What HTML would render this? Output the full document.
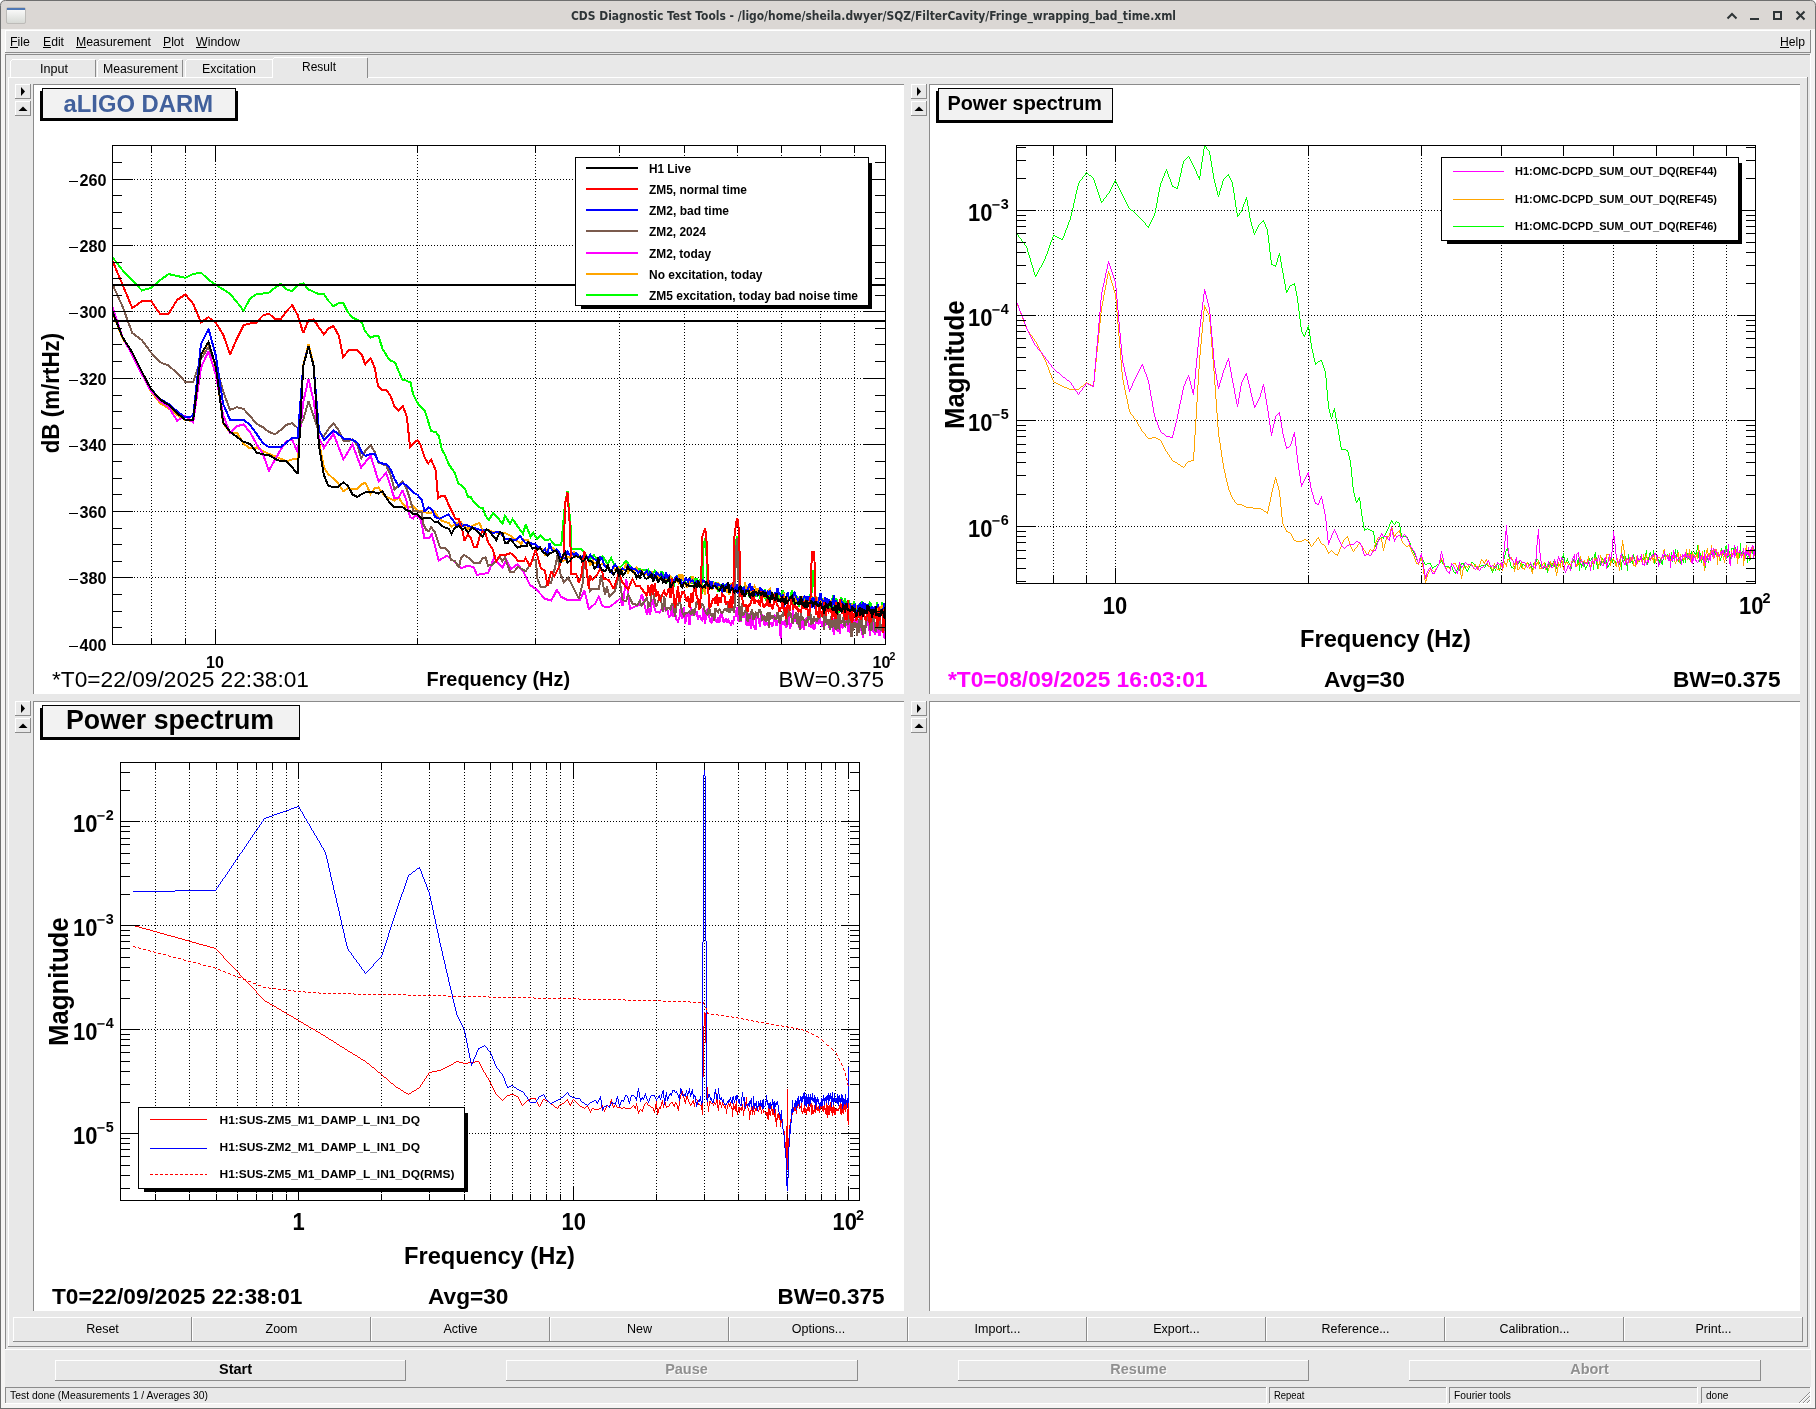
<!DOCTYPE html>
<html><head><meta charset="utf-8"><title>CDS Diagnostic Test Tools</title>
<style>
html,body{margin:0;padding:0;background:#fff;}
body{width:1816px;height:1409px;overflow:hidden;font-family:"Liberation Sans",sans-serif;}
svg{display:block;position:absolute;left:0;top:0;font-family:"Liberation Sans",sans-serif;will-change:transform;}
</style></head><body>
<svg width="1816" height="1409" viewBox="0 0 1816 1409" shape-rendering="crispEdges">
<rect x="0" y="0" width="1816" height="1409" fill="#ffffff" /><path d="M0.5 1409V5.5Q0.5 0.5 5.5 0.5H1810.5Q1815.5 0.5 1815.5 5.5V1409Z" fill="#dbd7d4" stroke="#6f6f6f" stroke-width="1" shape-rendering="auto"/><rect x="0" y="1408" width="1816" height="1" fill="#6f6f6f" /><rect x="1" y="29" width="1814" height="1379" fill="#f5f4f3" /><rect x="5" y="30" width="1806" height="1374" fill="#e8e8e8" /><rect x="5" y="30" width="1806" height="1" fill="#ffffff" /><rect x="5" y="30" width="1" height="23" fill="#ffffff" /><rect x="1810" y="30" width="1" height="23" fill="#8b8b8b" /><text x="873.5" y="20" font-size="12" font-weight="bold" text-anchor="middle" fill="#2e3436" font-family="DejaVu Sans Condensed, DejaVu Sans, sans-serif" textLength="605" lengthAdjust="spacingAndGlyphs">CDS Diagnostic Test Tools - /ligo/home/sheila.dwyer/SQZ/FilterCavity/Fringe_wrapping_bad_time.xml</text><defs><linearGradient id="ig" x1="0" y1="0" x2="0" y2="1"><stop offset="0" stop-color="#ffffff"/><stop offset="1" stop-color="#d6d8d4"/></linearGradient></defs><rect x="6.5" y="7.5" width="19" height="16" rx="1.5" fill="url(#ig)" stroke="#bdbbb8" shape-rendering="auto"/><rect x="7" y="8" width="18" height="2" fill="#4f78b5" /><g stroke="#2e3436" stroke-width="2" fill="none" shape-rendering="auto"><path d="M1727.5 18.5L1732 14L1736.5 18.5"/><path d="M1750 19H1759"/><rect x="1774" y="12" width="7" height="7"/><path d="M1796.5 11.5L1804.5 19.5M1804.5 11.5L1796.5 19.5"/></g><text x="10" y="46" font-size="12.5" fill="#000" textLength="20" lengthAdjust="spacingAndGlyphs" text-decoration="none">File</text><text x="43" y="46" font-size="12.5" fill="#000" textLength="21" lengthAdjust="spacingAndGlyphs" text-decoration="none">Edit</text><text x="76" y="46" font-size="12.5" fill="#000" textLength="75" lengthAdjust="spacingAndGlyphs" text-decoration="none">Measurement</text><text x="163" y="46" font-size="12.5" fill="#000" textLength="21" lengthAdjust="spacingAndGlyphs" text-decoration="none">Plot</text><text x="196" y="46" font-size="12.5" fill="#000" textLength="44" lengthAdjust="spacingAndGlyphs" text-decoration="none">Window</text><text x="1780" y="46" font-size="12.5" fill="#000" textLength="25" lengthAdjust="spacingAndGlyphs" text-decoration="none">Help</text><rect x="10" y="47" width="8" height="1" fill="#000" /><rect x="43" y="47" width="8" height="1" fill="#000" /><rect x="76" y="47" width="10" height="1" fill="#000" /><rect x="163" y="47" width="8" height="1" fill="#000" /><rect x="196" y="47" width="11" height="1" fill="#000" /><rect x="1780" y="47" width="9" height="1" fill="#000" /><rect x="5" y="52" width="1806" height="1" fill="#8b8b8b" /><rect x="5" y="54" width="1806" height="1" fill="#8b8b8b" /><rect x="5" y="54" width="1" height="1296" fill="#8b8b8b" /><rect x="5" y="1349" width="1806" height="1" fill="#ffffff" /><rect x="1810" y="54" width="1" height="1296" fill="#ffffff" /><rect x="8" y="77" width="1800" height="1" fill="#ffffff" /><rect x="8" y="77" width="1" height="1270" fill="#ffffff" /><rect x="8" y="1346" width="1800" height="1" fill="#8b8b8b" /><rect x="1807" y="77" width="1" height="1270" fill="#8b8b8b" /><rect x="12" y="59" width="83" height="1" fill="#ffffff" /><rect x="10" y="61" width="1" height="16" fill="#ffffff" /><rect x="11" y="60" width="1" height="1" fill="#ffffff" /><rect x="95" y="60" width="1" height="17" fill="#8b8b8b" /><text x="40" y="73" font-size="12.5" fill="#000" textLength="28" lengthAdjust="spacingAndGlyphs">Input</text><rect x="99" y="59" width="83" height="1" fill="#ffffff" /><rect x="97" y="61" width="1" height="16" fill="#ffffff" /><rect x="98" y="60" width="1" height="1" fill="#ffffff" /><rect x="182" y="60" width="1" height="17" fill="#8b8b8b" /><text x="103" y="73" font-size="12.5" fill="#000" textLength="75" lengthAdjust="spacingAndGlyphs">Measurement</text><rect x="187" y="59" width="85" height="1" fill="#ffffff" /><rect x="185" y="61" width="1" height="16" fill="#ffffff" /><rect x="186" y="60" width="1" height="1" fill="#ffffff" /><text x="202" y="73" font-size="12.5" fill="#000" textLength="54" lengthAdjust="spacingAndGlyphs">Excitation</text><rect x="272" y="57" width="96" height="21" fill="#e8e8e8" /><rect x="274" y="57" width="93" height="1" fill="#ffffff" /><rect x="272" y="59" width="1" height="19" fill="#ffffff" /><rect x="273" y="58" width="1" height="1" fill="#ffffff" /><rect x="367" y="58" width="1" height="20" fill="#8b8b8b" /><text x="302" y="71" font-size="12.5" fill="#000" textLength="34" lengthAdjust="spacingAndGlyphs">Result</text><rect x="33" y="84" width="871" height="610" fill="#fff" /><rect x="33" y="84" width="871" height="1" fill="#8b8b8b" /><rect x="33" y="84" width="1" height="610" fill="#8b8b8b" /><rect x="15" y="84" width="16" height="15" fill="#e8e8e8" /><rect x="15" y="84" width="16" height="1" fill="#ffffff" /><rect x="15" y="84" width="1" height="15" fill="#ffffff" /><rect x="15" y="98" width="16" height="1" fill="#8b8b8b" /><rect x="30" y="84" width="1" height="15" fill="#8b8b8b" /><rect x="15" y="101" width="16" height="15" fill="#e8e8e8" /><rect x="15" y="101" width="16" height="1" fill="#ffffff" /><rect x="15" y="101" width="1" height="15" fill="#ffffff" /><rect x="15" y="115" width="16" height="1" fill="#8b8b8b" /><rect x="30" y="101" width="1" height="15" fill="#8b8b8b" /><path d="M21 87V96L25 91.5Z" fill="#000" shape-rendering="auto"/><path d="M18.5 111H27.5L23 106.5Z" fill="#000" shape-rendering="auto"/><rect x="929" y="84" width="871" height="610" fill="#fff" /><rect x="929" y="84" width="871" height="1" fill="#8b8b8b" /><rect x="929" y="84" width="1" height="610" fill="#8b8b8b" /><rect x="911" y="84" width="16" height="15" fill="#e8e8e8" /><rect x="911" y="84" width="16" height="1" fill="#ffffff" /><rect x="911" y="84" width="1" height="15" fill="#ffffff" /><rect x="911" y="98" width="16" height="1" fill="#8b8b8b" /><rect x="926" y="84" width="1" height="15" fill="#8b8b8b" /><rect x="911" y="101" width="16" height="15" fill="#e8e8e8" /><rect x="911" y="101" width="16" height="1" fill="#ffffff" /><rect x="911" y="101" width="1" height="15" fill="#ffffff" /><rect x="911" y="115" width="16" height="1" fill="#8b8b8b" /><rect x="926" y="101" width="1" height="15" fill="#8b8b8b" /><path d="M917 87V96L921 91.5Z" fill="#000" shape-rendering="auto"/><path d="M914.5 111H923.5L919 106.5Z" fill="#000" shape-rendering="auto"/><rect x="33" y="701" width="871" height="610" fill="#fff" /><rect x="33" y="701" width="871" height="1" fill="#8b8b8b" /><rect x="33" y="701" width="1" height="610" fill="#8b8b8b" /><rect x="15" y="701" width="16" height="15" fill="#e8e8e8" /><rect x="15" y="701" width="16" height="1" fill="#ffffff" /><rect x="15" y="701" width="1" height="15" fill="#ffffff" /><rect x="15" y="715" width="16" height="1" fill="#8b8b8b" /><rect x="30" y="701" width="1" height="15" fill="#8b8b8b" /><rect x="15" y="718" width="16" height="15" fill="#e8e8e8" /><rect x="15" y="718" width="16" height="1" fill="#ffffff" /><rect x="15" y="718" width="1" height="15" fill="#ffffff" /><rect x="15" y="732" width="16" height="1" fill="#8b8b8b" /><rect x="30" y="718" width="1" height="15" fill="#8b8b8b" /><path d="M21 704V713L25 708.5Z" fill="#000" shape-rendering="auto"/><path d="M18.5 728H27.5L23 723.5Z" fill="#000" shape-rendering="auto"/><rect x="929" y="701" width="871" height="610" fill="#fff" /><rect x="929" y="701" width="871" height="1" fill="#8b8b8b" /><rect x="929" y="701" width="1" height="610" fill="#8b8b8b" /><rect x="911" y="701" width="16" height="15" fill="#e8e8e8" /><rect x="911" y="701" width="16" height="1" fill="#ffffff" /><rect x="911" y="701" width="1" height="15" fill="#ffffff" /><rect x="911" y="715" width="16" height="1" fill="#8b8b8b" /><rect x="926" y="701" width="1" height="15" fill="#8b8b8b" /><rect x="911" y="718" width="16" height="15" fill="#e8e8e8" /><rect x="911" y="718" width="16" height="1" fill="#ffffff" /><rect x="911" y="718" width="1" height="15" fill="#ffffff" /><rect x="911" y="732" width="16" height="1" fill="#8b8b8b" /><rect x="926" y="718" width="1" height="15" fill="#8b8b8b" /><path d="M917 704V713L921 708.5Z" fill="#000" shape-rendering="auto"/><path d="M914.5 728H923.5L919 723.5Z" fill="#000" shape-rendering="auto"/><rect x="13" y="1317" width="179" height="25" fill="#e8e8e8" /><rect x="13" y="1317" width="179" height="1" fill="#ffffff" /><rect x="13" y="1317" width="1" height="25" fill="#ffffff" /><rect x="13" y="1341" width="179" height="1" fill="#8b8b8b" /><rect x="191" y="1317" width="1" height="25" fill="#8b8b8b" /><text x="102.5" y="1333" font-size="12.5" text-anchor="middle" fill="#000" >Reset</text><rect x="192" y="1317" width="179" height="25" fill="#e8e8e8" /><rect x="192" y="1317" width="179" height="1" fill="#ffffff" /><rect x="192" y="1317" width="1" height="25" fill="#ffffff" /><rect x="192" y="1341" width="179" height="1" fill="#8b8b8b" /><rect x="370" y="1317" width="1" height="25" fill="#8b8b8b" /><text x="281.5" y="1333" font-size="12.5" text-anchor="middle" fill="#000" >Zoom</text><rect x="371" y="1317" width="179" height="25" fill="#e8e8e8" /><rect x="371" y="1317" width="179" height="1" fill="#ffffff" /><rect x="371" y="1317" width="1" height="25" fill="#ffffff" /><rect x="371" y="1341" width="179" height="1" fill="#8b8b8b" /><rect x="549" y="1317" width="1" height="25" fill="#8b8b8b" /><text x="460.5" y="1333" font-size="12.5" text-anchor="middle" fill="#000" >Active</text><rect x="550" y="1317" width="179" height="25" fill="#e8e8e8" /><rect x="550" y="1317" width="179" height="1" fill="#ffffff" /><rect x="550" y="1317" width="1" height="25" fill="#ffffff" /><rect x="550" y="1341" width="179" height="1" fill="#8b8b8b" /><rect x="728" y="1317" width="1" height="25" fill="#8b8b8b" /><text x="639.5" y="1333" font-size="12.5" text-anchor="middle" fill="#000" >New</text><rect x="729" y="1317" width="179" height="25" fill="#e8e8e8" /><rect x="729" y="1317" width="179" height="1" fill="#ffffff" /><rect x="729" y="1317" width="1" height="25" fill="#ffffff" /><rect x="729" y="1341" width="179" height="1" fill="#8b8b8b" /><rect x="907" y="1317" width="1" height="25" fill="#8b8b8b" /><text x="818.5" y="1333" font-size="12.5" text-anchor="middle" fill="#000" >Options...</text><rect x="908" y="1317" width="179" height="25" fill="#e8e8e8" /><rect x="908" y="1317" width="179" height="1" fill="#ffffff" /><rect x="908" y="1317" width="1" height="25" fill="#ffffff" /><rect x="908" y="1341" width="179" height="1" fill="#8b8b8b" /><rect x="1086" y="1317" width="1" height="25" fill="#8b8b8b" /><text x="997.5" y="1333" font-size="12.5" text-anchor="middle" fill="#000" >Import...</text><rect x="1087" y="1317" width="179" height="25" fill="#e8e8e8" /><rect x="1087" y="1317" width="179" height="1" fill="#ffffff" /><rect x="1087" y="1317" width="1" height="25" fill="#ffffff" /><rect x="1087" y="1341" width="179" height="1" fill="#8b8b8b" /><rect x="1265" y="1317" width="1" height="25" fill="#8b8b8b" /><text x="1176.5" y="1333" font-size="12.5" text-anchor="middle" fill="#000" >Export...</text><rect x="1266" y="1317" width="179" height="25" fill="#e8e8e8" /><rect x="1266" y="1317" width="179" height="1" fill="#ffffff" /><rect x="1266" y="1317" width="1" height="25" fill="#ffffff" /><rect x="1266" y="1341" width="179" height="1" fill="#8b8b8b" /><rect x="1444" y="1317" width="1" height="25" fill="#8b8b8b" /><text x="1355.5" y="1333" font-size="12.5" text-anchor="middle" fill="#000" >Reference...</text><rect x="1445" y="1317" width="179" height="25" fill="#e8e8e8" /><rect x="1445" y="1317" width="179" height="1" fill="#ffffff" /><rect x="1445" y="1317" width="1" height="25" fill="#ffffff" /><rect x="1445" y="1341" width="179" height="1" fill="#8b8b8b" /><rect x="1623" y="1317" width="1" height="25" fill="#8b8b8b" /><text x="1534.5" y="1333" font-size="12.5" text-anchor="middle" fill="#000" >Calibration...</text><rect x="1624" y="1317" width="179" height="25" fill="#e8e8e8" /><rect x="1624" y="1317" width="179" height="1" fill="#ffffff" /><rect x="1624" y="1317" width="1" height="25" fill="#ffffff" /><rect x="1624" y="1341" width="179" height="1" fill="#8b8b8b" /><rect x="1802" y="1317" width="1" height="25" fill="#8b8b8b" /><text x="1713.5" y="1333" font-size="12.5" text-anchor="middle" fill="#000" >Print...</text><rect x="55" y="1360" width="351" height="21" fill="#e8e8e8" /><rect x="55" y="1360" width="351" height="1" fill="#ffffff" /><rect x="55" y="1360" width="1" height="21" fill="#ffffff" /><rect x="55" y="1380" width="351" height="1" fill="#8b8b8b" /><rect x="405" y="1360" width="1" height="21" fill="#8b8b8b" /><text x="235.5" y="1374" font-size="14.5" font-weight="bold" text-anchor="middle" fill="#000" >Start</text><rect x="506" y="1360" width="352" height="21" fill="#e8e8e8" /><rect x="506" y="1360" width="352" height="1" fill="#ffffff" /><rect x="506" y="1360" width="1" height="21" fill="#ffffff" /><rect x="506" y="1380" width="352" height="1" fill="#8b8b8b" /><rect x="857" y="1360" width="1" height="21" fill="#8b8b8b" /><text x="687.5" y="1375" font-size="14.5" font-weight="bold" text-anchor="middle" fill="#ffffff" >Pause</text><text x="686.5" y="1374" font-size="14.5" font-weight="bold" text-anchor="middle" fill="#8f8f8f" >Pause</text><rect x="958" y="1360" width="351" height="21" fill="#e8e8e8" /><rect x="958" y="1360" width="351" height="1" fill="#ffffff" /><rect x="958" y="1360" width="1" height="21" fill="#ffffff" /><rect x="958" y="1380" width="351" height="1" fill="#8b8b8b" /><rect x="1308" y="1360" width="1" height="21" fill="#8b8b8b" /><text x="1139.5" y="1375" font-size="14.5" font-weight="bold" text-anchor="middle" fill="#ffffff" >Resume</text><text x="1138.5" y="1374" font-size="14.5" font-weight="bold" text-anchor="middle" fill="#8f8f8f" >Resume</text><rect x="1409" y="1360" width="352" height="21" fill="#e8e8e8" /><rect x="1409" y="1360" width="352" height="1" fill="#ffffff" /><rect x="1409" y="1360" width="1" height="21" fill="#ffffff" /><rect x="1409" y="1380" width="352" height="1" fill="#8b8b8b" /><rect x="1760" y="1360" width="1" height="21" fill="#8b8b8b" /><text x="1590.5" y="1375" font-size="14.5" font-weight="bold" text-anchor="middle" fill="#ffffff" >Abort</text><text x="1589.5" y="1374" font-size="14.5" font-weight="bold" text-anchor="middle" fill="#8f8f8f" >Abort</text><rect x="5" y="1387" width="1262" height="1" fill="#8b8b8b" /><rect x="5" y="1387" width="1" height="17" fill="#8b8b8b" /><rect x="5" y="1403" width="1262" height="1" fill="#ffffff" /><rect x="1266" y="1387" width="1" height="17" fill="#ffffff" /><text x="10" y="1399" font-size="11.5" fill="#000" textLength="198" lengthAdjust="spacingAndGlyphs">Test done (Measurements 1 / Averages 30)</text><rect x="1269" y="1387" width="178" height="1" fill="#8b8b8b" /><rect x="1269" y="1387" width="1" height="17" fill="#8b8b8b" /><rect x="1269" y="1403" width="178" height="1" fill="#ffffff" /><rect x="1446" y="1387" width="1" height="17" fill="#ffffff" /><text x="1274" y="1399" font-size="11.5" fill="#000" textLength="30.5" lengthAdjust="spacingAndGlyphs">Repeat</text><rect x="1449" y="1387" width="249" height="1" fill="#8b8b8b" /><rect x="1449" y="1387" width="1" height="17" fill="#8b8b8b" /><rect x="1449" y="1403" width="249" height="1" fill="#ffffff" /><rect x="1697" y="1387" width="1" height="17" fill="#ffffff" /><text x="1454" y="1399" font-size="11.5" fill="#000" textLength="57" lengthAdjust="spacingAndGlyphs">Fourier tools</text><rect x="1701" y="1387" width="110" height="1" fill="#8b8b8b" /><rect x="1701" y="1387" width="1" height="17" fill="#8b8b8b" /><rect x="1701" y="1403" width="110" height="1" fill="#ffffff" /><rect x="1810" y="1387" width="1" height="17" fill="#ffffff" /><text x="1706" y="1399" font-size="11.5" fill="#000" textLength="22.5" lengthAdjust="spacingAndGlyphs">done</text><g stroke-width="1" shape-rendering="auto"><path d="M1799 1403L1810 1392M1803 1403L1810 1396M1807 1403L1810 1400" stroke="#8b8b8b"/><path d="M1800 1403L1810 1393M1804 1403L1810 1397M1808 1403L1810 1401" stroke="#fff"/></g>
<g id="plot1">
<line x1="151.5" y1="145.5" x2="151.5" y2="644.5" stroke="#000" stroke-width="1" stroke-dasharray="1 2"/><line x1="185.5" y1="145.5" x2="185.5" y2="644.5" stroke="#000" stroke-width="1" stroke-dasharray="1 2"/><line x1="417.5" y1="145.5" x2="417.5" y2="644.5" stroke="#000" stroke-width="1" stroke-dasharray="1 2"/><line x1="535.5" y1="145.5" x2="535.5" y2="644.5" stroke="#000" stroke-width="1" stroke-dasharray="1 2"/><line x1="619.5" y1="145.5" x2="619.5" y2="644.5" stroke="#000" stroke-width="1" stroke-dasharray="1 2"/><line x1="684.5" y1="145.5" x2="684.5" y2="644.5" stroke="#000" stroke-width="1" stroke-dasharray="1 2"/><line x1="737.5" y1="145.5" x2="737.5" y2="644.5" stroke="#000" stroke-width="1" stroke-dasharray="1 2"/><line x1="781.5" y1="145.5" x2="781.5" y2="644.5" stroke="#000" stroke-width="1" stroke-dasharray="1 2"/><line x1="820.5" y1="145.5" x2="820.5" y2="644.5" stroke="#000" stroke-width="1" stroke-dasharray="1 2"/><line x1="854.5" y1="145.5" x2="854.5" y2="644.5" stroke="#000" stroke-width="1" stroke-dasharray="1 2"/><line x1="215.5" y1="145.5" x2="215.5" y2="644.5" stroke="#000" stroke-width="1" stroke-dasharray="1 2"/><line x1="112.5" y1="577.5" x2="885.5" y2="577.5" stroke="#000" stroke-width="1" stroke-dasharray="1 2"/><line x1="112.5" y1="511.5" x2="885.5" y2="511.5" stroke="#000" stroke-width="1" stroke-dasharray="1 2"/><line x1="112.5" y1="444.5" x2="885.5" y2="444.5" stroke="#000" stroke-width="1" stroke-dasharray="1 2"/><line x1="112.5" y1="378.5" x2="885.5" y2="378.5" stroke="#000" stroke-width="1" stroke-dasharray="1 2"/><line x1="112.5" y1="311.5" x2="885.5" y2="311.5" stroke="#000" stroke-width="1" stroke-dasharray="1 2"/><line x1="112.5" y1="245.5" x2="885.5" y2="245.5" stroke="#000" stroke-width="1" stroke-dasharray="1 2"/><line x1="112.5" y1="179.5" x2="885.5" y2="179.5" stroke="#000" stroke-width="1" stroke-dasharray="1 2"/>
<g shape-rendering="crispEdges" clip-path="url(#clip1)"><defs><clipPath id="clip1"><rect x="112" y="145" width="774" height="500"/></clipPath></defs><polyline points="112.2,256.9 122.4,270 132.3,280 141.8,290.4 151,287.9 160,280.2 168.6,274.1 177.1,275.9 185.3,277.9 193.2,274 201,272.5 208.5,279.8 215.9,284.8 223.1,289.4 230.1,293.8 236.9,302.1 243.6,310.6 250.1,298.5 256.5,294.1 262.8,293.5 268.9,292.5 274.9,287.9 280.8,283.8 286.5,289.4 292.2,291.2 297.7,285 303.2,283.5 308.5,289.4 313.7,291.9 318.9,294 323.9,294 328.5,300.9 333.5,306.2 339,302.9 343.1,302.9 348.1,312.5 352.5,317.5 357.5,319.8 361.9,322.5 365,331.2 370.6,337.5 375,336 378.5,336 382.5,348.8 389.4,360 395,362.5 402.2,379.4 406.2,380.6 410.6,382.5 413.1,394.4 418.1,403.8 425,411.2 431.2,431.2 435.6,431.9 438.8,436.2 441.9,449.4 445,455 448.8,464.4 455,473.1 458.1,483.1 462.5,486.2 465,488.8 468.1,496.9 470.6,496.9 473.8,501.9 480,507.5 482.8,508.1 485.6,515.6 488.8,520 493.1,513.1 497.5,517.5 502.5,523.8 505,515.6 510,523.8 512.5,518.8 517.5,526.2 523.1,533.8 525.6,524.4 530.6,536.9 533.1,532.5 536.9,538.8 540.6,535.6 545,540 550,539.4 555,545 561.2,545 565,503.8 567.5,491.2 570.6,526.2 571.2,549.4 581.2,549.4 584.4,552.5 588.8,560 593.8,555 598.8,561.2 602.5,556.2 607.5,563.8 611.2,558.1 615,566.2 620,567.5 626.2,561.2 632.5,568.8 647,570 648.3,569.6 650,574.8 651.6,577 653.2,572.8 654.8,570.7 656.4,574.8 658,576.8 659.6,579.1 661.2,572.4 662.8,572.5 664.3,578.9 665.9,578.5 667.4,582.1 668.9,580.7 670.5,577.8 672,577.6 673.5,586.6 675,578.2 676.5,577 678,576.2 679.5,580.3 680.9,580.8 682.4,579.6 683.9,580.8 685.3,582 686.8,583.5 688.2,584.9 689.6,582.4 691,576.4 692.5,584.3 693.9,577.9 695.3,581.9 696.7,578.1 698,582.8 699.4,580.6 700.8,583.9 702.2,593.7 703.5,548 704.9,538 706.2,548 707.6,583.2 708.9,586.3 710.2,584.1 711.6,585.8 712.9,585.1 714.2,581.8 715.5,586.9 716.8,582.7 718.1,591.4 719.4,584 720.7,588 722,586 723.2,589.1 724.5,584.4 725.8,589.6 727,586.2 728.3,590.8 729.5,588.9 730.8,587.6 732,584.8 733.2,589.9 734.4,589.1 735.7,545 736.9,536 738.1,546 739.3,589.9 740.5,589.4 741.7,589.4 742.9,589.6 744.1,587.3 745.2,586.2 746.4,588.3 747.6,591.7 748.7,594.9 749.9,593.4 751.1,593.9 752.2,593.2 753.4,593.1 754.5,591.7 755.6,593.8 756.8,597.2 757.9,590.7 759,589.7 760.1,598.5 761.3,593.1 762.4,595.7 763.5,595.6 764.6,589.2 765.7,601 766.8,599.1 767.9,594.1 769,596.2 770,594.3 771.1,591.2 772.2,593.9 773.3,595.7 774.3,598.3 775.4,597.2 776.5,595.3 777.5,599.7 778.6,593 779.6,598.3 780.7,599.5 781.7,595.1 782.7,590.3 783.8,593.4 784.8,597.3 785.8,598.4 786.8,601.9 787.9,593.7 788.9,597.1 789.9,599.4 790.9,596.9 791.9,589.8 792.9,600.4 793.9,605.6 794.9,601.4 795.9,595.2 796.9,597 797.9,599.3 798.8,606.9 799.8,600.9 800.8,599.3 801.8,604.3 802.7,599 803.7,605.6 804.6,597.3 805.6,598.1 806.6,602.3 807.5,604.8 808.5,602.3 809.4,601.3 810.3,594.4 811.3,598.2 812.2,575 813.2,570 814.1,576 815,600 815.9,603.9 816.9,601.7 817.8,600.5 818.7,602.1 819.6,603.3 820.5,604.9 821.4,600.5 822.3,601.5 823.2,597.8 824.1,607.9 825,607.5 825.9,602.1 826.8,601.2 827.7,598.8 828.6,603.7 829.5,603.9 830.3,610.7 831.2,604.3 832.1,601 833,595.4 833.8,608.6 834.7,604.6 835.6,598.6 836.4,604.8 837.3,598.8 838.1,616.3 839,608.3 839.9,606.6 840.7,604.2 841.5,597.6 842.4,604.6 843.2,599.8 844.1,607.3 844.9,598 845.7,602.4 846.6,609.7 847.4,611.3 848.2,601.8 849.1,600.7 849.9,609 850.7,609.1 851.5,602.9 852.3,604 853.1,604.1 854,602.5 854.8,604.4 855.6,611.1 856.4,609.3 857.2,614.1 858,606.8 858.8,606.7 859.6,603.9 860.4,606.9 861.2,602.9 861.9,601.4 862.7,610 863.5,612.6 864.3,610.6 865.1,612.4 865.9,608.8 866.6,605.5 867.4,608.4 868.2,606.9 869,604.4 869.7,602.4 870.5,603.3 871.3,608.5 872,609.1 872.8,607 873.5,613.7 874.3,609.4 875,610.9 875.8,613.2 876.5,606.2 877.3,602.2 878,611.8 878.8,606.9 879.5,613.9 880.3,610.6 881,613 881.7,612.2 882.5,602.4 883.2,612.2 883.9,607.4 884.7,607.2 885.4,608.4" fill="none" stroke="#00ff00" stroke-width="2" stroke-linejoin="miter" stroke-miterlimit="2.5" stroke-linecap="square" /><polyline points="112.2,311.5 122.4,338 132.3,354 141.8,373.5 151,391.5 160,403 168.6,408.5 177.1,415 185.3,420 193.2,421 201,355 208.5,342.5 215.9,368 223.1,423 230.1,432.5 236.9,432.5 243.6,443.8 250.1,448.5 256.5,447.5 262.8,451.2 268.9,453.8 274.9,456.2 280.8,458.8 286.5,461.2 292.2,459.4 297.7,459.4 303.2,365.5 308.5,344 313.7,365.5 318.9,442.5 323.9,467.5 328.1,473.8 337.5,482.5 343.4,491.2 348.1,488.1 352.5,489 357.2,488.8 361.9,483.8 365.6,483.1 370.6,493.8 375,488.1 378.5,487.5 382.5,493.1 386.2,496.9 394.4,500.6 398.8,497.5 402.5,503.8 406.2,507.5 413.1,506.2 417.5,510.6 421.9,511 426.2,512.5 430,513.1 434.4,511.2 438.1,516.9 441.2,520.6 448.8,523.1 451.5,526.9 455,523.8 460.6,521.9 462.5,525 468.1,528.8 472.5,525.6 479.4,523.1 482.5,530 488.8,530 492.5,531.9 496.2,532.5 500,534.4 505,533.1 510,535.6 517.5,541.2 521.2,543.8 523.8,539.4 527,540.6 528,539.9 530.4,544.2 532.9,544 535.3,544.4 537.7,548.8 540.1,548.5 542.5,549.3 544.9,555.2 547.2,550.1 549.5,548 551.8,547.4 554.1,548.7 556.4,551.5 558.6,555.5 560.8,559.7 563,560.9 565.2,559.9 567.4,557 569.6,557.8 571.7,555.7 573.9,552.4 576,556.4 578.1,555.8 580.2,556.2 582.2,562.2 584.3,560.1 586.3,557.8 588.3,559.4 590.4,565.6 592.4,560.2 594.3,563.1 596.3,563.6 598.3,564.2 600.2,565.2 602.1,563.5 604.1,564.3 606,565.8 607.9,566 609.7,569.2 611.6,571.4 613.5,566 615.3,569.9 617.2,566.6 619,567.7 620.8,569.1 622.6,570 624.4,568.7 626.2,563.4 627.9,573.4 629.7,569.4 631.4,568.5 633.2,572.1 634.9,569.3 636.6,567.6 638.3,572.8 640,573.1 641.7,570.3 643.4,574.9 645,574.1 646.7,570.7 648.3,578.4 650,575 651.6,571.7 653.2,576.2 654.8,575.7 656.4,578.2 658,572.5 659.6,579.1 661.2,579.2 662.8,578.9 664.3,579 665.9,581.2 667.4,580 668.9,578.7 670.5,576.5 672,582 673.5,582 675,580.5 676.5,580.4 678,582.3 679.5,573.8 680.9,581.9 682.4,574.4 683.9,582.3 685.3,584.7 686.8,587.3 688.2,580.9 689.6,583.6 691,582.4 692.5,576.5 693.9,585 695.3,583.1 696.7,583.5 698,580.8 699.4,583.5 700.8,584.1 702.2,587.7 703.5,585 704.9,594.4 706.2,583.4 707.6,584 708.9,584.7 710.2,582.7 711.6,589.6 712.9,587.3 714.2,581.9 715.5,586.1 716.8,589.3 718.1,581.9 719.4,586.7 720.7,585.7 722,593.5 723.2,588 724.5,585.7 725.8,585.4 727,592.9 728.3,586 729.5,594.4 730.8,583.1 732,587.3 733.2,587.4 734.4,586.1 735.7,587.8 736.9,590.7 738.1,586.7 739.3,584.6 740.5,593.3 741.7,593.9 742.9,587.5 744.1,590.8 745.2,582.2 746.4,593.4 747.6,586.4 748.7,589 749.9,597.5 751.1,587.2 752.2,591.4 753.4,588.3 754.5,586.1 755.6,588.4 756.8,593 757.9,588.3 759,590.7 760.1,595 761.3,592.5 762.4,589.1 763.5,598 764.6,593.9 765.7,598.1 766.8,590.7 767.9,599.4 769,590.2 770,589.2 771.1,593.4 772.2,593.8 773.3,596 774.3,593.6 775.4,597.5 776.5,599.8 777.5,593.9 778.6,591.9 779.6,595.1 780.7,599 781.7,599.2 782.7,595.8 783.8,593.9 784.8,597.1 785.8,600.3 786.8,595.2 787.9,601.7 788.9,598.5 789.9,598.8 790.9,596.1 791.9,602.5 792.9,598.5 793.9,593.9 794.9,601.3 795.9,597.5 796.9,602.4 797.9,599.7 798.8,597.3 799.8,600 800.8,598.1 801.8,597.2 802.7,600 803.7,602.7 804.6,600.4 805.6,600.1 806.6,598.8 807.5,602.4 808.5,601.6 809.4,603.9 810.3,602.2 811.3,607.9 812.2,596.4 813.2,601.3 814.1,603.3 815,604.6 815.9,597.1 816.9,598.2 817.8,602.1 818.7,605.7 819.6,606 820.5,597.9 821.4,603.2 822.3,606.6 823.2,603.1 824.1,599.9 825,601 825.9,599.2 826.8,607.3 827.7,602.8 828.6,602.4 829.5,601.1 830.3,603.5 831.2,601.2 832.1,601.1 833,604.2 833.8,603.7 834.7,606 835.6,605.2 836.4,608.6 837.3,604.8 838.1,605.9 839,605.9 839.9,602.7 840.7,609.2 841.5,603.7 842.4,600.6 843.2,609.7 844.1,607.9 844.9,604.2 845.7,609.1 846.6,609.3 847.4,608.6 848.2,602.7 849.1,607.1 849.9,603.4 850.7,604.8 851.5,605.1 852.3,604.3 853.1,608.7 854,604.7 854.8,609.3 855.6,608 856.4,605.6 857.2,608.2 858,609.9 858.8,611.5 859.6,607.1 860.4,613.5 861.2,609.9 861.9,612.1 862.7,603.9 863.5,604.9 864.3,612.3 865.1,607.7 865.9,610 866.6,612.5 867.4,604.1 868.2,610.2 869,615.1 869.7,611.5 870.5,609.3 871.3,610.9 872,609.2 872.8,611.7 873.5,613.5 874.3,608.7 875,611.3 875.8,610.6 876.5,612 877.3,612.4 878,606.4 878.8,613.6 879.5,612.7 880.3,606.5 881,609.2 881.7,605.5 882.5,609.3 883.2,611.4 883.9,606.7 884.7,608 885.4,607.7" fill="none" stroke="#ffa500" stroke-width="2" stroke-linejoin="miter" stroke-miterlimit="2.5" stroke-linecap="square" /><polyline points="112.2,306.2 122.4,337 132.3,355 141.8,374 151,391 160,401 168.6,407 177.1,420.6 185.3,416.2 193.2,422.5 201,367.5 208.5,351.2 215.9,375 223.1,415 230.1,433.1 236.9,426.2 243.6,424.4 250.1,432.5 256.5,443.8 262.8,453.8 268.9,470.6 274.9,460 280.8,449.4 286.5,441.2 292.2,439.8 297.7,452.5 303.2,402.5 308.5,378.8 313.7,401 318.9,437.5 323.9,448 333.5,433.8 343.4,459.4 352.5,444.4 361.2,467.5 370.6,455.6 378.5,481.2 386.2,473.1 394.4,498.1 398.8,497.5 402.5,490 406.2,500 410,516.9 413.1,518.5 415.6,515.6 420,517.5 421.9,525 424.4,538.1 428.8,538.1 431.9,534.4 438.8,560.6 446.9,555.6 451.2,558.8 461.2,568.1 468.1,565.6 473.8,567.5 476.9,574.8 488.1,573.1 493.8,558.1 502.5,567.5 506.2,560 511.2,569 517.5,564 523.8,572.5 530,585 535.6,588.8 545,598.8 551.2,600.6 556.9,590 561.2,596.9 567.5,600 573.8,600 580,600 584.4,590.6 588.8,608.8 595,603.8 598.8,596.9 602.5,606.2 608.8,607.5 613.8,603.8 620,598.8 622.5,606.2 626.2,578.8 630,608.8 638.8,605 641.9,593.8 647,615 648.3,606.9 650,615.2 651.6,604.1 653.2,599.4 654.8,610.1 656.4,612.4 658,611.5 659.6,612.6 661.2,609.8 662.8,607.8 664.3,607.3 665.9,610.4 667.4,609.9 668.9,616.9 670.5,615.7 672,606.6 673.5,616.7 675,613.4 676.5,619.5 678,621.8 679.5,617.3 680.9,605.9 682.4,618.5 683.9,607.6 685.3,623.5 686.8,612.4 688.2,614.9 689.6,625.1 691,607.1 692.5,616.3 693.9,610.8 695.3,613.7 696.7,612.4 698,619.9 699.4,615 700.8,618.4 702.2,620 703.5,608.2 704.9,624 706.2,615.8 707.6,608.7 708.9,613.9 710.2,621.7 711.6,622.5 712.9,614 714.2,618.1 715.5,618.9 716.8,623 718.1,617.1 719.4,622.9 720.7,613.5 722,614.4 723.2,621.5 724.5,621.9 725.8,618.1 727,621.5 728.3,619.6 729.5,622.5 730.8,624.6 732,621.4 733.2,623 734.4,616.9 735.7,616.2 736.9,607.1 738.1,621.2 739.3,619.4 740.5,622 741.7,609.8 742.9,616.9 744.1,616.6 745.2,610.4 746.4,624.2 747.6,625.9 748.7,613.3 749.9,622.1 751.1,628.7 752.2,613.8 753.4,625.1 754.5,628.2 755.6,629.7 756.8,613.2 757.9,614.8 759,621.4 760.1,626.5 761.3,614 762.4,616.7 763.5,614.9 764.6,626.3 765.7,617.9 766.8,623.7 767.9,624.1 769,626.8 770,623.1 771.1,622.8 772.2,627 773.3,623.6 774.3,614.7 775.4,618.5 776.5,626 777.5,622.1 778.6,619.6 779.6,622.8 780.7,638.5 781.7,621.4 782.7,624.1 783.8,624.1 784.8,620.4 785.8,627.9 786.8,626.3 787.9,624 788.9,615.1 789.9,628.5 790.9,626 791.9,621.7 792.9,608.4 793.9,621.9 794.9,616.1 795.9,621.2 796.9,619.8 797.9,618.2 798.8,627.7 799.8,623.1 800.8,628.9 801.8,617.7 802.7,621.7 803.7,629.7 804.6,624.5 805.6,619.1 806.6,618.3 807.5,619.9 808.5,622.6 809.4,626.6 810.3,623.8 811.3,627 812.2,627.5 813.2,623.8 814.1,629.9 815,627.1 815.9,622.4 816.9,622.6 817.8,623.4 818.7,619.7 819.6,616.7 820.5,623.8 821.4,621 822.3,626.7 823.2,620.7 824.1,624.4 825,624.9 825.9,621.6 826.8,625 827.7,620.4 828.6,621.9 829.5,628.3 830.3,626.3 831.2,624.3 832.1,620.3 833,628 833.8,634.7 834.7,613.4 835.6,630 836.4,625.8 837.3,630.4 838.1,630.8 839,619.6 839.9,633.8 840.7,621.9 841.5,623.7 842.4,628.3 843.2,624.7 844.1,626.6 844.9,622.6 845.7,620 846.6,625.4 847.4,619.8 848.2,632.3 849.1,626.8 849.9,632.8 850.7,619.2 851.5,615 852.3,614 853.1,623.8 854,619.2 854.8,627.7 855.6,618.5 856.4,618.9 857.2,627.5 858,624.1 858.8,629.7 859.6,630.4 860.4,628.2 861.2,620.2 861.9,622 862.7,638.2 863.5,625.4 864.3,628.2 865.1,627.4 865.9,626.7 866.6,626 867.4,624 868.2,624.3 869,616.7 869.7,635.7 870.5,626.6 871.3,620.5 872,630 872.8,630.8 873.5,620.1 874.3,624.9 875,635.3 875.8,630.4 876.5,629.9 877.3,632.9 878,627.2 878.8,626.4 879.5,636.2 880.3,627.1 881,627.7 881.7,631.4 882.5,628.4 883.2,622 883.9,638.1 884.7,628.1 885.4,637.7" fill="none" stroke="#ff00ff" stroke-width="2" stroke-linejoin="miter" stroke-miterlimit="2.5" stroke-linecap="square" /><polyline points="112.2,283.8 122.4,306.2 132.3,333.1 141.8,340 151,352.5 160,362.2 168.6,365.6 177.1,373.1 185.3,381.9 193.2,381.9 201,358.8 208.5,346.9 215.9,365 223.1,391.2 230.1,410 236.9,407.2 243.6,409 250.1,416 256.5,423.8 262.8,427.2 268.9,431.9 274.9,434.4 280.8,430 286.5,424.8 292.2,423.1 297.7,428.1 303.2,420 308.5,401.2 313.7,416.2 318.9,432.5 323.9,436 328.1,429.4 333.5,423.1 338.1,429.4 343.4,440.6 348.1,441.2 352.5,439.4 357.2,445 361.2,458.1 365.6,450.6 370.6,445 375,452.5 378.5,462.5 382.5,464 386.2,465.6 390.6,475 394.4,489.4 398.8,485 402.5,481 406.2,487.5 410,498.8 413.1,510.6 417.5,511.2 421.9,512.5 423.1,523.8 426.2,530 428.8,531.2 431.2,526.9 435,532.5 440,547.5 445.6,548.1 448.8,551.9 451.2,560 455,561.2 458.8,567.5 461.2,557.5 464.4,555 470,558.8 473.8,562.5 480,562.5 482.5,558.1 485.6,557.5 488.1,565.6 491.9,565 496.2,561.2 500,557.5 502.5,561.2 505,557.5 510,571.9 513.8,571.9 518.1,566.9 525.6,571.2 530,565 532.5,560 536.2,560 536.9,577.5 540.6,586.9 545,587.5 548.8,582.5 551.2,582.5 555,567.5 557.5,555 560,572.5 563.8,582.5 568.1,577.5 573.8,588.8 578.8,598.8 582.5,583.8 584.4,555 586.2,567.5 590,591.2 592.5,588.8 598.8,588.8 601.2,575 605,595 606.9,586.2 609.4,596.9 615,591.2 618.8,575 622.5,600 626.2,601.2 628.1,593.8 632.5,603.8 637.5,605 640,600 641.2,606.2 647,597.5 648.3,607 650,606.1 651.6,593.6 653.2,590.9 654.8,601.3 656.4,606.5 658,601.9 659.6,595 661.2,600.7 662.8,611.7 664.3,596.6 665.9,610.4 667.4,607.8 668.9,608 670.5,609.9 672,603.1 673.5,605.8 675,616.7 676.5,605.1 678,605.2 679.5,600.2 680.9,605.7 682.4,612.7 683.9,615.8 685.3,612.7 686.8,612.7 688.2,612.5 689.6,611.2 691,615 692.5,608.8 693.9,615.6 695.3,609.4 696.7,601.1 698,602.9 699.4,609 700.8,607.6 702.2,603.6 703.5,606.2 704.9,611.4 706.2,612.7 707.6,615.2 708.9,606 710.2,612.8 711.6,616.5 712.9,612.9 714.2,620.6 715.5,608.5 716.8,611.2 718.1,612.2 719.4,609.2 720.7,611.2 722,612.8 723.2,611.4 724.5,609 725.8,609.4 727,611.4 728.3,603.6 729.5,613 730.8,606.2 732,610.9 733.2,606.4 734.4,612.9 735.7,560 736.9,538 738.1,562 739.3,613.3 740.5,621.4 741.7,603.1 742.9,615.8 744.1,614.3 745.2,611.1 746.4,606.4 747.6,621.9 748.7,614.5 749.9,618.9 751.1,611.6 752.2,609.6 753.4,619.6 754.5,617.9 755.6,612.4 756.8,612.9 757.9,617.5 759,610 760.1,609.9 761.3,614.2 762.4,620 763.5,619.3 764.6,615.7 765.7,622 766.8,614.1 767.9,612.3 769,627.7 770,612.5 771.1,618.5 772.2,618.3 773.3,616.1 774.3,616.7 775.4,619.3 776.5,618.6 777.5,612.6 778.6,615.9 779.6,623.4 780.7,619.9 781.7,613.8 782.7,616.5 783.8,611 784.8,609.4 785.8,613.6 786.8,625.1 787.9,613.2 788.9,606.1 789.9,616.1 790.9,613.1 791.9,620.9 792.9,623.6 793.9,615.3 794.9,617.8 795.9,612.4 796.9,623.7 797.9,613.5 798.8,617.6 799.8,630.3 800.8,612.6 801.8,618.6 802.7,617.5 803.7,620.3 804.6,620.4 805.6,625.9 806.6,620.7 807.5,621.3 808.5,611.6 809.4,620.4 810.3,611.2 811.3,624.9 812.2,618.2 813.2,623.7 814.1,616 815,619.9 815.9,619.2 816.9,621.8 817.8,618.4 818.7,615.8 819.6,617.1 820.5,615.7 821.4,614.3 822.3,612.9 823.2,611.7 824.1,629.7 825,615.7 825.9,613.9 826.8,625.2 827.7,621.5 828.6,619.4 829.5,626.3 830.3,630.3 831.2,615.9 832.1,628.2 833,623.7 833.8,627 834.7,618 835.6,630 836.4,627.3 837.3,607.3 838.1,628.1 839,628.6 839.9,614.1 840.7,623.4 841.5,620.8 842.4,623 843.2,617.3 844.1,625.5 844.9,626.1 845.7,621.7 846.6,621.9 847.4,613.2 848.2,625.4 849.1,615.8 849.9,622.8 850.7,618.5 851.5,636.9 852.3,623 853.1,631.3 854,623 854.8,623.1 855.6,627.4 856.4,623.3 857.2,636.1 858,622.7 858.8,632.5 859.6,617.5 860.4,619.1 861.2,627.6 861.9,616.8 862.7,634.8 863.5,627.2 864.3,624.9 865.1,634.1 865.9,621.9 866.6,620.7 867.4,610.9 868.2,614.5 869,623.4 869.7,614 870.5,629.3 871.3,630.6 872,627.8 872.8,616.7 873.5,620.9 874.3,618.2 875,629.6 875.8,631.4 876.5,624.7 877.3,626.4 878,627.3 878.8,630.2 879.5,621.4 880.3,621.2 881,630.7 881.7,629.3 882.5,629.3 883.2,627 883.9,631 884.7,629.5 885.4,623.7" fill="none" stroke="#7b5b4e" stroke-width="2" stroke-linejoin="miter" stroke-miterlimit="2.5" stroke-linecap="square" /><polyline points="112.2,311.5 122.4,337 132.3,352.5 141.8,371.5 151,389 160,399 168.6,404 177.1,411.2 185.3,417.5 193.2,416.2 201,343.8 208.5,328.8 215.9,356 223.1,403.8 230.1,420 236.9,420 243.6,419.8 250.1,425 256.5,433.8 262.8,443.1 268.9,447.2 274.9,447.2 280.8,447.2 286.5,442.5 292.2,437.8 297.7,437.8 303.2,366 308.5,346 313.7,367 318.9,430 323.9,440 333.5,430.6 338.1,433.8 343.4,438.5 348.1,438.8 352.5,439.8 357.2,442.5 361.9,452.5 365.6,456 370.6,453.8 375,454.4 378.5,461.9 382.5,463.5 386.2,464 390.6,469.4 394.4,478.8 398.8,486.2 402.5,483.1 406.2,485 413.1,492.5 417.5,494.8 421.9,500 424.4,511.2 428.8,507.5 432.5,510 435,516.9 439.4,518.8 448.1,514.4 451.5,518.1 456.2,525 460.6,523.8 462.5,526.2 465,524.4 472.5,527.5 482.5,530.6 486.2,529.4 492.5,532.8 500,531.9 505,538.8 510,539 515,540.6 520,536.2 525,542.5 527,543.8 528,542.6 530.4,543.1 532.9,544 535.3,543.7 537.7,546.7 540.1,547.9 542.5,551.7 544.9,548.8 547.2,556 549.5,543.4 551.8,549.9 554.1,551.3 556.4,549.1 558.6,551.5 560.8,556.6 563,557.9 565.2,558.5 567.4,551.6 569.6,554.8 571.7,552.2 573.9,555.4 576,552.8 578.1,555.3 580.2,558.5 582.2,556.3 584.3,558.1 586.3,556.4 588.3,558.1 590.4,554.8 592.4,557.9 594.3,559.4 596.3,559.7 598.3,567.3 600.2,557.4 602.1,558.4 604.1,565.1 606,566.9 607.9,566.4 609.7,569.3 611.6,572 613.5,566.1 615.3,564.4 617.2,567.7 619,571.5 620.8,569.9 622.6,568.4 624.4,569.7 626.2,569.8 627.9,564.7 629.7,570.3 631.4,567.1 633.2,568.9 634.9,568.6 636.6,570.6 638.3,573.2 640,570.6 641.7,572 643.4,574.3 645,573.5 646.7,571 648.3,575.2 650,572.3 651.6,573.1 653.2,574.7 654.8,578.5 656.4,572.5 658,574.1 659.6,575.9 661.2,573.5 662.8,576.5 664.3,580 665.9,572 667.4,577.3 668.9,575.6 670.5,583.5 672,579.9 673.5,580.2 675,578.5 676.5,576.3 678,579.7 679.5,580.8 680.9,580.2 682.4,585.5 683.9,583 685.3,578.4 686.8,580.1 688.2,582.2 689.6,578.1 691,581.2 692.5,580.1 693.9,582.6 695.3,582.7 696.7,580.6 698,586.3 699.4,581.1 700.8,585 702.2,580.1 703.5,580.6 704.9,581.7 706.2,582.5 707.6,586.3 708.9,579.7 710.2,589.2 711.6,580.9 712.9,589 714.2,585.4 715.5,583.5 716.8,587.6 718.1,583.9 719.4,585.4 720.7,585.8 722,594.5 723.2,583 724.5,591.9 725.8,585.4 727,584.3 728.3,585.1 729.5,590.6 730.8,586.3 732,584.7 733.2,589.1 734.4,588.3 735.7,590.8 736.9,584.2 738.1,592.5 739.3,591.9 740.5,586.1 741.7,587.5 742.9,590.2 744.1,588.2 745.2,591.7 746.4,591.2 747.6,589.5 748.7,586.3 749.9,583.7 751.1,591.1 752.2,586.5 753.4,594.2 754.5,596.4 755.6,591.4 756.8,594 757.9,595.4 759,594.2 760.1,588.4 761.3,589 762.4,590.7 763.5,592.7 764.6,590 765.7,593.5 766.8,597.2 767.9,592 769,593.5 770,590.6 771.1,593.5 772.2,597 773.3,598.5 774.3,595.2 775.4,592.2 776.5,601.1 777.5,588.5 778.6,593.8 779.6,593 780.7,595.6 781.7,597.6 782.7,594.6 783.8,607.5 784.8,602.8 785.8,599.2 786.8,595.1 787.9,591.9 788.9,600.7 789.9,599.9 790.9,598.7 791.9,602 792.9,599.1 793.9,593.2 794.9,591.8 795.9,596.8 796.9,598.6 797.9,600.3 798.8,599.4 799.8,598 800.8,596.2 801.8,600.7 802.7,601.4 803.7,597.3 804.6,596.3 805.6,598.2 806.6,596.4 807.5,600.5 808.5,596.1 809.4,601.1 810.3,597.5 811.3,601.9 812.2,608.3 813.2,597 814.1,601.2 815,608.7 815.9,604.1 816.9,601.9 817.8,603.1 818.7,600.6 819.6,597 820.5,593.3 821.4,599.5 822.3,600 823.2,605.7 824.1,603.1 825,597.3 825.9,604 826.8,598.5 827.7,606.6 828.6,599.4 829.5,605.7 830.3,603.5 831.2,601.6 832.1,606.9 833,602.7 833.8,595.5 834.7,605 835.6,600.6 836.4,602.5 837.3,604.8 838.1,606.6 839,604.8 839.9,600.9 840.7,602.1 841.5,600.8 842.4,603.9 843.2,602.6 844.1,607.5 844.9,602.7 845.7,608.3 846.6,611.2 847.4,607 848.2,604.9 849.1,609.5 849.9,602.8 850.7,605.6 851.5,610.3 852.3,608 853.1,605.6 854,605.3 854.8,604.7 855.6,611.4 856.4,613.2 857.2,611.6 858,607 858.8,608 859.6,604.2 860.4,603.4 861.2,609.3 861.9,609.4 862.7,603.1 863.5,603.3 864.3,608.6 865.1,603.1 865.9,611.2 866.6,611.7 867.4,604.1 868.2,606.8 869,611 869.7,611.4 870.5,608 871.3,607.7 872,607.3 872.8,610.2 873.5,610.4 874.3,607.7 875,606.8 875.8,608.3 876.5,608 877.3,607.3 878,604.5 878.8,609.2 879.5,611.7 880.3,609.4 881,613.2 881.7,610.5 882.5,611.8 883.2,612.2 883.9,602.7 884.7,611.9 885.4,613.2" fill="none" stroke="#0000ff" stroke-width="2" stroke-linejoin="miter" stroke-miterlimit="2.5" stroke-linecap="square" /><polyline points="112.2,260 122.4,284.4 132.3,308.1 141.8,301.2 151,301 160,313.8 168.6,313.8 177.1,300 185.3,294.4 193.2,303.8 201,322.5 208.5,317.2 215.9,323.1 223.1,334.4 230.1,354.4 236.9,338.8 243.6,325.2 250.1,323.5 256.5,322.5 262.8,315.6 268.9,313.5 274.9,319 280.8,319 286.5,311.2 292.2,305.2 297.7,315 303.2,333.1 308.5,320 313.7,319.4 318.9,327.5 323.9,334.4 328.5,328.5 333.5,326 338.8,335.6 343.1,356.9 348.8,350.2 356.9,350 361.9,354.8 365.2,364.4 370.6,358.1 374.6,367.5 378.1,386 381.9,389.8 386.2,389.8 390.6,396.2 394.4,406.2 398.8,410.6 402.8,406.2 406.9,416.9 410,446.9 417.5,440 420.6,445 424.4,456.9 428.1,463.5 431.2,460 435.6,470 438.1,498.1 441.2,496.2 445,496.2 448.8,505 455.6,519 458.8,519 462.5,531.2 464.4,540.6 468.1,534.4 470.6,537.5 473.8,546.9 476.9,546.9 480,535 482.8,531.5 485.6,533.8 488.1,542.5 492.5,548.8 496.2,561.2 500,555 505,555 510.6,553.1 513.8,555.6 518.1,561.2 523.8,561.2 525.6,558.1 530,566.2 535.6,549.4 540.6,567.5 545,571.2 547.5,586.2 551.2,571.2 554.4,576.2 558.8,567.5 563.8,555 565,503.8 567.5,492.5 570,527.5 571.2,573.8 576.2,573.8 578.8,582.5 581.2,576.2 584.4,551.2 588.8,588.8 590,575 592.5,580 596.2,576.2 601.2,567.5 603.8,578.8 608.8,580 613.8,588.8 618.8,572.5 622.5,582.5 628.1,589.4 632.5,578.8 636.2,586.2 640,586.2 647,596.2 648.3,585.4 650,596.2 651.6,584.6 653.2,594.5 654.8,583.3 656.4,596.6 658,591.3 659.6,601.2 661.2,597.8 662.8,592.9 664.3,591 665.9,596.1 667.4,593.1 668.9,588 670.5,597.7 672,578.5 673.5,594 675,608 676.5,598.1 678,586.2 679.5,602.2 680.9,596.7 682.4,592 683.9,592.2 685.3,597 686.8,601.7 688.2,595.9 689.6,607.8 691,593 692.5,602.4 693.9,587.7 695.3,585.4 696.7,597 698,599.5 699.4,609.6 700.8,596.1 702.2,537 703.5,533 704.9,528.5 706.2,534 707.6,566 708.9,605.6 710.2,608.1 711.6,603.3 712.9,599.4 714.2,598.7 715.5,603.8 716.8,594 718.1,606.3 719.4,596.9 720.7,602.4 722,594.1 723.2,595.3 724.5,596.2 725.8,604.5 727,601.8 728.3,602.1 729.5,607.8 730.8,596.5 732,607.5 733.2,598.7 734.4,537 735.7,527 736.9,518 738.1,520 739.3,541 740.5,596.5 741.7,593.6 742.9,603.4 744.1,605.8 745.2,605.7 746.4,605 747.6,611.8 748.7,603.9 749.9,606.1 751.1,602.2 752.2,598.1 753.4,590.5 754.5,604.2 755.6,600.5 756.8,601.1 757.9,600.6 759,604.6 760.1,605.2 761.3,591.1 762.4,602.4 763.5,607.3 764.6,606.8 765.7,603.5 766.8,606 767.9,595.5 769,607.2 770,603.5 771.1,605.6 772.2,609.2 773.3,606.1 774.3,598.7 775.4,593.8 776.5,602.9 777.5,605.7 778.6,607.1 779.6,611.9 780.7,608.3 781.7,607.9 782.7,595.8 783.8,610.9 784.8,607.3 785.8,618.7 786.8,611.1 787.9,602.3 788.9,607.4 789.9,610.6 790.9,601.5 791.9,597.6 792.9,609.8 793.9,604.2 794.9,606.3 795.9,608.1 796.9,606 797.9,612.3 798.8,609.5 799.8,609.6 800.8,613 801.8,607.9 802.7,601 803.7,608.4 804.6,600.8 805.6,609.9 806.6,601.9 807.5,608.6 808.5,616 809.4,612.9 810.3,604.5 811.3,567 812.2,551.5 813.2,551.5 814.1,551.5 815,573 815.9,614.5 816.9,611.4 817.8,614.1 818.7,617.9 819.6,605.3 820.5,613.4 821.4,611.2 822.3,616.5 823.2,608.7 824.1,602.4 825,611.5 825.9,616.2 826.8,609.3 827.7,609.4 828.6,611.8 829.5,610.2 830.3,608.7 831.2,608.8 832.1,619.6 833,608.8 833.8,612.5 834.7,618.1 835.6,617.8 836.4,602.3 837.3,607.4 838.1,604.8 839,611.2 839.9,599.2 840.7,604.1 841.5,611.4 842.4,614.1 843.2,605.7 844.1,613.7 844.9,619.7 845.7,607.2 846.6,619.8 847.4,612.4 848.2,600.4 849.1,613.7 849.9,613.6 850.7,621.2 851.5,609.2 852.3,623.4 853.1,613 854,616.3 854.8,612.3 855.6,616.4 856.4,620.6 857.2,613.7 858,610.8 858.8,617.5 859.6,612.4 860.4,615.5 861.2,619.6 861.9,614.9 862.7,616.2 863.5,615.3 864.3,614.8 865.1,619.1 865.9,621.1 866.6,616.1 867.4,605 868.2,606.4 869,619.1 869.7,622.9 870.5,622 871.3,612.3 872,616.3 872.8,612.2 873.5,617.4 874.3,614.8 875,609.7 875.8,618.7 876.5,615.6 877.3,627.2 878,621.9 878.8,607.2 879.5,620.6 880.3,610.8 881,612.4 881.7,614.8 882.5,608.7 883.2,632.8 883.9,620.6 884.7,611.2 885.4,622.4" fill="none" stroke="#ff0000" stroke-width="2" stroke-linejoin="miter" stroke-miterlimit="2.5" stroke-linecap="square" /><rect x="112" y="284" width="774" height="2" fill="#000"/><rect x="112" y="320" width="774" height="2" fill="#000"/><polyline points="112.2,311.2 122.4,337 132.3,352.5 141.8,371.5 151,389 160,399.4 168.6,405 177.1,413.1 185.3,419.8 193.2,420 201,354.4 208.5,341.9 215.9,367 223.1,422.5 230.1,431.9 236.9,436.9 243.6,441.9 250.1,443.8 256.5,452.5 262.8,454.4 268.9,455 274.9,458.8 280.8,461.2 286.5,461.2 292.2,467.5 297.7,473.8 303.2,366.2 308.5,346.2 313.7,366.2 318.9,445 323.9,475 328.1,485.6 333.5,487.2 338.1,486.9 343.4,482.2 348.1,486.2 352.5,494.4 357.2,496.9 361.9,494 366.2,492.1 370.6,491.9 375,492.5 378.5,493.5 382.5,491.2 386.2,497.5 390.6,503.8 394.4,507.2 402.5,507.2 406.2,510 410,511.2 413.1,514.4 417.5,514.4 421.9,518.8 426.2,517.8 430,517.5 434.4,521.9 438.1,521.5 441.2,525.6 445,527.5 448.8,528.8 451.5,533.8 455,527.5 458.8,526.2 462.5,529.4 465,528.1 468.1,532.5 472.5,527.5 476.9,531.2 482.5,536.9 486.2,529.4 488.8,530.6 496.2,540 500,531.9 502.5,533.1 505,542.5 508.1,542.5 510,538.8 517.5,547.5 521.2,546.2 527,545.6 528,541.7 530.4,545.7 532.9,548.7 535.3,547.5 537.7,549.7 540.1,547.7 542.5,551.9 544.9,553.1 547.2,555.6 549.5,553.5 551.8,552.7 554.1,550.7 556.4,550.7 558.6,556.2 560.8,562.7 563,555.1 565.2,552.3 567.4,562.6 569.6,561.1 571.7,558.2 573.9,556.9 576,556.1 578.1,557.2 580.2,556.3 582.2,561.5 584.3,560.3 586.3,556.8 588.3,560.8 590.4,561.3 592.4,561.7 594.3,568.5 596.3,567.2 598.3,557.7 600.2,567.4 602.1,569.7 604.1,571.1 606,570.6 607.9,564.3 609.7,571.9 611.6,570.3 613.5,574.3 615.3,572.2 617.2,567.6 619,576.6 620.8,569.1 622.6,575.1 624.4,573.4 626.2,570.9 627.9,566.6 629.7,570.2 631.4,570.2 633.2,572.4 634.9,572.7 636.6,577.9 638.3,575.2 640,577.6 641.7,571.8 643.4,574.1 645,578.1 646.7,578.6 648.3,578.2 650,575.5 651.6,574.2 653.2,582.2 654.8,575.9 656.4,577.1 658,582.7 659.6,579 661.2,577.4 662.8,581.8 664.3,579.2 665.9,583.8 667.4,580.1 668.9,578.5 670.5,588 672,585 673.5,582.2 675,581.8 676.5,578.6 678,581.1 679.5,579.4 680.9,585.8 682.4,587.2 683.9,583.1 685.3,582.8 686.8,585.5 688.2,584.5 689.6,586.3 691,586.4 692.5,586.3 693.9,587.2 695.3,582.6 696.7,587.8 698,579.9 699.4,586.4 700.8,585.4 702.2,587.5 703.5,586 704.9,587.4 706.2,581.5 707.6,585.5 708.9,584.8 710.2,588.5 711.6,588.2 712.9,586.4 714.2,586.3 715.5,585.9 716.8,587.8 718.1,589.7 719.4,590.7 720.7,588.3 722,585.6 723.2,586.5 724.5,591.4 725.8,586.1 727,588.5 728.3,582.5 729.5,592.6 730.8,590.1 732,588.1 733.2,589.6 734.4,592.3 735.7,590.3 736.9,591.5 738.1,591 739.3,587.4 740.5,585.9 741.7,594.7 742.9,590.1 744.1,595.7 745.2,595.9 746.4,591 747.6,590.6 748.7,591.2 749.9,598.3 751.1,593.4 752.2,592.7 753.4,596.6 754.5,591 755.6,592.3 756.8,592.6 757.9,594.4 759,590.7 760.1,593 761.3,595.6 762.4,592.2 763.5,592.3 764.6,597.1 765.7,592.8 766.8,595.5 767.9,598.9 769,596.9 770,602.6 771.1,596.7 772.2,592.3 773.3,598.5 774.3,598.3 775.4,600.2 776.5,593.4 777.5,597.8 778.6,601.9 779.6,599.3 780.7,602.3 781.7,596.7 782.7,600.6 783.8,599.3 784.8,604.4 785.8,596.5 786.8,603.6 787.9,600.6 788.9,600.3 789.9,598.1 790.9,596.9 791.9,595.8 792.9,601.6 793.9,597.8 794.9,604.6 795.9,602.6 796.9,602.8 797.9,605.1 798.8,601.3 799.8,604.6 800.8,596.5 801.8,600.6 802.7,605.4 803.7,601.9 804.6,607.7 805.6,602.9 806.6,600.1 807.5,607.4 808.5,603.5 809.4,602.6 810.3,603.1 811.3,601.1 812.2,602.5 813.2,606.4 814.1,601.8 815,603.6 815.9,601.8 816.9,604.5 817.8,606.3 818.7,606.4 819.6,603.7 820.5,602.6 821.4,606 822.3,608.1 823.2,607.4 824.1,614.3 825,606 825.9,604 826.8,605 827.7,609.2 828.6,603.1 829.5,605.7 830.3,601.1 831.2,605.7 832.1,608.9 833,610 833.8,608.8 834.7,610.3 835.6,604.8 836.4,612.3 837.3,613.1 838.1,602.1 839,603.9 839.9,610 840.7,610.2 841.5,612.2 842.4,608.6 843.2,604.8 844.1,605.9 844.9,613.1 845.7,608.5 846.6,602.9 847.4,608.1 848.2,611.1 849.1,608.9 849.9,611.1 850.7,610.7 851.5,609.3 852.3,606 853.1,609.6 854,611.9 854.8,607.7 855.6,613.3 856.4,616.3 857.2,612.6 858,611.4 858.8,610.4 859.6,607.5 860.4,615.4 861.2,609.3 861.9,608.2 862.7,616.5 863.5,614 864.3,609 865.1,611.8 865.9,612.1 866.6,613.7 867.4,605 868.2,608 869,606.7 869.7,611.9 870.5,609.1 871.3,612.9 872,617.8 872.8,613.4 873.5,608.8 874.3,611.6 875,613.1 875.8,606.2 876.5,616 877.3,612.9 878,614.8 878.8,616.3 879.5,613.2 880.3,616.9 881,614.2 881.7,609.2 882.5,612.8 883.2,612.6 883.9,615.5 884.7,618.8 885.4,608.2" fill="none" stroke="#000" stroke-width="2" stroke-linejoin="miter" stroke-miterlimit="2.5" stroke-linecap="square" /></g>
<rect x="112.5" y="145.5" width="773.0" height="499.0" fill="none" stroke="#000"/><line x1="151.5" y1="644.5" x2="151.5" y2="637.5" stroke="#000" stroke-width="1" /><line x1="151.5" y1="145.5" x2="151.5" y2="152.5" stroke="#000" stroke-width="1" /><line x1="185.5" y1="644.5" x2="185.5" y2="637.5" stroke="#000" stroke-width="1" /><line x1="185.5" y1="145.5" x2="185.5" y2="152.5" stroke="#000" stroke-width="1" /><line x1="417.5" y1="644.5" x2="417.5" y2="637.5" stroke="#000" stroke-width="1" /><line x1="417.5" y1="145.5" x2="417.5" y2="152.5" stroke="#000" stroke-width="1" /><line x1="535.5" y1="644.5" x2="535.5" y2="637.5" stroke="#000" stroke-width="1" /><line x1="535.5" y1="145.5" x2="535.5" y2="152.5" stroke="#000" stroke-width="1" /><line x1="619.5" y1="644.5" x2="619.5" y2="637.5" stroke="#000" stroke-width="1" /><line x1="619.5" y1="145.5" x2="619.5" y2="152.5" stroke="#000" stroke-width="1" /><line x1="684.5" y1="644.5" x2="684.5" y2="637.5" stroke="#000" stroke-width="1" /><line x1="684.5" y1="145.5" x2="684.5" y2="152.5" stroke="#000" stroke-width="1" /><line x1="737.5" y1="644.5" x2="737.5" y2="637.5" stroke="#000" stroke-width="1" /><line x1="737.5" y1="145.5" x2="737.5" y2="152.5" stroke="#000" stroke-width="1" /><line x1="781.5" y1="644.5" x2="781.5" y2="637.5" stroke="#000" stroke-width="1" /><line x1="781.5" y1="145.5" x2="781.5" y2="152.5" stroke="#000" stroke-width="1" /><line x1="820.5" y1="644.5" x2="820.5" y2="637.5" stroke="#000" stroke-width="1" /><line x1="820.5" y1="145.5" x2="820.5" y2="152.5" stroke="#000" stroke-width="1" /><line x1="854.5" y1="644.5" x2="854.5" y2="637.5" stroke="#000" stroke-width="1" /><line x1="854.5" y1="145.5" x2="854.5" y2="152.5" stroke="#000" stroke-width="1" /><line x1="215.5" y1="644.5" x2="215.5" y2="628.5" stroke="#000" stroke-width="1" /><line x1="215.5" y1="145.5" x2="215.5" y2="161.5" stroke="#000" stroke-width="1" /><line x1="112.5" y1="627.5" x2="121.5" y2="627.5" stroke="#000" stroke-width="1" /><line x1="885.5" y1="627.5" x2="874.5" y2="627.5" stroke="#000" stroke-width="1" /><line x1="112.5" y1="611.5" x2="121.5" y2="611.5" stroke="#000" stroke-width="1" /><line x1="885.5" y1="611.5" x2="874.5" y2="611.5" stroke="#000" stroke-width="1" /><line x1="112.5" y1="594.5" x2="121.5" y2="594.5" stroke="#000" stroke-width="1" /><line x1="885.5" y1="594.5" x2="874.5" y2="594.5" stroke="#000" stroke-width="1" /><line x1="112.5" y1="577.5" x2="132.5" y2="577.5" stroke="#000" stroke-width="1" /><line x1="885.5" y1="577.5" x2="863.5" y2="577.5" stroke="#000" stroke-width="1" /><line x1="112.5" y1="561.5" x2="121.5" y2="561.5" stroke="#000" stroke-width="1" /><line x1="885.5" y1="561.5" x2="874.5" y2="561.5" stroke="#000" stroke-width="1" /><line x1="112.5" y1="544.5" x2="121.5" y2="544.5" stroke="#000" stroke-width="1" /><line x1="885.5" y1="544.5" x2="874.5" y2="544.5" stroke="#000" stroke-width="1" /><line x1="112.5" y1="528.5" x2="121.5" y2="528.5" stroke="#000" stroke-width="1" /><line x1="885.5" y1="528.5" x2="874.5" y2="528.5" stroke="#000" stroke-width="1" /><line x1="112.5" y1="511.5" x2="132.5" y2="511.5" stroke="#000" stroke-width="1" /><line x1="885.5" y1="511.5" x2="863.5" y2="511.5" stroke="#000" stroke-width="1" /><line x1="112.5" y1="494.5" x2="121.5" y2="494.5" stroke="#000" stroke-width="1" /><line x1="885.5" y1="494.5" x2="874.5" y2="494.5" stroke="#000" stroke-width="1" /><line x1="112.5" y1="478.5" x2="121.5" y2="478.5" stroke="#000" stroke-width="1" /><line x1="885.5" y1="478.5" x2="874.5" y2="478.5" stroke="#000" stroke-width="1" /><line x1="112.5" y1="461.5" x2="121.5" y2="461.5" stroke="#000" stroke-width="1" /><line x1="885.5" y1="461.5" x2="874.5" y2="461.5" stroke="#000" stroke-width="1" /><line x1="112.5" y1="444.5" x2="132.5" y2="444.5" stroke="#000" stroke-width="1" /><line x1="885.5" y1="444.5" x2="863.5" y2="444.5" stroke="#000" stroke-width="1" /><line x1="112.5" y1="428.5" x2="121.5" y2="428.5" stroke="#000" stroke-width="1" /><line x1="885.5" y1="428.5" x2="874.5" y2="428.5" stroke="#000" stroke-width="1" /><line x1="112.5" y1="411.5" x2="121.5" y2="411.5" stroke="#000" stroke-width="1" /><line x1="885.5" y1="411.5" x2="874.5" y2="411.5" stroke="#000" stroke-width="1" /><line x1="112.5" y1="395.5" x2="121.5" y2="395.5" stroke="#000" stroke-width="1" /><line x1="885.5" y1="395.5" x2="874.5" y2="395.5" stroke="#000" stroke-width="1" /><line x1="112.5" y1="378.5" x2="132.5" y2="378.5" stroke="#000" stroke-width="1" /><line x1="885.5" y1="378.5" x2="863.5" y2="378.5" stroke="#000" stroke-width="1" /><line x1="112.5" y1="361.5" x2="121.5" y2="361.5" stroke="#000" stroke-width="1" /><line x1="885.5" y1="361.5" x2="874.5" y2="361.5" stroke="#000" stroke-width="1" /><line x1="112.5" y1="344.5" x2="121.5" y2="344.5" stroke="#000" stroke-width="1" /><line x1="885.5" y1="344.5" x2="874.5" y2="344.5" stroke="#000" stroke-width="1" /><line x1="112.5" y1="328.5" x2="121.5" y2="328.5" stroke="#000" stroke-width="1" /><line x1="885.5" y1="328.5" x2="874.5" y2="328.5" stroke="#000" stroke-width="1" /><line x1="112.5" y1="311.5" x2="132.5" y2="311.5" stroke="#000" stroke-width="1" /><line x1="885.5" y1="311.5" x2="863.5" y2="311.5" stroke="#000" stroke-width="1" /><line x1="112.5" y1="295.5" x2="121.5" y2="295.5" stroke="#000" stroke-width="1" /><line x1="885.5" y1="295.5" x2="874.5" y2="295.5" stroke="#000" stroke-width="1" /><line x1="112.5" y1="278.5" x2="121.5" y2="278.5" stroke="#000" stroke-width="1" /><line x1="885.5" y1="278.5" x2="874.5" y2="278.5" stroke="#000" stroke-width="1" /><line x1="112.5" y1="262.5" x2="121.5" y2="262.5" stroke="#000" stroke-width="1" /><line x1="885.5" y1="262.5" x2="874.5" y2="262.5" stroke="#000" stroke-width="1" /><line x1="112.5" y1="245.5" x2="132.5" y2="245.5" stroke="#000" stroke-width="1" /><line x1="885.5" y1="245.5" x2="863.5" y2="245.5" stroke="#000" stroke-width="1" /><line x1="112.5" y1="228.5" x2="121.5" y2="228.5" stroke="#000" stroke-width="1" /><line x1="885.5" y1="228.5" x2="874.5" y2="228.5" stroke="#000" stroke-width="1" /><line x1="112.5" y1="212.5" x2="121.5" y2="212.5" stroke="#000" stroke-width="1" /><line x1="885.5" y1="212.5" x2="874.5" y2="212.5" stroke="#000" stroke-width="1" /><line x1="112.5" y1="195.5" x2="121.5" y2="195.5" stroke="#000" stroke-width="1" /><line x1="885.5" y1="195.5" x2="874.5" y2="195.5" stroke="#000" stroke-width="1" /><line x1="112.5" y1="179.5" x2="132.5" y2="179.5" stroke="#000" stroke-width="1" /><line x1="885.5" y1="179.5" x2="863.5" y2="179.5" stroke="#000" stroke-width="1" /><line x1="112.5" y1="162.5" x2="121.5" y2="162.5" stroke="#000" stroke-width="1" /><line x1="885.5" y1="162.5" x2="874.5" y2="162.5" stroke="#000" stroke-width="1" /><text x="106.5" y="650.6" font-size="16" font-weight="bold" text-anchor="end" fill="#000" textLength="27" lengthAdjust="spacingAndGlyphs">400</text><rect x="69" y="646" width="9" height="1" fill="#000" /><text x="106.5" y="583.6" font-size="16" font-weight="bold" text-anchor="end" fill="#000" textLength="27" lengthAdjust="spacingAndGlyphs">380</text><rect x="69" y="579" width="9" height="1" fill="#000" /><text x="106.5" y="517.6" font-size="16" font-weight="bold" text-anchor="end" fill="#000" textLength="27" lengthAdjust="spacingAndGlyphs">360</text><rect x="69" y="513" width="9" height="1" fill="#000" /><text x="106.5" y="450.6" font-size="16" font-weight="bold" text-anchor="end" fill="#000" textLength="27" lengthAdjust="spacingAndGlyphs">340</text><rect x="69" y="446" width="9" height="1" fill="#000" /><text x="106.5" y="384.6" font-size="16" font-weight="bold" text-anchor="end" fill="#000" textLength="27" lengthAdjust="spacingAndGlyphs">320</text><rect x="69" y="380" width="9" height="1" fill="#000" /><text x="106.5" y="317.6" font-size="16" font-weight="bold" text-anchor="end" fill="#000" textLength="27" lengthAdjust="spacingAndGlyphs">300</text><rect x="69" y="313" width="9" height="1" fill="#000" /><text x="106.5" y="251.6" font-size="16" font-weight="bold" text-anchor="end" fill="#000" textLength="27" lengthAdjust="spacingAndGlyphs">280</text><rect x="69" y="247" width="9" height="1" fill="#000" /><text x="106.5" y="185.6" font-size="16" font-weight="bold" text-anchor="end" fill="#000" textLength="27" lengthAdjust="spacingAndGlyphs">260</text><rect x="69" y="181" width="9" height="1" fill="#000" /><text x="215" y="667.5" font-size="16" font-weight="bold" text-anchor="middle" fill="#000" >10</text><text x="872.5" y="667.5" font-size="16" font-weight="bold" fill="#000" >10</text><text x="889.5" y="659.5" font-size="10.5" font-weight="bold" fill="#000" >2</text><text x="426.5" y="686" font-size="20" font-weight="bold" fill="#000" textLength="143.5" lengthAdjust="spacingAndGlyphs">Frequency (Hz)</text><text x="52" y="687" font-size="22.7" fill="#000" textLength="257" lengthAdjust="spacingAndGlyphs">*T0=22/09/2025 22:38:01</text><text x="778.5" y="686.5" font-size="22.7" fill="#000" textLength="105.5" lengthAdjust="spacingAndGlyphs">BW=0.375</text><text transform="translate(59.2,453.3) rotate(-90)" font-size="24.5" font-weight="bold" textLength="120.5" lengthAdjust="spacingAndGlyphs">dB (m/rtHz)</text>
<rect x="581" y="163" width="291" height="146" fill="#000" /><rect x="575" y="157" width="294" height="149" fill="#000" /><rect x="576" y="158" width="292" height="147" fill="#fff" /><line x1="586" y1="168" x2="638" y2="168" stroke="#000000" stroke-width="2" /><text x="649" y="173" font-size="12" font-weight="bold" fill="#000" textLength="42" lengthAdjust="spacingAndGlyphs">H1 Live</text><line x1="586" y1="189" x2="638" y2="189" stroke="#ff0000" stroke-width="2" /><text x="649" y="194" font-size="12" font-weight="bold" fill="#000" textLength="98" lengthAdjust="spacingAndGlyphs">ZM5, normal time</text><line x1="586" y1="210" x2="638" y2="210" stroke="#0000ff" stroke-width="2" /><text x="649" y="215" font-size="12" font-weight="bold" fill="#000" textLength="80" lengthAdjust="spacingAndGlyphs">ZM2, bad time</text><line x1="586" y1="231" x2="638" y2="231" stroke="#7b5b4e" stroke-width="2" /><text x="649" y="236" font-size="12" font-weight="bold" fill="#000" textLength="57" lengthAdjust="spacingAndGlyphs">ZM2, 2024</text><line x1="586" y1="253" x2="638" y2="253" stroke="#ff00ff" stroke-width="2" /><text x="649" y="257.5" font-size="12" font-weight="bold" fill="#000" textLength="62" lengthAdjust="spacingAndGlyphs">ZM2, today</text><line x1="586" y1="274" x2="638" y2="274" stroke="#ffa500" stroke-width="2" /><text x="649" y="278.5" font-size="12" font-weight="bold" fill="#000" textLength="113.5" lengthAdjust="spacingAndGlyphs">No excitation, today</text><line x1="586" y1="295" x2="638" y2="295" stroke="#00ff00" stroke-width="2" /><text x="649" y="300" font-size="12" font-weight="bold" fill="#000" textLength="209" lengthAdjust="spacingAndGlyphs">ZM5 excitation, today bad noise time</text>
<rect x="40" y="91" width="198" height="30" fill="#000" /><rect x="42" y="88" width="194" height="31" fill="#000" /><rect x="43" y="89" width="192" height="29" fill="#f2f2f2" /><text x="63.5" y="112" font-size="24.5" font-weight="bold" fill="#41609c" textLength="149.5" lengthAdjust="spacingAndGlyphs" shape-rendering="auto">aLIGO DARM</text>
</g>
<g id="plot2">
<line x1="1053.5" y1="145.5" x2="1053.5" y2="583.5" stroke="#000" stroke-width="1" stroke-dasharray="1 2"/><line x1="1086.5" y1="145.5" x2="1086.5" y2="583.5" stroke="#000" stroke-width="1" stroke-dasharray="1 2"/><line x1="1308.5" y1="145.5" x2="1308.5" y2="583.5" stroke="#000" stroke-width="1" stroke-dasharray="1 2"/><line x1="1421.5" y1="145.5" x2="1421.5" y2="583.5" stroke="#000" stroke-width="1" stroke-dasharray="1 2"/><line x1="1501.5" y1="145.5" x2="1501.5" y2="583.5" stroke="#000" stroke-width="1" stroke-dasharray="1 2"/><line x1="1563.5" y1="145.5" x2="1563.5" y2="583.5" stroke="#000" stroke-width="1" stroke-dasharray="1 2"/><line x1="1613.5" y1="145.5" x2="1613.5" y2="583.5" stroke="#000" stroke-width="1" stroke-dasharray="1 2"/><line x1="1656.5" y1="145.5" x2="1656.5" y2="583.5" stroke="#000" stroke-width="1" stroke-dasharray="1 2"/><line x1="1693.5" y1="145.5" x2="1693.5" y2="583.5" stroke="#000" stroke-width="1" stroke-dasharray="1 2"/><line x1="1726.5" y1="145.5" x2="1726.5" y2="583.5" stroke="#000" stroke-width="1" stroke-dasharray="1 2"/><line x1="1115.5" y1="145.5" x2="1115.5" y2="583.5" stroke="#000" stroke-width="1" stroke-dasharray="1 2"/><line x1="1016.5" y1="210.5" x2="1755.5" y2="210.5" stroke="#000" stroke-width="1" stroke-dasharray="1 2"/><line x1="1016.5" y1="315.5" x2="1755.5" y2="315.5" stroke="#000" stroke-width="1" stroke-dasharray="1 2"/><line x1="1016.5" y1="420.5" x2="1755.5" y2="420.5" stroke="#000" stroke-width="1" stroke-dasharray="1 2"/><line x1="1016.5" y1="526.5" x2="1755.5" y2="526.5" stroke="#000" stroke-width="1" stroke-dasharray="1 2"/>
<g shape-rendering="crispEdges" clip-path="url(#clip2)"><defs><clipPath id="clip2"><rect x="1016" y="145" width="740" height="439"/></clipPath></defs><path d="M1356 501.5h2M1594 555.5h2M1645 555.5h2M1651 555.5h3M1664 555.5h4M1676 555.5h2M1686 555.5h2M1692 555.5h2M1698 555.5h3M1717 555.5h3M1727 555.5h4M1736 555.5h4M1748 555.5h3M1562 556.5h2M1594 556.5h2M1622 556.5h2M1636 556.5h2M1640 556.5h2M1645 556.5h2M1651 556.5h3M1663 556.5h2M1670 556.5h2M1673 556.5h2M1684 556.5h3M1692 556.5h2M1698 556.5h3M1706 556.5h2M1717 556.5h3M1727 556.5h4M1736 556.5h4M1747 556.5h4M1481 565.5h3M1524 565.5h3M1544 565.5h2M1551 565.5h2M1570 565.5h2M1581 565.5h2M1597 565.5h2M1607 565.5h2M1620 565.5h2M1626 565.5h2M1434 566.5h2M1445 566.5h4M1450 566.5h2M1479 566.5h2M1488 566.5h2M1570 566.5h2M1597 566.5h2M1607 566.5h2M1645 553.5h2M1649 553.5h2M1674 553.5h2M1690 553.5h2M1694 553.5h3M1698 553.5h3M1711 553.5h2M1715 553.5h2M1723 553.5h3M1727 553.5h3M1736 553.5h9M1752 553.5h2M1471 562.5h2M1517 562.5h3M1548 562.5h3M1577 562.5h2M1604 562.5h3M1615 562.5h2M1620 562.5h2M1626 562.5h2M1661 562.5h2M1440 561.5h2M1515 561.5h2M1577 561.5h2M1617 561.5h2M1630 561.5h3M1638 561.5h2M1647 561.5h2M1654 561.5h2M1661 561.5h2M1705 561.5h2M1591 558.5h2M1622 558.5h4M1628 558.5h2M1633 558.5h2M1636 558.5h2M1647 558.5h2M1669 558.5h2M1672 558.5h2M1678 558.5h2M1684 558.5h2M1688 558.5h2M1699 558.5h2M1702 558.5h3M1706 558.5h2M1749 558.5h2M1594 554.5h2M1645 554.5h2M1649 554.5h2M1652 554.5h2M1676 554.5h2M1692 554.5h2M1695 554.5h2M1698 554.5h3M1711 554.5h2M1715 554.5h2M1727 554.5h4M1736 554.5h4M1743 554.5h2M1457 569.5h3M1531 569.5h2M1546 569.5h2M1506 550.5h2M1698 550.5h2M1721 550.5h2M1724 550.5h3M1734 550.5h2M1739 550.5h2M1752 550.5h3M1101 201.5h2M1114 181.5h2M1425 564.5h2M1437 564.5h2M1522 564.5h2M1528 564.5h3M1533 564.5h3M1570 564.5h2M1575 564.5h2M1580 564.5h3M1619 564.5h3M1626 564.5h2M1566 560.5h2M1572 560.5h2M1577 560.5h2M1589 560.5h2M1612 560.5h3M1628 560.5h2M1631 560.5h2M1634 560.5h2M1638 560.5h2M1647 560.5h2M1654 560.5h2M1658 560.5h3M1678 560.5h2M1681 560.5h3M1705 560.5h2M1427 563.5h4M1461 563.5h3M1517 563.5h2M1527 563.5h2M1552 563.5h2M1577 563.5h2M1592 563.5h2M1599 563.5h3M1604 563.5h3M1618 563.5h4M1626 563.5h2M1661 563.5h2M1674 552.5h2M1698 552.5h2M1713 552.5h2M1721 552.5h5M1727 552.5h3M1736 552.5h2M1739 552.5h5M1745 552.5h2M1752 552.5h3M1303 335.5h2M1375 544.5h2M1172 186.5h2M1493 568.5h2M1513 568.5h2M1531 568.5h2M1541 568.5h3M1546 568.5h2M1622 557.5h2M1628 557.5h2M1633 557.5h2M1636 557.5h2M1640 557.5h2M1672 557.5h2M1678 557.5h2M1684 557.5h3M1688 557.5h2M1698 557.5h3M1703 557.5h2M1706 557.5h2M1736 557.5h2M1749 557.5h2M1506 549.5h2M1725 549.5h2M1733 549.5h3M1751 549.5h2M1372 531.5h2M1536 559.5h2M1572 559.5h2M1591 559.5h2M1602 559.5h2M1628 559.5h2M1638 559.5h2M1647 559.5h2M1654 559.5h2M1657 559.5h2M1678 559.5h2M1681 559.5h5M1701 559.5h3M1705 559.5h3M1749 559.5h2M1315 363.5h2M1381 537.5h3M1147 226.5h2M1466 570.5h2M1176 188.5h2M1725 548.5h2M1731 548.5h5M1286 290.5h2M1198 177.5h2M1454 572.5h2M1698 551.5h2M1713 551.5h2M1721 551.5h2M1724 551.5h3M1728 551.5h2M1736 551.5h2M1739 551.5h2M1742 551.5h2M1745 551.5h2M1752 551.5h3M1292 284.5h3M1370 530.5h2M1725 546.5h2M1432 567.5h2M1511 567.5h2M1546 567.5h2M1555 567.5h2M1585 567.5h2M1597 567.5h2M1401 536.5h6M1364 529.5h3M1368 529.5h2M1375 543.5h2M1131 210.5h2M1055 236.5h2M1262 221.5h2M1333 410.5h2M1198 176.5h2M1174 187.5h2M1057 237.5h2M1341 449.5h5M1273 265.5h3M1053 235.5h2M1290 285.5h2M1358 499.5h2M1346 450.5h2M1237 215.5h2M1307 328.5h2M1245 199.5h2M1320 360.5h2M1278 255.5h2M1061 239.5h2M1204 146.5h2M1089 175.5h2M1227 175.5h2M1271 264.5h2M1286 291.5h2M1307 327.5h2M1059 238.5h2M1391 521.5h2M1333 411.5h2M1318 361.5h2M1725 547.5h2M1734 547.5h2M1397 522.5h2M1358 498.5h2M1035 275.5h2M1078.5 183v3M1637.5 555v1M1236.5 207v6M1312.5 349v4M1504.5 555v4M1350.5 460v7M1515.5 562v4M1556.5 566v1M1556.5 568v1M1269.5 243v9M1671.5 552v4M1298.5 303v8M1336.5 418v6M1203.5 149v7M1750.5 550v5M1280.5 256v6M1667.5 554v1M1586.5 566v1M1277.5 258v4M1495.5 569v2M1168.5 174v3M1487.5 565v1M1326.5 378v12M1157.5 197v6M1243.5 204v3M1222.5 181v4M1221.5 185v3M1044.5 259v2M1530.5 562v2M1283.5 273v6M1571.5 563v1M1571.5 567v2M1731.5 549v5M1022.5 241v1M1301.5 327v5M1099.5 195v3M1297.5 296v7M1564.5 557v6M1155.5 208v5M1690.5 554v3M1026.5 246v2M1360.5 501v8M1266.5 227v2M1250.5 218v4M1328.5 401v8M1040.5 267v1M1160.5 183v4M1240.5 212v1M1118.5 186v2M1685.5 560v3M1029.5 255v3M1476.5 567v2M1594.5 557v6M1754.5 549v1M1386.5 531v2M1502.5 562v3M1332.5 413v4M1746.5 549v2M1746.5 553v3M1036.5 274v1M1548.5 563v4M1704.5 550v7M1048.5 248v3M1232.5 182v5M1325.5 371v7M1211.5 161v6M1624.5 559v2M1300.5 319v8M1180.5 173v4M1126.5 202v2M1540.5 564v3M1457.5 568v1M1129.5 208v1M1363.5 522v6M1697.5 545v5M1627.5 566v5M1378.5 540v1M1533.5 563v1M1533.5 565v3M1662.5 560v1M1662.5 564v1M1400.5 527v6M1247.5 200v6M1220.5 188v3M1529.5 565v1M1156.5 203v5M1353.5 487v6M1257.5 227v2M1311.5 343v6M1183.5 161v3M1730.5 557v3M1039.5 268v2M1268.5 235v8M1239.5 213v2M1317.5 362v1M1032.5 265v3M1385.5 533v2M1159.5 187v5M1076.5 190v4M1467.5 571v1M1331.5 417v2M1753.5 554v4M1035.5 276v1M1094.5 180v3M1460.5 565v4M1352.5 477v10M1696.5 550v3M1696.5 555v1M1201.5 162v7M1547.5 570v3M1646.5 550v3M1646.5 557v1M1456.5 570v2M1310.5 336v7M1574.5 561v2M1234.5 193v7M1213.5 173v6M1338.5 429v6M1490.5 567v2M1027.5 248v4M1616.5 563v2M1267.5 229v6M1024.5 243v2M1164.5 173v3M1285.5 284v6M1296.5 291v5M1288.5 288v2M1505.5 551v4M1692.5 557v2M1182.5 164v4M1355.5 497v4M1509.5 557v5M1554.5 564v3M1206.5 147v2M1324.5 368v3M1417.5 560v2M1596.5 557v8M1680.5 561v3M1362.5 516v6M1127.5 204v2M1281.5 262v6M1588.5 561v3M1748.5 548v7M1740.5 543v7M1158.5 192v5M1299.5 311v8M1665.5 554v1M1075.5 194v5M1128.5 206v2M1584.5 564v3M1109.5 191v2M1459.5 570v1M1246.5 197v2M1189.5 157v2M1535.5 562v2M1535.5 565v1M1104.5 198v1M1178.5 182v4M1705.5 562v6M1569.5 563v1M1327.5 390v11M1721.5 548v2M1721.5 553v5M1170.5 179v3M1196.5 171v3M1341.5 447v2M1219.5 191v4M1607.5 564v1M1607.5 567v1M1197.5 174v2M1421.5 556v2M1413.5 551v2M1334.5 408v2M1252.5 226v3M1600.5 564v2M1031.5 262v3M1710.5 550v3M1120.5 190v2M1330.5 413v4M1093.5 178v2M1351.5 467v10M1270.5 252v8M1622.5 554v2M1622.5 559v3M1233.5 187v6M1580.5 560v4M1572.5 558v1M1572.5 561v2M1295.5 286v5M1656.5 557v2M1074.5 199v4M1390.5 522v2M1082.5 177v2M1248.5 206v6M1610.5 560v3M1508.5 551v6M1053.5 236v1M1561.5 560v3M1041.5 265v2M1152.5 218v2M1069.5 220v2M1208.5 150v1M1315.5 362v1M1315.5 364v1M1632.5 559v1M1632.5 562v2M1583.5 562v2M1276.5 262v3M1579.5 565v6M1073.5 203v5M1096.5 186v3M1214.5 179v4M1621.5 566v4M1195.5 169v2M1100.5 198v3M1412.5 549v2M1258.5 225v2M1716.5 552v1M1633.5 554v3M1719.5 554v1M1719.5 557v1M1636.5 559v1M1635.5 561v3M1119.5 188v2M1151.5 220v2M1122.5 194v2M1678.5 556v1M1678.5 561v1M1068.5 222v3M1670.5 557v1M1670.5 559v1M1254.5 233v2M1136.5 214v1M1578.5 558v2M1578.5 564v1M1229.5 176v2M1308.5 325v2M1374.5 535v8M1708.5 560v3M1294.5 283v1M1294.5 285v1M1018.5 235v2M1507.5 548v1M1191.5 161v2M1349.5 456v4M1677.5 550v4M1521.5 566v2M1113.5 183v2M1286.5 292v1M1647.5 562v3M1335.5 412v6M1589.5 558v2M1593.5 564v6M1551.5 566v2M1501.5 565v2M1066.5 228v2M1451.5 565v1M1047.5 251v3M1654.5 557v2M1654.5 562v2M1271.5 260v4M1486.5 564v1M1264.5 222v2M1095.5 183v3M1562.5 557v3M1565.5 563v2M1235.5 200v7M1410.5 543v4M1071.5 212v4M1517.5 564v1M1228.5 174v1M1672.5 559v3M1630.5 562v1M1065.5 230v3M1497.5 563v2M1108.5 193v1M1223.5 179v2M1046.5 254v2M1493.5 569v2M1485.5 565v2M1190.5 159v2M1737.5 548v3M1737.5 558v5M1193.5 165v2M1348.5 452v4M1432.5 568v1M1717.5 557v2M1181.5 168v5M1050.5 242v3M1550.5 563v2M1668.5 556v2M1626.5 559v3M1496.5 565v4M1309.5 329v7M1739.5 557v1M1304.5 336v1M1375.5 545v2M1492.5 571v2M1560.5 563v2M1675.5 549v3M1077.5 186v4M1251.5 222v4M1503.5 559v3M1469.5 566v2M1333.5 412v1M1689.5 559v1M1595.5 552v2M1430.5 564v1M1217.5 191v4M1115.5 180v1M1199.5 178v2M1423.5 560v2M1468.5 568v2M1111.5 187v2M1179.5 177v5M1107.5 194v1M1563.5 553v3M1303.5 334v1M1339.5 435v6M1491.5 569v2M1483.5 566v1M1642.5 558v1M1356.5 502v1M1463.5 564v1M1210.5 155v6M1279.5 253v2M1464.5 565v2M1202.5 156v6M1527.5 562v1M1734.5 546v1M1734.5 551v1M1452.5 567v3M1083.5 176v1M1098.5 192v3M1062.5 238v1M1436.5 565v1M1407.5 537v2M1043.5 261v2M1163.5 176v2M1101.5 202v1M1389.5 524v3M1216.5 187v4M1154.5 213v3M1422.5 558v2M1414.5 553v2M1592.5 557v1M1592.5 560v3M1124.5 198v2M1278.5 256v2M1134.5 212v1M1231.5 180v2M1135.5 213v1M1539.5 562v2M1212.5 167v6M1245.5 200v2M1364.5 528v1M1364.5 530v1M1282.5 268v5M1399.5 523v4M1691.5 551v2M1649.5 555v2M1484.5 567v1M1177.5 186v2M1249.5 212v6M1200.5 169v7M1603.5 560v2M1354.5 493v4M1042.5 263v2M1162.5 178v3M1153.5 216v2M1361.5 509v7M1313.5 353v5M1237.5 213v2M1237.5 216v1M1038.5 270v2M1709.5 553v7M1130.5 209v1M1747.5 557v6M1694.5 552v1M1097.5 189v3M1340.5 441v6M1439.5 563v1M1648.5 557v1M1606.5 560v2M1284.5 279v5M1640.5 558v1M1416.5 557v3M1720.5 558v3M1204.5 147v2M1461.5 564v1M1628.5 554v3M1628.5 561v1M1545.5 563v2M1123.5 196v2M1112.5 185v2M1049.5 245v3M1137.5 215v1M1449.5 567v1M1575.5 563v1M1617.5 559v2M1567.5 558v2M1187.5 157v1M1659.5 561v2M1442.5 562v2M1184.5 160v1M1674.5 554v2M1143.5 221v1M1307.5 329v1M1144.5 222v1M1106.5 195v2M1265.5 224v3M1028.5 252v3M1052.5 237v3M1321.5 361v1M1510.5 562v4M1314.5 358v4M1121.5 192v2M1498.5 565v4M1585.5 568v2M1167.5 171v3M1020.5 238v1M1242.5 207v3M1194.5 167v2M1070.5 216v4M1209.5 151v4M1634.5 559v1M1226.5 176v1M1150.5 222v2M1379.5 539v1M1653.5 550v4M1263.5 220v1M1581.5 566v2M1531.5 565v3M1516.5 558v3M1387.5 529v2M1553.5 561v2M1149.5 224v2M1337.5 424v5M1500.5 567v2M1728.5 547v4M1166.5 169v2M1652.5 557v1M1172.5 185v1M1023.5 242v1M1192.5 163v2M1409.5 541v2M1473.5 563v1M1431.5 565v2M1424.5 562v2M1329.5 409v4M1033.5 268v4M1133.5 211v1M1148.5 227v1M1499.5 569v2M1064.5 233v3M1072.5 208v4M1401.5 533v3M1514.5 566v2M1139.5 217v1M1110.5 189v2M1140.5 218v1M1091.5 176v1M1544.5 566v2M1494.5 566v2M1441.5 560v1M1444.5 565v1M1453.5 570v2M1532.5 570v3M1171.5 182v3M1080.5 180v1M1408.5 539v2M1253.5 229v4M1415.5 555v2M1546.5 566v1M1087.5 173v1M1650.5 552v1M1440.5 562v1M1377.5 541v2M1520.5 563v3M1683.5 561v2M1388.5 527v2M1256.5 229v2M1466.5 569v1M1384.5 535v2M1034.5 272v3M1141.5 219v1M1142.5 220v1M1395.5 522v2M1185.5 159v1M1259.5 224v1M1725.5 554v4M1511.5 566v1M1323.5 365v3M1255.5 231v2M1037.5 272v2M1230.5 178v2M1538.5 560v2M1165.5 171v2M1743.5 555v2M1169.5 177v2M1394.5 524v1M1602.5 558v1M1522.5 565v1M1420.5 558v2M1218.5 195v2M1557.5 564v2M1666.5 556v1M1085.5 173v2M1244.5 202v2M1359.5 497v1M1359.5 500v1M1103.5 199v2M1609.5 563v2M1601.5 560v3M1322.5 362v3M1419.5 560v2M1224.5 178v1M1084.5 175v1M1726.5 545v1M1017.5 234v1M1261.5 222v1M1063.5 236v2M1021.5 239v2M1079.5 181v2M1411.5 547v2M1558.5 566v1M1051.5 240v2M1117.5 184v2M1676.5 556v3M1418.5 562v2M1067.5 225v3M1536.5 560v2M1373.5 532v3M1146.5 225v1M1749.5 560v1M1699.5 559v3M1396.5 521v1M1289.5 286v2M1241.5 210v2M1478.5 567v2M1470.5 564v2M1138.5 216v1M1019.5 237v1M1306.5 330v2M1611.5 557v3M1443.5 564v1M1302.5 332v2M1215.5 183v4M1599.5 560v3M1474.5 564v2M1030.5 258v4M1116.5 182v2M1663.5 557v3M1188.5 156v1M1081.5 179v1M1045.5 256v3M1701.5 560v3M1305.5 332v3M1568.5 561v2M1644.5 557v2M1357.5 500v1M1465.5 567v2M1625.5 556v2M1225.5 177v1M1025.5 245v1M1643.5 559v1M1475.5 566v1M1559.5 565v1M1125.5 200v2M1275.5 266v1M1260.5 223v1M1392.5 522v1M1612.5 561v2M1393.5 523v1M1688.5 556v1M1714.5 550v1M1471.5 563v1M1114.5 182v1M1380.5 538v1M1455.5 573v1M1566.5 561v2M1477.5 569v1M1541.5 567v1M1086.5 172v1M1383.5 538v1M1660.5 558v2M1391.5 520v1M1618.5 562v1M1576.5 565v1M1526.5 564v1M1526.5 566v1M1687.5 553v2M1519.5 561v1M1587.5 564v2M1092.5 177v1M1145.5 223v2M1727.5 557v1M1161.5 181v2M1207.5 149v1M1598.5 564v1M1597.5 568v1M1088.5 174v1M1367.5 528v1M1723.5 554v1M1552.5 564v1M1615.5 561v1M1105.5 197v1M1186.5 158v1M1347.5 451v1" stroke="#00ff00" stroke-width="1" fill="none"/><path d="M1645 556.5h2M1665 556.5h5M1672 556.5h2M1677 556.5h2M1680 556.5h3M1687 556.5h2M1690 556.5h2M1694 556.5h4M1701 556.5h2M1708 556.5h3M1712 556.5h2M1716 556.5h4M1730 556.5h2M1736 556.5h3M1743 556.5h2M1663 553.5h2M1677 553.5h2M1685 553.5h2M1688 553.5h2M1708 553.5h3M1712 553.5h2M1725 553.5h5M1731 553.5h3M1737 553.5h2M1749 553.5h2M1420 559.5h2M1507 559.5h3M1580 559.5h2M1587 559.5h2M1603 559.5h3M1612 559.5h2M1630 559.5h3M1639 559.5h2M1644 559.5h2M1649 559.5h2M1652 559.5h2M1655 559.5h2M1670 559.5h2M1683 559.5h2M1743 559.5h2M1445 568.5h2M1514 568.5h2M1522 568.5h3M1539 568.5h3M1563 568.5h2M1328 552.5h2M1663 552.5h2M1685 552.5h2M1706 552.5h2M1712 552.5h2M1720 552.5h2M1727 552.5h2M1739 552.5h2M1747 552.5h3M1510 558.5h2M1594 558.5h2M1630 558.5h3M1651 558.5h4M1683 558.5h2M1690 558.5h2M1737 558.5h2M1743 558.5h2M1420 560.5h2M1481 560.5h2M1485 560.5h2M1587 560.5h2M1603 560.5h3M1625 560.5h2M1628 560.5h2M1631 560.5h2M1636 560.5h4M1641 560.5h2M1644 560.5h2M1655 560.5h2M1670 560.5h2M1743 560.5h2M1474 565.5h2M1500 565.5h2M1520 565.5h2M1558 565.5h3M1576 565.5h2M1589 565.5h2M1615 565.5h2M1633 565.5h3M1703 565.5h2M1469 564.5h3M1500 564.5h2M1505 564.5h2M1515 564.5h2M1520 564.5h2M1551 564.5h2M1558 564.5h3M1568 564.5h3M1576 564.5h2M1615 564.5h2M1703 564.5h2M1447 567.5h2M1463 567.5h2M1502 567.5h2M1514 567.5h2M1529 567.5h2M1545 567.5h3M1563 567.5h2M1663 551.5h2M1698 551.5h2M1706 551.5h2M1712 551.5h2M1720 551.5h2M1734 551.5h2M1747 551.5h3M1483 562.5h2M1534 562.5h2M1537 562.5h2M1553 562.5h2M1565 562.5h3M1574 562.5h2M1585 562.5h2M1591 562.5h3M1610 562.5h2M1625 562.5h2M1561 561.5h2M1581 561.5h4M1587 561.5h2M1592 561.5h2M1610 561.5h2M1617 561.5h2M1625 561.5h2M1628 561.5h2M1637 561.5h2M1641 561.5h2M1346 537.5h2M1378 537.5h2M1416 563.5h3M1453 563.5h3M1504 563.5h3M1515 563.5h2M1526 563.5h2M1536 563.5h3M1543 563.5h2M1550 563.5h2M1553 563.5h2M1578 563.5h2M1615 563.5h2M1703 563.5h2M1204 307.5h2M1371 550.5h3M1663 550.5h2M1698 550.5h2M1706 550.5h2M1711 550.5h2M1714 550.5h3M1734 550.5h2M1751 550.5h2M1665 555.5h5M1672 555.5h2M1677 555.5h2M1687 555.5h3M1696 555.5h2M1701 555.5h2M1708 555.5h3M1712 555.5h2M1718 555.5h2M1730 555.5h3M1736 555.5h3M1740 555.5h2M1743 555.5h2M1753 555.5h2M1600 557.5h2M1651 557.5h2M1657 557.5h3M1661 557.5h2M1668 557.5h2M1687 557.5h2M1690 557.5h2M1736 557.5h3M1743 557.5h2M1322 544.5h2M1622 544.5h2M1317 538.5h2M1380 538.5h2M1433 571.5h2M1531 571.5h2M1294 540.5h2M1302 540.5h2M1306 540.5h2M1458 566.5h2M1465 566.5h2M1488 566.5h3M1500 566.5h2M1545 566.5h3M1589 566.5h2M1335 554.5h3M1606 554.5h3M1677 554.5h2M1685 554.5h2M1688 554.5h2M1691 554.5h3M1696 554.5h2M1708 554.5h3M1712 554.5h2M1725 554.5h2M1728 554.5h2M1731 554.5h3M1737 554.5h2M1740 554.5h2M1753 554.5h2M1430 569.5h2M1497 569.5h3M1517 569.5h2M1425 580.5h2M1406 546.5h2M1745 548.5h2M1751 548.5h2M1244 506.5h2M1296 541.5h6M1181 466.5h2M1734 549.5h2M1745 549.5h2M1751 549.5h2M1531 570.5h2M1204 308.5h2M1288 532.5h2M1064 387.5h3M1387 536.5h2M1275 479.5h2M1246 507.5h7M1253 508.5h8M1148 438.5h4M1156 438.5h2M1304 539.5h2M1394 535.5h2M1062 386.5h2M1081 386.5h2M1286 531.5h2M1398 531.5h2M1191 460.5h3M1069 389.5h10M1242 505.5h2M1391 528.5h2M1178 464.5h2M1152 437.5h4M1556 572.5h2M1408 545.5h2M1622 545.5h2M1461 575.5h2M1060 385.5h2M1091 385.5h3M1237 504.5h5M1067 388.5h2M1058 384.5h2M1089 384.5h2M1056 383.5h2M1087 383.5h2M1266 512.5h2M1173 461.5h2M1188 461.5h3M1261 509.5h2M1108 273.5h2M1158 439.5h2M1264 511.5h2M1054 382.5h2M1175 462.5h2M1720.5 550v1M1720.5 553v2M1333.5 552v1M1105.5 285v5M1512.5 559v2M1196.5 402v17M1515.5 565v2M1473.5 567v2M1674.5 558v4M1599.5 558v7M1218.5 427v10M1423.5 567v7M1557.5 567v5M1119.5 336v12M1621.5 546v12M1633.5 561v4M1215.5 385v14M1274.5 480v4M1116.5 300v12M1203.5 311v11M1127.5 399v5M1705.5 554v9M1095.5 362v10M1213.5 359v12M1231.5 495v2M1571.5 561v3M1731.5 550v3M1731.5 557v1M1020.5 311v3M1121.5 360v12M1488.5 565v1M1221.5 450v7M1480.5 561v3M1614.5 560v3M1606.5 555v4M1647.5 557v3M1438.5 564v2M1210.5 322v12M1134.5 418v1M1375.5 542v3M1118.5 324v12M1197.5 385v17M1135.5 419v1M1195.5 419v16M1362.5 546v2M1202.5 322v11M1401.5 538v3M1560.5 562v2M1560.5 566v2M1393.5 532v3M1024.5 322v2M1644.5 561v3M1115.5 293v7M1636.5 556v4M1100.5 313v10M1366.5 553v1M1594.5 559v2M1224.5 469v4M1194.5 435v17M1348.5 538v3M1041.5 352v2M1201.5 333v11M1212.5 347v12M1103.5 295v6M1750.5 554v4M1099.5 323v10M1385.5 540v4M1048.5 367v3M1193.5 452v8M1273.5 484v4M1117.5 312v12M1094.5 372v10M1200.5 344v11M1098.5 333v10M1111.5 280v3M1704.5 566v5M1609.5 555v6M1735.5 552v3M1437.5 566v2M1374.5 545v4M1280.5 497v10M1711.5 545v5M1722.5 553v3M1513.5 561v6M1411.5 549v3M1217.5 413v14M1033.5 338v1M1723.5 556v4M1707.5 548v2M1472.5 565v2M1624.5 550v9M1676.5 557v5M1268.5 506v5M1422.5 561v6M1145.5 434v2M1037.5 344v2M1749.5 550v1M1415.5 559v3M1635.5 561v4M1635.5 566v1M1459.5 565v1M1459.5 567v2M1753.5 551v3M1753.5 556v3M1276.5 480v3M1544.5 562v1M1544.5 564v2M1745.5 550v5M1226.5 478v4M1452.5 564v1M1227.5 482v4M1381.5 539v3M1220.5 443v7M1279.5 490v7M1654.5 554v4M1120.5 348v12M1019.5 308v3M1272.5 488v4M1399.5 530v1M1399.5 532v1M1425.5 581v2M1230.5 492v3M1051.5 375v3M1107.5 274v5M1619.5 567v4M1199.5 355v14M1136.5 420v2M1516.5 560v3M1025.5 324v3M1097.5 343v9M1214.5 371v14M1122.5 372v8M1718.5 552v3M1198.5 369v16M1357.5 545v2M1223.5 463v6M1349.5 541v3M1096.5 352v10M1429.5 570v2M1555.5 565v7M1424.5 574v6M1455.5 564v1M1581.5 560v1M1699.5 552v8M1208.5 313v2M1293.5 538v2M1534.5 563v2M1618.5 562v5M1441.5 558v2M1728.5 550v2M1728.5 555v1M1493.5 565v4M1611.5 560v1M1101.5 306v7M1561.5 557v4M1645.5 557v2M1106.5 279v6M1409.5 546v1M1326.5 548v2M1211.5 334v13M1410.5 547v2M1035.5 341v1M1725.5 555v5M1036.5 342v2M1623.5 546v4M1166.5 451v1M1311.5 546v1M1550.5 561v2M1710.5 551v2M1428.5 572v2M1751.5 551v2M1462.5 570v5M1125.5 390v5M1285.5 528v2M1046.5 362v3M1341.5 544v3M1017.5 303v3M1053.5 380v2M1743.5 554v1M1743.5 561v5M1492.5 569v2M1050.5 373v2M1216.5 399v14M1270.5 497v5M1281.5 507v10M1113.5 286v4M1222.5 457v6M1598.5 565v4M1724.5 560v3M1514.5 569v3M1549.5 564v4M1291.5 534v2M1457.5 567v1M1426.5 577v3M1620.5 558v9M1340.5 547v2M1128.5 404v5M1164.5 447v2M1027.5 329v2M1167.5 452v2M1716.5 549v1M1716.5 551v5M1719.5 557v4M1168.5 454v1M1468.5 565v2M1363.5 548v2M1045.5 360v2M1533.5 565v5M1491.5 567v2M1108.5 271v2M1320.5 541v2M1160.5 440v1M1597.5 561v4M1389.5 533v3M1673.5 553v2M1673.5 557v1M1593.5 563v2M1451.5 565v1M1494.5 563v2M1703.5 557v6M1460.5 569v6M1536.5 564v2M1565.5 563v2M1233.5 499v1M1616.5 562v1M1616.5 566v1M1133.5 416v2M1185.5 464v2M1169.5 455v2M1684.5 556v2M1403.5 543v1M1026.5 327v2M1147.5 437v1M1642.5 559v1M1642.5 562v2M1137.5 422v2M1752.5 546v2M1282.5 517v7M1365.5 551v2M1123.5 380v5M1275.5 477v2M1747.5 550v1M1747.5 553v1M1043.5 356v2M1547.5 564v2M1204.5 305v2M1204.5 309v2M1129.5 409v3M1562.5 562v5M1315.5 541v1M1184.5 466v1M1421.5 557v2M1717.5 557v8M1413.5 554v2M1625.5 559v1M1625.5 563v1M1039.5 348v2M1278.5 486v4M1579.5 560v3M1579.5 564v1M1219.5 437v6M1572.5 560v1M1232.5 497v2M1391.5 526v2M1610.5 563v3M1139.5 426v1M1405.5 545v1M1519.5 567v2M1671.5 557v2M1367.5 554v1M1575.5 561v1M1575.5 563v1M1442.5 560v2M1686.5 549v3M1652.5 556v1M1655.5 561v2M1332.5 551v1M1328.5 553v1M1325.5 546v2M1412.5 552v2M1269.5 502v4M1507.5 560v3M1669.5 553v2M1669.5 558v1M1038.5 346v2M1124.5 385v5M1104.5 290v5M1662.5 554v3M1277.5 483v3M1382.5 542v6M1449.5 568v1M1697.5 552v2M1697.5 557v2M1689.5 549v4M1052.5 378v2M1643.5 554v5M1343.5 540v2M1377.5 538v2M1209.5 315v7M1527.5 562v1M1734.5 545v4M1271.5 492v5M1646.5 554v2M1604.5 558v1M1334.5 553v1M1558.5 562v2M1558.5 566v1M1327.5 550v2M1093.5 382v3M1093.5 386v1M1392.5 529v3M1592.5 560v1M1102.5 301v5M1047.5 365v2M1656.5 558v1M1384.5 544v4M1376.5 540v2M1440.5 560v2M1110.5 276v4M1600.5 555v2M1687.5 558v2M1436.5 568v1M1314.5 542v1M1083.5 385v1M1591.5 563v2M1588.5 556v3M1675.5 562v2M1698.5 545v5M1292.5 536v2M1496.5 567v2M1439.5 562v2M1021.5 314v2M1690.5 559v3M1640.5 558v1M1622.5 540v4M1435.5 569v2M1356.5 547v1M1548.5 568v3M1499.5 568v1M1617.5 558v3M1461.5 576v3M1701.5 557v3M1450.5 566v2M1109.5 274v2M1529.5 568v1M1373.5 549v1M1373.5 551v1M1685.5 555v1M1112.5 283v3M1605.5 561v3M1678.5 552v1M1678.5 557v1M1161.5 441v2M1632.5 556v2M1283.5 524v2M1670.5 561v4M1502.5 568v3M1495.5 565v2M1487.5 561v4M1650.5 560v1M1524.5 569v1M1234.5 500v2M1400.5 533v5M1601.5 558v3M1517.5 565v4M1170.5 457v1M1171.5 458v2M1589.5 562v3M1267.5 511v1M1267.5 513v1M1350.5 544v3M1665.5 557v3M1695.5 557v1M1653.5 560v3M1444.5 565v2M1737.5 552v1M1737.5 559v5M1528.5 564v3M1162.5 443v2M1680.5 554v2M1680.5 557v1M1361.5 545v1M1414.5 556v3M1040.5 350v2M1080.5 387v1M1467.5 567v1M1126.5 395v4M1337.5 555v1M1140.5 427v2M1032.5 336v2M1172.5 460v1M1504.5 561v2M1542.5 564v2M1500.5 567v1M1443.5 562v3M1397.5 532v1M1390.5 529v4M1564.5 565v2M1682.5 557v1M1344.5 539v1M1355.5 548v1M1556.5 573v3M1700.5 560v1M1739.5 550v2M1138.5 424v2M1141.5 429v2M1430.5 568v1M1746.5 545v3M1034.5 339v2M1309.5 542v2M1354.5 549v2M1742.5 552v2M1177.5 463v1M1463.5 568v2M1740.5 553v1M1342.5 542v2M1573.5 561v1M1236.5 503v1M1692.5 552v2M1478.5 566v2M1330.5 551v1M1554.5 561v1M1554.5 564v1M1143.5 432v1M1714.5 549v1M1144.5 433v1M1079.5 388v1M1584.5 560v1M1702.5 551v4M1263.5 510v1M1535.5 560v2M1018.5 306v2M1530.5 566v1M1477.5 568v2M1679.5 558v5M1637.5 562v2M1225.5 473v5M1207.5 311v2M1541.5 566v2M1352.5 549v2M1580.5 556v3M1538.5 560v2M1538.5 564v1M1693.5 555v1M1359.5 543v1M1386.5 537v3M1503.5 564v3M1427.5 574v3M1284.5 526v2M1228.5 486v4M1023.5 319v3M1525.5 565v3M1475.5 564v1M1563.5 569v1M1347.5 536v1M1313.5 543v2M1419.5 561v2M1506.5 565v2M1206.5 309v2M1351.5 547v2M1339.5 549v3M1532.5 572v2M1130.5 412v2M1316.5 539v2M1521.5 562v2M1432.5 570v1M1479.5 564v2M1163.5 445v2M1369.5 550v2M1312.5 545v1M1044.5 358v2M1539.5 565v3M1486.5 559v1M1733.5 552v1M1490.5 565v1M1691.5 555v1M1649.5 558v1M1022.5 316v3M1319.5 539v2M1338.5 552v2M1395.5 534v1M1028.5 331v1M1114.5 290v3M1180.5 465v1M1029.5 332v2M1368.5 552v2M1596.5 559v2M1084.5 384v1M1630.5 557v1M1709.5 557v1M1485.5 561v1M1229.5 490v2M1383.5 548v3M1648.5 560v2M1132.5 415v1M1531.5 568v2M1394.5 536v1M1042.5 354v2M1713.5 557v2M1049.5 370v3M1484.5 563v1M1235.5 502v1M1576.5 566v1M1030.5 334v1M1522.5 566v2M1595.5 557v1M1031.5 335v1M1142.5 431v1M1310.5 544v2M1545.5 568v2M1445.5 567v1M1086.5 382v1M1476.5 566v2M1456.5 565v2M1483.5 561v1M1570.5 565v1M1324.5 545v1M1396.5 533v1M1471.5 563v1M1664.5 549v1M1664.5 554v1M1308.5 541v1M1501.5 562v2M1627.5 558v2M1526.5 564v1M1511.5 557v1M1165.5 449v2M1183.5 467v1M1402.5 541v2M1146.5 436v1M1416.5 562v1M1345.5 538v1M1629.5 562v1M1613.5 558v1M1186.5 463v1M1567.5 563v1M1370.5 549v1M1321.5 543v1M1602.5 561v2M1290.5 533v1M1131.5 414v1M1085.5 383v1M1404.5 544v1M1434.5 572v1M1418.5 564v1M1286.5 530v1M1520.5 566v1M1331.5 550v1M1358.5 544v1M1706.5 553v1M1353.5 551v1M1660.5 558v1M1360.5 544v1M1474.5 566v1M1364.5 550v1M1481.5 559v1M1318.5 537v1M1187.5 462v1" stroke="#ffa500" stroke-width="1" fill="none"/><path d="M1420 556.5h2M1573 556.5h2M1656 556.5h2M1662 556.5h2M1671 556.5h2M1674 556.5h2M1682 556.5h2M1685 556.5h6M1699 556.5h3M1703 556.5h2M1706 556.5h2M1709 556.5h2M1731 556.5h2M1577 553.5h2M1654 553.5h2M1673 553.5h2M1711 553.5h4M1720 553.5h2M1723 553.5h3M1727 553.5h2M1733 553.5h3M1744 553.5h7M1753 553.5h2M1515 559.5h2M1604 559.5h2M1628 559.5h2M1637 559.5h5M1649 559.5h2M1668 559.5h2M1671 559.5h2M1677 559.5h2M1680 559.5h2M1691 559.5h3M1699 559.5h2M1703 559.5h2M1708 559.5h3M1729 559.5h2M1364 555.5h2M1369 555.5h2M1420 555.5h2M1620 555.5h2M1652 555.5h2M1656 555.5h2M1662 555.5h2M1665 555.5h2M1671 555.5h5M1682 555.5h5M1709 555.5h2M1717 555.5h3M1726 555.5h3M1731 555.5h2M1734 555.5h2M1741 555.5h2M1748 555.5h2M1476 567.5h2M1481 567.5h2M1494 567.5h2M1534 567.5h2M1542 567.5h2M1545 567.5h2M1551 567.5h2M1569 567.5h2M1515 560.5h2M1519 560.5h2M1559 560.5h2M1574 560.5h2M1595 560.5h3M1604 560.5h2M1635 560.5h2M1647 560.5h2M1668 560.5h2M1671 560.5h2M1680 560.5h2M1691 560.5h3M1695 560.5h2M1703 560.5h2M1729 560.5h2M1381 534.5h2M1505 534.5h2M1328 541.5h2M1356 541.5h2M1461 566.5h2M1490 566.5h2M1532 566.5h2M1543 566.5h2M1567 566.5h2M1517 562.5h2M1522 562.5h3M1554 562.5h2M1593 562.5h2M1627 562.5h2M1635 562.5h2M1645 562.5h2M1691 562.5h2M1704 562.5h2M1729 562.5h2M1558 558.5h2M1561 558.5h2M1604 558.5h2M1637 558.5h2M1640 558.5h2M1649 558.5h2M1667 558.5h3M1671 558.5h2M1679 558.5h2M1689 558.5h2M1692 558.5h2M1699 558.5h2M1702 558.5h3M1708 558.5h3M1162 433.5h2M1727 549.5h2M1736 549.5h2M1750 549.5h2M1456 571.5h2M1328 540.5h2M1497 563.5h2M1500 563.5h3M1548 563.5h2M1584 563.5h4M1606 563.5h2M1624 563.5h2M1658 563.5h2M1729 563.5h2M1501 565.5h2M1602 565.5h2M1606 565.5h2M1245 374.5h2M1063 377.5h2M1573 557.5h2M1610 557.5h2M1640 557.5h2M1667 557.5h3M1671 557.5h2M1674 557.5h3M1679 557.5h2M1689 557.5h2M1692 557.5h3M1699 557.5h2M1702 557.5h3M1706 557.5h2M1709 557.5h2M1537 537.5h2M1613 537.5h2M1391 530.5h2M1293 435.5h2M1673 552.5h2M1711 552.5h3M1720 552.5h4M1727 552.5h2M1733 552.5h2M1738 552.5h3M1742 552.5h7M1753 552.5h2M1451 564.5h2M1459 564.5h2M1467 564.5h4M1501 564.5h2M1555 564.5h2M1582 564.5h2M1606 564.5h2M1624 564.5h2M1642 564.5h3M1658 564.5h2M1752 546.5h2M1317 504.5h2M1537 538.5h2M1613 538.5h2M1086 383.5h2M1429 568.5h2M1569 568.5h2M1373 550.5h3M1722 550.5h2M1727 550.5h2M1733 550.5h2M1736 550.5h2M1745 550.5h2M1192 392.5h2M1366 554.5h3M1654 554.5h2M1664 554.5h2M1673 554.5h2M1684 554.5h3M1712 554.5h3M1726 554.5h3M1733 554.5h3M1744 554.5h2M1747 554.5h3M1753 554.5h2M1349 544.5h5M1057 372.5h2M1092 386.5h2M1218 386.5h2M1262 386.5h2M1192 390.5h2M1227 360.5h2M1286 447.5h3M1487 561.5h2M1517 561.5h2M1554 561.5h2M1579 561.5h2M1593 561.5h2M1604 561.5h2M1625 561.5h2M1635 561.5h2M1647 561.5h2M1691 561.5h2M1704 561.5h2M1729 561.5h2M1090 385.5h2M1505 532.5h2M1505 533.5h2M1254 405.5h2M1204 291.5h2M1347 545.5h2M1254 406.5h2M1067 380.5h2M1383 536.5h4M1396 536.5h2M1537 536.5h2M1613 536.5h2M1715 551.5h2M1721 551.5h3M1727 551.5h2M1733 551.5h2M1736 551.5h2M1739 551.5h2M1745 551.5h2M1753 551.5h2M1307 474.5h2M1278 413.5h2M1301 483.5h2M1388 539.5h2M1394 539.5h2M1088 384.5h2M1271 432.5h2M1192 391.5h2M1505 531.5h2M1129 389.5h2M1192 389.5h2M1166 436.5h4M1293 436.5h2M1432 573.5h3M1398 535.5h2M1537 535.5h2M1328 542.5h2M1358 542.5h2M1307 473.5h2M1141 365.5h2M1204 293.5h2M1293 434.5h2M1245 375.5h2M1204 292.5h2M1301 484.5h2M1315 503.5h2M1108 263.5h2M1425 575.5h2M1170 437.5h3M1448 572.5h2M1456 572.5h2M1320 498.5h2M1425 576.5h2M1151.5 396v5M1511.5 559v1M1503.5 552v11M1637.5 555v3M1235.5 394v5M1238.5 398v6M1199.5 327v10M1606.5 566v3M1512.5 560v1M1390.5 531v6M1116.5 288v11M1203.5 294v8M1564.5 565v6M1556.5 565v2M1548.5 561v2M1674.5 558v3M1271.5 433v3M1713.5 548v4M1431.5 569v3M1423.5 563v6M1181.5 395v5M1394.5 540v2M1213.5 348v12M1265.5 393v6M1198.5 337v10M1144.5 369v3M1210.5 314v12M1053.5 368v1M1094.5 369v12M1670.5 561v7M1743.5 548v4M1326.5 521v10M1173.5 431v4M1279.5 412v1M1279.5 414v2M1231.5 372v6M1189.5 377v4M1442.5 554v4M1576.5 554v6M1379.5 537v2M1507.5 535v13M1538.5 529v6M1443.5 558v5M1100.5 300v12M1304.5 479v2M1124.5 367v5M1530.5 562v2M1571.5 562v5M1731.5 552v3M1731.5 557v2M1020.5 311v2M1563.5 559v6M1105.5 273v5M1438.5 564v2M1504.5 541v11M1537.5 539v6M1408.5 540v2M1319.5 500v3M1212.5 337v11M1177.5 414v5M1412.5 548v2M1176.5 419v4M1362.5 547v4M1401.5 538v1M1560.5 561v2M1099.5 312v11M1601.5 563v2M1119.5 322v11M1024.5 321v3M1476.5 568v1M1153.5 407v6M1228.5 358v2M1681.5 561v4M1098.5 323v12M1325.5 514v7M1034.5 343v2M1041.5 352v1M1589.5 562v5M1202.5 302v8M1261.5 390v3M1704.5 552v4M1590.5 567v4M1582.5 561v3M1140.5 367v2M1180.5 400v4M1045.5 357v2M1574.5 554v2M1574.5 558v2M1621.5 553v2M1121.5 344v11M1267.5 405v6M1172.5 435v2M1378.5 539v3M1197.5 347v11M1377.5 542v3M1201.5 310v9M1252.5 397v4M1118.5 310v12M1692.5 555v2M1692.5 563v1M1529.5 564v2M1282.5 428v6M1233.5 383v5M1311.5 488v4M1437.5 566v2M1685.5 552v2M1685.5 557v1M1115.5 281v7M1322.5 499v5M1150.5 390v6M1196.5 358v10M1296.5 446v9M1513.5 561v2M1612.5 539v13M1270.5 425v7M1127.5 380v5M1555.5 563v1M1715.5 549v2M1715.5 552v1M1085.5 384v2M1264.5 387v6M1120.5 333v11M1393.5 535v4M1540.5 553v8M1335.5 531v2M1227.5 361v1M1117.5 299v11M1753.5 547v4M1753.5 555v4M1336.5 533v2M1249.5 384v4M1209.5 307v7M1195.5 368v11M1260.5 393v4M1346.5 546v1M1620.5 556v3M1299.5 470v6M1661.5 557v4M1111.5 269v3M1230.5 367v5M1214.5 360v8M1139.5 369v2M1179.5 404v5M1453.5 565v2M1157.5 422v3M1657.5 557v4M1074.5 388v1M1019.5 308v3M1123.5 363v4M1376.5 545v4M1200.5 319v8M1608.5 557v5M1421.5 553v2M1025.5 324v2M1539.5 539v14M1600.5 561v2M1570.5 569v2M1646.5 563v2M1324.5 509v5M1284.5 438v4M1752.5 545v1M1236.5 399v5M1428.5 569v2M1152.5 401v6M1417.5 559v3M1396.5 537v1M1711.5 548v4M1506.5 525v6M1218.5 387v2M1043.5 355v1M1175.5 423v4M1664.5 551v3M1630.5 560v2M1033.5 341v2M1536.5 545v14M1622.5 556v4M1458.5 565v6M1615.5 544v10M1194.5 379v10M1581.5 559v2M1225.5 365v3M1277.5 414v1M1699.5 551v5M1542.5 568v1M1107.5 264v5M1440.5 554v6M1266.5 399v6M1258.5 399v2M1618.5 563v2M1535.5 559v8M1535.5 568v1M1508.5 548v6M1327.5 531v9M1240.5 386v6M1444.5 563v4M1485.5 564v1M1097.5 335v11M1178.5 409v5M1149.5 384v6M1295.5 437v9M1406.5 536v2M1561.5 557v1M1561.5 559v1M1312.5 492v3M1254.5 407v1M1269.5 418v7M1133.5 381v2M1473.5 567v1M1096.5 346v12M1474.5 568v1M1126.5 376v4M1263.5 384v2M1102.5 287v5M1592.5 558v3M1297.5 455v8M1174.5 427v4M1208.5 303v4M1334.5 529v2M1298.5 463v7M1229.5 361v6M1075.5 389v2M1095.5 358v11M1101.5 292v8M1737.5 546v3M1580.5 562v1M1572.5 558v4M1706.5 558v3M1076.5 391v1M1122.5 355v8M1186.5 379v2M1106.5 269v4M1268.5 411v7M1690.5 554v2M1211.5 326v11M1725.5 549v4M1568.5 565v1M1323.5 504v5M1301.5 485v2M1221.5 377v3M1132.5 383v3M1645.5 560v2M1031.5 337v2M1591.5 561v6M1541.5 561v6M1499.5 564v1M1424.5 569v6M1333.5 531v2M1667.5 556v1M1049.5 363v1M1250.5 388v5M1609.5 554v3M1280.5 416v6M1652.5 554v1M1446.5 569v2M1598.5 555v3M1567.5 567v2M1220.5 380v3M1682.5 554v1M1682.5 557v2M1027.5 329v2M1475.5 569v1M1677.5 560v1M1669.5 554v3M1286.5 446v1M1286.5 448v1M1246.5 373v1M1614.5 539v5M1628.5 560v2M1077.5 392v2M1242.5 380v2M1078.5 394v1M1575.5 561v6M1651.5 556v2M1104.5 278v5M1510.5 557v2M1479.5 570v1M1289.5 446v1M1464.5 563v2M1226.5 362v3M1048.5 361v2M1710.5 554v1M1710.5 560v1M1051.5 365v2M1451.5 563v1M1451.5 565v1M1502.5 566v3M1146.5 374v3M1653.5 556v1M1310.5 482v6M1241.5 382v4M1410.5 545v2M1093.5 381v5M1414.5 551v2M1026.5 326v3M1517.5 563v2M1285.5 442v4M1714.5 555v3M1463.5 565v1M1547.5 564v3M1305.5 477v2M1660.5 561v2M1187.5 377v2M1320.5 499v1M1193.5 393v2M1687.5 557v2M1313.5 495v4M1549.5 564v1M1387.5 537v2M1364.5 554v1M1626.5 558v3M1496.5 564v2M1611.5 552v5M1454.5 567v2M1113.5 275v3M1158.5 425v3M1330.5 538v2M1439.5 560v4M1021.5 313v3M1239.5 392v6M1283.5 434v4M1204.5 289v2M1708.5 560v1M1625.5 562v1M1583.5 565v2M1344.5 548v1M1300.5 476v7M1253.5 401v4M1404.5 534v1M1234.5 388v6M1405.5 535v1M1216.5 374v6M1597.5 558v2M1597.5 561v1M1514.5 563v2M1472.5 566v1M1632.5 555v2M1712.5 555v2M1082.5 388v2M1108.5 261v2M1112.5 272v3M1658.5 561v2M1658.5 565v2M1328.5 543v2M1483.5 566v1M1135.5 377v2M1734.5 545v5M1734.5 556v2M1613.5 531v5M1314.5 499v3M1638.5 560v1M1631.5 557v3M1497.5 562v1M1616.5 554v6M1259.5 397v2M1627.5 563v2M1619.5 559v4M1745.5 555v4M1407.5 538v2M1134.5 379v2M1422.5 557v6M1642.5 560v4M1065.5 378v1M1403.5 535v1M1729.5 556v3M1273.5 424v4M1292.5 437v4M1436.5 568v2M1554.5 559v2M1217.5 380v6M1183.5 386v4M1262.5 387v3M1035.5 345v1M1036.5 346v1M1550.5 565v2M1061.5 375v1M1701.5 555v1M1728.5 544v5M1145.5 372v2M1232.5 378v5M1505.5 535v6M1190.5 381v4M1697.5 562v1M1125.5 372v4M1391.5 527v3M1557.5 559v5M1465.5 562v1M1416.5 556v3M1182.5 390v5M1435.5 570v2M1594.5 563v1M1629.5 557v2M1662.5 554v1M1427.5 571v2M1056.5 371v1M1165.5 435v1M1450.5 566v5M1559.5 559v1M1605.5 557v1M1605.5 562v1M1219.5 383v3M1128.5 385v4M1037.5 347v2M1426.5 573v2M1544.5 565v1M1223.5 370v3M1160.5 430v2M1256.5 403v2M1275.5 416v3M1023.5 318v3M1205.5 294v1M1103.5 283v4M1206.5 295v4M1415.5 553v3M1131.5 386v2M1730.5 564v2M1389.5 537v2M1389.5 540v1M1381.5 533v1M1707.5 554v2M1623.5 560v3M1749.5 556v2M1332.5 533v2M1281.5 422v6M1222.5 373v4M1274.5 419v5M1191.5 385v4M1566.5 569v2M1361.5 545v2M1039.5 350v1M1634.5 559v1M1130.5 388v1M1248.5 380v4M1040.5 351v1M1459.5 562v2M1110.5 266v3M1050.5 364v1M1155.5 417v3M1380.5 535v2M1441.5 551v3M1338.5 538v2M1740.5 553v2M1489.5 562v3M1455.5 569v2M1159.5 428v2M1531.5 564v2M1649.5 557v1M1402.5 536v2M1516.5 557v2M1527.5 567v1M1477.5 566v1M1603.5 562v3M1644.5 563v1M1644.5 565v1M1721.5 554v2M1083.5 387v1M1129.5 390v2M1148.5 380v4M1705.5 563v3M1409.5 542v3M1375.5 549v1M1724.5 554v3M1420.5 557v1M1207.5 299v4M1633.5 557v2M1363.5 551v3M1751.5 547v2M1247.5 376v4M1587.5 562v1M1587.5 564v1M1052.5 367v1M1579.5 557v4M1042.5 353v2M1154.5 413v4M1308.5 472v1M1308.5 475v1M1337.5 535v3M1457.5 573v1M1488.5 560v1M1525.5 563v2M1419.5 558v4M1578.5 552v1M1578.5 554v3M1750.5 550v3M1143.5 366v3M1059.5 373v1M1070.5 382v1M1060.5 374v1M1147.5 377v3M1303.5 481v2M1215.5 368v6M1392.5 531v4M1726.5 556v3M1673.5 550v2M1044.5 356v1M1054.5 369v1M1055.5 370v1M1066.5 379v1M1425.5 577v2M1695.5 558v2M1680.5 556v1M1748.5 547v5M1244.5 376v2M1142.5 364v1M1072.5 385v1M1309.5 476v6M1073.5 386v2M1062.5 376v1M1018.5 305v3M1138.5 371v2M1114.5 278v3M1641.5 554v3M1607.5 562v1M1291.5 441v3M1599.5 558v3M1272.5 428v4M1553.5 563v4M1028.5 331v2M1243.5 378v2M1588.5 560v2M1617.5 560v3M1492.5 565v1M1694.5 555v2M1480.5 568v2M1290.5 444v2M1430.5 567v1M1636.5 563v2M1038.5 349v1M1109.5 264v2M1340.5 542v2M1495.5 566v1M1487.5 562v1M1294.5 432v2M1017.5 303v2M1449.5 571v1M1449.5 573v1M1185.5 381v3M1030.5 335v2M1237.5 404v3M1382.5 535v1M1742.5 553v2M1188.5 375v2M1321.5 496v2M1528.5 566v1M1445.5 567v2M1688.5 554v2M1411.5 547v1M1400.5 536v2M1418.5 562v2M1460.5 565v1M1339.5 540v2M1331.5 535v3M1741.5 556v2M1490.5 565v1M1558.5 556v2M1022.5 316v2M1478.5 568v2M1509.5 554v3M1565.5 571v2M1584.5 562v1M1080.5 391v1M1736.5 552v1M1251.5 393v4M1698.5 560v2M1515.5 561v2M1717.5 552v3M1360.5 543v2M1461.5 567v1M1663.5 557v2M1079.5 392v2M1161.5 432v1M1136.5 375v2M1610.5 558v2M1526.5 565v2M1071.5 383v2M1521.5 561v1M1318.5 503v1M1719.5 554v1M1719.5 556v1M1355.5 542v1M1696.5 561v1M1184.5 384v2M1432.5 572v1M1069.5 381v1M1156.5 420v2M1372.5 551v2M1032.5 339v2M1029.5 333v2M1084.5 386v1M1046.5 359v1M1047.5 360v1M1306.5 475v2M1137.5 373v2M1315.5 502v1M1648.5 562v1M1466.5 563v1M1371.5 553v2M1545.5 568v1M1224.5 368v2M1341.5 544v2M1257.5 401v2M1276.5 415v1M1484.5 565v1M1595.5 559v1M1164.5 434v1M1676.5 558v1M1354.5 543v1M1434.5 572v1M1501.5 562v1M1081.5 390v1M1342.5 546v1M1343.5 547v1M1471.5 565v1M1141.5 366v1M1345.5 547v1M1493.5 566v1M1486.5 563v1M1447.5 571v1M1413.5 550v1M1395.5 538v1" stroke="#ff00ff" stroke-width="1" fill="none"/></g>
<rect x="1016.5" y="145.5" width="739.0" height="438.0" fill="none" stroke="#000"/><line x1="1053.5" y1="583.5" x2="1053.5" y2="574.5" stroke="#000" stroke-width="1" /><line x1="1053.5" y1="145.5" x2="1053.5" y2="154.5" stroke="#000" stroke-width="1" /><line x1="1086.5" y1="583.5" x2="1086.5" y2="574.5" stroke="#000" stroke-width="1" /><line x1="1086.5" y1="145.5" x2="1086.5" y2="154.5" stroke="#000" stroke-width="1" /><line x1="1308.5" y1="583.5" x2="1308.5" y2="574.5" stroke="#000" stroke-width="1" /><line x1="1308.5" y1="145.5" x2="1308.5" y2="154.5" stroke="#000" stroke-width="1" /><line x1="1421.5" y1="583.5" x2="1421.5" y2="574.5" stroke="#000" stroke-width="1" /><line x1="1421.5" y1="145.5" x2="1421.5" y2="154.5" stroke="#000" stroke-width="1" /><line x1="1501.5" y1="583.5" x2="1501.5" y2="574.5" stroke="#000" stroke-width="1" /><line x1="1501.5" y1="145.5" x2="1501.5" y2="154.5" stroke="#000" stroke-width="1" /><line x1="1563.5" y1="583.5" x2="1563.5" y2="574.5" stroke="#000" stroke-width="1" /><line x1="1563.5" y1="145.5" x2="1563.5" y2="154.5" stroke="#000" stroke-width="1" /><line x1="1613.5" y1="583.5" x2="1613.5" y2="574.5" stroke="#000" stroke-width="1" /><line x1="1613.5" y1="145.5" x2="1613.5" y2="154.5" stroke="#000" stroke-width="1" /><line x1="1656.5" y1="583.5" x2="1656.5" y2="574.5" stroke="#000" stroke-width="1" /><line x1="1656.5" y1="145.5" x2="1656.5" y2="154.5" stroke="#000" stroke-width="1" /><line x1="1693.5" y1="583.5" x2="1693.5" y2="574.5" stroke="#000" stroke-width="1" /><line x1="1693.5" y1="145.5" x2="1693.5" y2="154.5" stroke="#000" stroke-width="1" /><line x1="1726.5" y1="583.5" x2="1726.5" y2="574.5" stroke="#000" stroke-width="1" /><line x1="1726.5" y1="145.5" x2="1726.5" y2="154.5" stroke="#000" stroke-width="1" /><line x1="1115.5" y1="583.5" x2="1115.5" y2="567.5" stroke="#000" stroke-width="1" /><line x1="1115.5" y1="145.5" x2="1115.5" y2="161.5" stroke="#000" stroke-width="1" /><line x1="1016.5" y1="581.5" x2="1025.5" y2="581.5" stroke="#000" stroke-width="1" /><line x1="1755.5" y1="581.5" x2="1745.5" y2="581.5" stroke="#000" stroke-width="1" /><line x1="1016.5" y1="568.5" x2="1025.5" y2="568.5" stroke="#000" stroke-width="1" /><line x1="1755.5" y1="568.5" x2="1745.5" y2="568.5" stroke="#000" stroke-width="1" /><line x1="1016.5" y1="558.5" x2="1025.5" y2="558.5" stroke="#000" stroke-width="1" /><line x1="1755.5" y1="558.5" x2="1745.5" y2="558.5" stroke="#000" stroke-width="1" /><line x1="1016.5" y1="550.5" x2="1025.5" y2="550.5" stroke="#000" stroke-width="1" /><line x1="1755.5" y1="550.5" x2="1745.5" y2="550.5" stroke="#000" stroke-width="1" /><line x1="1016.5" y1="542.5" x2="1025.5" y2="542.5" stroke="#000" stroke-width="1" /><line x1="1755.5" y1="542.5" x2="1745.5" y2="542.5" stroke="#000" stroke-width="1" /><line x1="1016.5" y1="536.5" x2="1025.5" y2="536.5" stroke="#000" stroke-width="1" /><line x1="1755.5" y1="536.5" x2="1745.5" y2="536.5" stroke="#000" stroke-width="1" /><line x1="1016.5" y1="531.5" x2="1025.5" y2="531.5" stroke="#000" stroke-width="1" /><line x1="1755.5" y1="531.5" x2="1745.5" y2="531.5" stroke="#000" stroke-width="1" /><line x1="1016.5" y1="526.5" x2="1034.5" y2="526.5" stroke="#000" stroke-width="1" /><line x1="1755.5" y1="526.5" x2="1736.5" y2="526.5" stroke="#000" stroke-width="1" /><line x1="1016.5" y1="494.5" x2="1025.5" y2="494.5" stroke="#000" stroke-width="1" /><line x1="1755.5" y1="494.5" x2="1745.5" y2="494.5" stroke="#000" stroke-width="1" /><line x1="1016.5" y1="475.5" x2="1025.5" y2="475.5" stroke="#000" stroke-width="1" /><line x1="1755.5" y1="475.5" x2="1745.5" y2="475.5" stroke="#000" stroke-width="1" /><line x1="1016.5" y1="462.5" x2="1025.5" y2="462.5" stroke="#000" stroke-width="1" /><line x1="1755.5" y1="462.5" x2="1745.5" y2="462.5" stroke="#000" stroke-width="1" /><line x1="1016.5" y1="452.5" x2="1025.5" y2="452.5" stroke="#000" stroke-width="1" /><line x1="1755.5" y1="452.5" x2="1745.5" y2="452.5" stroke="#000" stroke-width="1" /><line x1="1016.5" y1="444.5" x2="1025.5" y2="444.5" stroke="#000" stroke-width="1" /><line x1="1755.5" y1="444.5" x2="1745.5" y2="444.5" stroke="#000" stroke-width="1" /><line x1="1016.5" y1="436.5" x2="1025.5" y2="436.5" stroke="#000" stroke-width="1" /><line x1="1755.5" y1="436.5" x2="1745.5" y2="436.5" stroke="#000" stroke-width="1" /><line x1="1016.5" y1="430.5" x2="1025.5" y2="430.5" stroke="#000" stroke-width="1" /><line x1="1755.5" y1="430.5" x2="1745.5" y2="430.5" stroke="#000" stroke-width="1" /><line x1="1016.5" y1="425.5" x2="1025.5" y2="425.5" stroke="#000" stroke-width="1" /><line x1="1755.5" y1="425.5" x2="1745.5" y2="425.5" stroke="#000" stroke-width="1" /><line x1="1016.5" y1="420.5" x2="1034.5" y2="420.5" stroke="#000" stroke-width="1" /><line x1="1755.5" y1="420.5" x2="1736.5" y2="420.5" stroke="#000" stroke-width="1" /><line x1="1016.5" y1="388.5" x2="1025.5" y2="388.5" stroke="#000" stroke-width="1" /><line x1="1755.5" y1="388.5" x2="1745.5" y2="388.5" stroke="#000" stroke-width="1" /><line x1="1016.5" y1="370.5" x2="1025.5" y2="370.5" stroke="#000" stroke-width="1" /><line x1="1755.5" y1="370.5" x2="1745.5" y2="370.5" stroke="#000" stroke-width="1" /><line x1="1016.5" y1="357.5" x2="1025.5" y2="357.5" stroke="#000" stroke-width="1" /><line x1="1755.5" y1="357.5" x2="1745.5" y2="357.5" stroke="#000" stroke-width="1" /><line x1="1016.5" y1="347.5" x2="1025.5" y2="347.5" stroke="#000" stroke-width="1" /><line x1="1755.5" y1="347.5" x2="1745.5" y2="347.5" stroke="#000" stroke-width="1" /><line x1="1016.5" y1="338.5" x2="1025.5" y2="338.5" stroke="#000" stroke-width="1" /><line x1="1755.5" y1="338.5" x2="1745.5" y2="338.5" stroke="#000" stroke-width="1" /><line x1="1016.5" y1="331.5" x2="1025.5" y2="331.5" stroke="#000" stroke-width="1" /><line x1="1755.5" y1="331.5" x2="1745.5" y2="331.5" stroke="#000" stroke-width="1" /><line x1="1016.5" y1="325.5" x2="1025.5" y2="325.5" stroke="#000" stroke-width="1" /><line x1="1755.5" y1="325.5" x2="1745.5" y2="325.5" stroke="#000" stroke-width="1" /><line x1="1016.5" y1="320.5" x2="1025.5" y2="320.5" stroke="#000" stroke-width="1" /><line x1="1755.5" y1="320.5" x2="1745.5" y2="320.5" stroke="#000" stroke-width="1" /><line x1="1016.5" y1="315.5" x2="1034.5" y2="315.5" stroke="#000" stroke-width="1" /><line x1="1755.5" y1="315.5" x2="1736.5" y2="315.5" stroke="#000" stroke-width="1" /><line x1="1016.5" y1="283.5" x2="1025.5" y2="283.5" stroke="#000" stroke-width="1" /><line x1="1755.5" y1="283.5" x2="1745.5" y2="283.5" stroke="#000" stroke-width="1" /><line x1="1016.5" y1="265.5" x2="1025.5" y2="265.5" stroke="#000" stroke-width="1" /><line x1="1755.5" y1="265.5" x2="1745.5" y2="265.5" stroke="#000" stroke-width="1" /><line x1="1016.5" y1="252.5" x2="1025.5" y2="252.5" stroke="#000" stroke-width="1" /><line x1="1755.5" y1="252.5" x2="1745.5" y2="252.5" stroke="#000" stroke-width="1" /><line x1="1016.5" y1="242.5" x2="1025.5" y2="242.5" stroke="#000" stroke-width="1" /><line x1="1755.5" y1="242.5" x2="1745.5" y2="242.5" stroke="#000" stroke-width="1" /><line x1="1016.5" y1="233.5" x2="1025.5" y2="233.5" stroke="#000" stroke-width="1" /><line x1="1755.5" y1="233.5" x2="1745.5" y2="233.5" stroke="#000" stroke-width="1" /><line x1="1016.5" y1="226.5" x2="1025.5" y2="226.5" stroke="#000" stroke-width="1" /><line x1="1755.5" y1="226.5" x2="1745.5" y2="226.5" stroke="#000" stroke-width="1" /><line x1="1016.5" y1="220.5" x2="1025.5" y2="220.5" stroke="#000" stroke-width="1" /><line x1="1755.5" y1="220.5" x2="1745.5" y2="220.5" stroke="#000" stroke-width="1" /><line x1="1016.5" y1="215.5" x2="1025.5" y2="215.5" stroke="#000" stroke-width="1" /><line x1="1755.5" y1="215.5" x2="1745.5" y2="215.5" stroke="#000" stroke-width="1" /><line x1="1016.5" y1="210.5" x2="1034.5" y2="210.5" stroke="#000" stroke-width="1" /><line x1="1755.5" y1="210.5" x2="1736.5" y2="210.5" stroke="#000" stroke-width="1" /><line x1="1016.5" y1="178.5" x2="1025.5" y2="178.5" stroke="#000" stroke-width="1" /><line x1="1755.5" y1="178.5" x2="1745.5" y2="178.5" stroke="#000" stroke-width="1" /><line x1="1016.5" y1="160.5" x2="1025.5" y2="160.5" stroke="#000" stroke-width="1" /><line x1="1755.5" y1="160.5" x2="1745.5" y2="160.5" stroke="#000" stroke-width="1" /><line x1="1016.5" y1="147.5" x2="1025.5" y2="147.5" stroke="#000" stroke-width="1" /><line x1="1755.5" y1="147.5" x2="1745.5" y2="147.5" stroke="#000" stroke-width="1" />
<text x="968" y="220.9" font-size="24" font-weight="bold" fill="#000" textLength="24.4" lengthAdjust="spacingAndGlyphs">10</text><rect x="992.3" y="204.20000000000002" width="7.3" height="1.4" fill="#000" shape-rendering="auto"/><text x="1000.8" y="209.20000000000002" font-size="15.5" font-weight="bold" fill="#000" textLength="8" lengthAdjust="spacingAndGlyphs">3</text>
<text x="968" y="325.9" font-size="24" font-weight="bold" fill="#000" textLength="24.4" lengthAdjust="spacingAndGlyphs">10</text><rect x="992.3" y="309.2" width="7.3" height="1.4" fill="#000" shape-rendering="auto"/><text x="1000.8" y="314.2" font-size="15.5" font-weight="bold" fill="#000" textLength="8" lengthAdjust="spacingAndGlyphs">4</text>
<text x="968" y="430.9" font-size="24" font-weight="bold" fill="#000" textLength="24.4" lengthAdjust="spacingAndGlyphs">10</text><rect x="992.3" y="414.2" width="7.3" height="1.4" fill="#000" shape-rendering="auto"/><text x="1000.8" y="419.2" font-size="15.5" font-weight="bold" fill="#000" textLength="8" lengthAdjust="spacingAndGlyphs">5</text>
<text x="968" y="536.9" font-size="24" font-weight="bold" fill="#000" textLength="24.4" lengthAdjust="spacingAndGlyphs">10</text><rect x="992.3" y="520.1999999999999" width="7.3" height="1.4" fill="#000" shape-rendering="auto"/><text x="1000.8" y="525.1999999999999" font-size="15.5" font-weight="bold" fill="#000" textLength="8" lengthAdjust="spacingAndGlyphs">6</text>
<text x="1102.8" y="613.5" font-size="24" font-weight="bold" fill="#000" textLength="24.4" lengthAdjust="spacingAndGlyphs">10</text>
<text x="1739" y="613.5" font-size="24" font-weight="bold" fill="#000" textLength="24.4" lengthAdjust="spacingAndGlyphs">10</text><text x="1762.6" y="603.0" font-size="15.5" font-weight="bold" fill="#000" textLength="8" lengthAdjust="spacingAndGlyphs">2</text>
<text x="1300" y="646.5" font-size="23.7" font-weight="bold" fill="#000" textLength="171" lengthAdjust="spacingAndGlyphs">Frequency (Hz)</text>
<text x="948" y="686.5" font-size="22.7" font-weight="bold" fill="#ff00ff" textLength="259.5" lengthAdjust="spacingAndGlyphs">*T0=08/09/2025 16:03:01</text>
<text x="1324" y="686.5" font-size="22.7" font-weight="bold" fill="#000" textLength="81" lengthAdjust="spacingAndGlyphs">Avg=30</text>
<text x="1673" y="686.5" font-size="22.7" font-weight="bold" fill="#000" textLength="107.5" lengthAdjust="spacingAndGlyphs">BW=0.375</text>
<text transform="translate(964.4,429) rotate(-90)" font-size="27.8" font-weight="bold" textLength="128.5" lengthAdjust="spacingAndGlyphs">Magnitude</text>
<rect x="1447" y="163" width="295" height="81" fill="#000" /><rect x="1441" y="157" width="298" height="84" fill="#000" /><rect x="1442" y="158" width="296" height="82" fill="#fff" /><line x1="1453" y1="171.5" x2="1504" y2="171.5" stroke="#ff00ff" stroke-width="1" /><text x="1515" y="175" font-size="11" font-weight="bold" fill="#000" textLength="202" lengthAdjust="spacingAndGlyphs">H1:OMC-DCPD_SUM_OUT_DQ(REF44)</text><line x1="1453" y1="199.5" x2="1504" y2="199.5" stroke="#ffa500" stroke-width="1" /><text x="1515" y="202.8" font-size="11" font-weight="bold" fill="#000" textLength="202" lengthAdjust="spacingAndGlyphs">H1:OMC-DCPD_SUM_OUT_DQ(REF45)</text><line x1="1453" y1="226.5" x2="1504" y2="226.5" stroke="#00ff00" stroke-width="1" /><text x="1515" y="230" font-size="11" font-weight="bold" fill="#000" textLength="202" lengthAdjust="spacingAndGlyphs">H1:OMC-DCPD_SUM_OUT_DQ(REF46)</text>
<rect x="936" y="91" width="177" height="32" fill="#000" /><rect x="938" y="88" width="175" height="33" fill="#000" /><rect x="939" y="89" width="173" height="31" fill="#f2f2f2" /><text x="947.5" y="109.8" font-size="21" font-weight="bold" fill="#000" textLength="154.5" lengthAdjust="spacingAndGlyphs" shape-rendering="auto">Power spectrum</text>
</g>
<g id="plot3">
<line x1="155.5" y1="762.5" x2="155.5" y2="1200.5" stroke="#000" stroke-width="1" stroke-dasharray="1 2"/><line x1="189.5" y1="762.5" x2="189.5" y2="1200.5" stroke="#000" stroke-width="1" stroke-dasharray="1 2"/><line x1="216.5" y1="762.5" x2="216.5" y2="1200.5" stroke="#000" stroke-width="1" stroke-dasharray="1 2"/><line x1="237.5" y1="762.5" x2="237.5" y2="1200.5" stroke="#000" stroke-width="1" stroke-dasharray="1 2"/><line x1="256.5" y1="762.5" x2="256.5" y2="1200.5" stroke="#000" stroke-width="1" stroke-dasharray="1 2"/><line x1="272.5" y1="762.5" x2="272.5" y2="1200.5" stroke="#000" stroke-width="1" stroke-dasharray="1 2"/><line x1="286.5" y1="762.5" x2="286.5" y2="1200.5" stroke="#000" stroke-width="1" stroke-dasharray="1 2"/><line x1="381.5" y1="762.5" x2="381.5" y2="1200.5" stroke="#000" stroke-width="1" stroke-dasharray="1 2"/><line x1="429.5" y1="762.5" x2="429.5" y2="1200.5" stroke="#000" stroke-width="1" stroke-dasharray="1 2"/><line x1="464.5" y1="762.5" x2="464.5" y2="1200.5" stroke="#000" stroke-width="1" stroke-dasharray="1 2"/><line x1="490.5" y1="762.5" x2="490.5" y2="1200.5" stroke="#000" stroke-width="1" stroke-dasharray="1 2"/><line x1="512.5" y1="762.5" x2="512.5" y2="1200.5" stroke="#000" stroke-width="1" stroke-dasharray="1 2"/><line x1="530.5" y1="762.5" x2="530.5" y2="1200.5" stroke="#000" stroke-width="1" stroke-dasharray="1 2"/><line x1="546.5" y1="762.5" x2="546.5" y2="1200.5" stroke="#000" stroke-width="1" stroke-dasharray="1 2"/><line x1="560.5" y1="762.5" x2="560.5" y2="1200.5" stroke="#000" stroke-width="1" stroke-dasharray="1 2"/><line x1="656.5" y1="762.5" x2="656.5" y2="1200.5" stroke="#000" stroke-width="1" stroke-dasharray="1 2"/><line x1="704.5" y1="762.5" x2="704.5" y2="1200.5" stroke="#000" stroke-width="1" stroke-dasharray="1 2"/><line x1="738.5" y1="762.5" x2="738.5" y2="1200.5" stroke="#000" stroke-width="1" stroke-dasharray="1 2"/><line x1="765.5" y1="762.5" x2="765.5" y2="1200.5" stroke="#000" stroke-width="1" stroke-dasharray="1 2"/><line x1="787.5" y1="762.5" x2="787.5" y2="1200.5" stroke="#000" stroke-width="1" stroke-dasharray="1 2"/><line x1="805.5" y1="762.5" x2="805.5" y2="1200.5" stroke="#000" stroke-width="1" stroke-dasharray="1 2"/><line x1="821.5" y1="762.5" x2="821.5" y2="1200.5" stroke="#000" stroke-width="1" stroke-dasharray="1 2"/><line x1="835.5" y1="762.5" x2="835.5" y2="1200.5" stroke="#000" stroke-width="1" stroke-dasharray="1 2"/><line x1="298.5" y1="762.5" x2="298.5" y2="1200.5" stroke="#000" stroke-width="1" stroke-dasharray="1 2"/><line x1="573.5" y1="762.5" x2="573.5" y2="1200.5" stroke="#000" stroke-width="1" stroke-dasharray="1 2"/><line x1="848.5" y1="762.5" x2="848.5" y2="1200.5" stroke="#000" stroke-width="1" stroke-dasharray="1 2"/><line x1="120.5" y1="821.5" x2="859.5" y2="821.5" stroke="#000" stroke-width="1" stroke-dasharray="1 2"/><line x1="120.5" y1="925.5" x2="859.5" y2="925.5" stroke="#000" stroke-width="1" stroke-dasharray="1 2"/><line x1="120.5" y1="1029.5" x2="859.5" y2="1029.5" stroke="#000" stroke-width="1" stroke-dasharray="1 2"/><line x1="120.5" y1="1133.5" x2="859.5" y2="1133.5" stroke="#000" stroke-width="1" stroke-dasharray="1 2"/>
<g shape-rendering="crispEdges" clip-path="url(#clip3)"><defs><clipPath id="clip3"><rect x="120" y="762" width="740" height="439"/></clipPath></defs><path d="M555 1107.5h2M582 1107.5h2M617 1107.5h4M623 1107.5h2M634 1107.5h2M651 1107.5h2M655 1107.5h2M659 1107.5h2M677 1107.5h2M701 1107.5h2M717 1107.5h2M724 1107.5h2M733 1107.5h4M738 1107.5h2M741 1107.5h2M756 1107.5h2M759 1107.5h2M768 1107.5h2M792 1107.5h2M799 1107.5h3M807 1107.5h3M811 1107.5h2M814 1107.5h5M820 1107.5h5M826 1107.5h9M839 1107.5h8M749 1113.5h2M765 1113.5h6M772 1113.5h4M778 1113.5h2M791 1113.5h2M811 1113.5h3M825 1113.5h5M834 1113.5h2M840 1113.5h2M847 1113.5h2M749 1114.5h2M766 1114.5h5M772 1114.5h4M777 1114.5h3M791 1114.5h2M826 1114.5h4M834 1114.5h2M847 1114.5h2M594 1109.5h5M657 1109.5h2M701 1109.5h2M732 1109.5h2M735 1109.5h2M738 1109.5h5M755 1109.5h3M759 1109.5h2M768 1109.5h2M771 1109.5h5M794 1109.5h3M803 1109.5h7M811 1109.5h2M814 1109.5h7M822 1109.5h17M840 1109.5h6M847 1109.5h2M641 1110.5h2M653 1110.5h2M657 1110.5h2M735 1110.5h2M738 1110.5h2M743 1110.5h2M750 1110.5h4M755 1110.5h2M768 1110.5h2M771 1110.5h5M794 1110.5h3M803 1110.5h7M811 1110.5h5M817 1110.5h3M822 1110.5h2M825 1110.5h14M840 1110.5h4M847 1110.5h2M396 1087.5h2M562 1103.5h2M661 1103.5h2M664 1103.5h2M675 1103.5h2M693 1103.5h2M711 1103.5h2M714 1103.5h2M719 1103.5h2M745 1103.5h2M798 1103.5h2M810 1103.5h2M844 1103.5h3M657 1112.5h2M749 1112.5h2M765 1112.5h6M772 1112.5h4M804 1112.5h3M811 1112.5h3M825 1112.5h5M831 1112.5h5M840 1112.5h4M847 1112.5h2M648 1105.5h2M655 1105.5h2M673 1105.5h2M700 1105.5h3M717 1105.5h2M729 1105.5h2M735 1105.5h2M759 1105.5h2M797 1105.5h3M810 1105.5h3M820 1105.5h3M826 1105.5h2M829 1105.5h2M839 1105.5h4M844 1105.5h3M133 925.5h2M592 1108.5h2M599 1108.5h2M621 1108.5h2M625 1108.5h6M659 1108.5h2M677 1108.5h2M701 1108.5h2M731 1108.5h6M738 1108.5h5M755 1108.5h3M759 1108.5h2M768 1108.5h2M792 1108.5h5M803 1108.5h3M807 1108.5h3M811 1108.5h2M814 1108.5h5M822 1108.5h13M838 1108.5h9M398 1088.5h2M417 1088.5h2M786 1133.5h2M304 1024.5h2M704 1024.5h2M153 931.5h4M326 1037.5h2M638 1111.5h2M657 1111.5h2M736 1111.5h2M749 1111.5h2M752 1111.5h3M763 1111.5h2M768 1111.5h3M772 1111.5h4M801 1111.5h6M811 1111.5h5M825 1111.5h5M831 1111.5h5M840 1111.5h4M847 1111.5h2M527 1100.5h2M545 1100.5h2M566 1100.5h2M684 1100.5h2M716 1100.5h2M350 1052.5h2M437 1070.5h4M401 1090.5h2M414 1090.5h2M786 1160.5h3M189 941.5h3M785 1143.5h4M547 1101.5h2M610 1101.5h2M684 1101.5h2M692 1101.5h2M709 1101.5h2M716 1101.5h2M845 1101.5h2M786 1161.5h3M661 1102.5h2M664 1102.5h2M671 1102.5h2M692 1102.5h2M709 1102.5h2M716 1102.5h2M719 1102.5h2M745 1102.5h2M844 1102.5h3M780 1122.5h3M543 1099.5h2M456 1061.5h3M475 1061.5h4M704 1013.5h2M384 1077.5h2M296 1019.5h2M704 1019.5h2M580 1106.5h2M586 1106.5h2M601 1106.5h2M608 1106.5h2M613 1106.5h2M634 1106.5h2M655 1106.5h2M666 1106.5h3M677 1106.5h2M701 1106.5h2M717 1106.5h2M724 1106.5h2M733 1106.5h4M744 1106.5h2M759 1106.5h2M799 1106.5h3M810 1106.5h3M814 1106.5h3M820 1106.5h5M826 1106.5h5M839 1106.5h8M342 1047.5h2M507 1095.5h3M514 1095.5h2M449 1065.5h2M391 1083.5h2M785 1155.5h4M157 932.5h3M786 1138.5h4M516 1096.5h2M686 1096.5h2M454 1062.5h2M459 1062.5h4M468 1062.5h7M785 1156.5h4M551 1104.5h2M560 1104.5h2M569 1104.5h2M655 1104.5h2M673 1104.5h2M690 1104.5h2M698 1104.5h2M719 1104.5h2M722 1104.5h2M728 1104.5h3M735 1104.5h2M798 1104.5h2M810 1104.5h2M840 1104.5h3M844 1104.5h3M214 948.5h2M316 1031.5h2M372 1067.5h2M445 1067.5h2M287 1014.5h2M704 1014.5h2M284 1012.5h2M775 1119.5h3M781 1119.5h2M847 1119.5h2M142 928.5h4M443 1068.5h2M406 1093.5h2M409 1093.5h2M681 1093.5h2M363 1060.5h2M348 1051.5h2M321 1034.5h2M785 1150.5h4M192 942.5h4M313 1029.5h2M785 1151.5h4M146 929.5h4M775 1121.5h2M780 1121.5h3M355 1055.5h2M785 1145.5h4M766 1115.5h3M774 1115.5h2M777 1115.5h3M847 1115.5h2M786 1163.5h2M786 1128.5h2M167 935.5h4M785 1146.5h4M767 1116.5h2M774 1116.5h2M777 1116.5h3M847 1116.5h2M274 1006.5h2M789 1125.5h2M786 1130.5h2M530 1098.5h6M686 1098.5h2M196 943.5h3M686 1097.5h2M786 1140.5h3M786 1158.5h3M775 1120.5h2M780 1120.5h3M847 1120.5h2M272 1005.5h2M265 1001.5h2M171 936.5h4M337 1044.5h2M786 1135.5h2M785 1153.5h4M767 1118.5h2M775 1118.5h3M847 1118.5h2M704 1023.5h2M150 930.5h3M510 1094.5h4M299 1021.5h2M704 1021.5h2M329 1039.5h2M767 1117.5h2M777 1117.5h3M847 1117.5h2M160 933.5h4M291 1016.5h2M704 1016.5h2M441 1069.5h2M358 1057.5h2M175 937.5h3M785 1148.5h4M786 1136.5h2M331 1040.5h2M378 1072.5h2M429 1072.5h3M783 1131.5h2M786 1131.5h2M367 1063.5h2M463 1063.5h5M786 1127.5h2M789 1127.5h2M164 934.5h3M786 1126.5h2M789 1126.5h2M353 1054.5h2M404 1092.5h2M681 1092.5h2M323 1035.5h2M294 1018.5h2M704 1018.5h2M432 1071.5h5M279 1009.5h2M361 1059.5h2M309 1027.5h2M786 1162.5h3M786 1129.5h2M267 1002.5h2M345 1049.5h2M785 1157.5h4M135 926.5h4M786 1134.5h2M412 1091.5h2M785 1152.5h4M185 940.5h4M207 946.5h3M785 1147.5h4M289 1015.5h2M704 1015.5h2M139 927.5h3M783 1132.5h2M786 1132.5h2M785 1142.5h4M210 947.5h4M311 1028.5h2M786 1137.5h2M277 1008.5h2M340 1046.5h2M306 1025.5h2M704 1025.5h2M334 1042.5h2M301 1022.5h2M704 1022.5h2M704 1017.5h2M182 939.5h3M704 1020.5h2M451 1064.5h2M447 1066.5h2M318 1032.5h2M282 1011.5h2M786 1141.5h3M786 1159.5h3M785 1154.5h4M199 944.5h4M785 1149.5h4M270 1004.5h2M785 1144.5h4M203 945.5h4M178 938.5h4M786 1139.5h3M826.5 1101v4M492.5 1086v2M811.5 1114v1M386.5 1078v1M762.5 1106v4M751.5 1106v4M792.5 1109v4M709.5 1103v3M703.5 1026v51M743.5 1111v5M702.5 1077v28M702.5 1110v5M493.5 1088v2M784.5 1133v9M387.5 1079v1M706.5 1043v44M482.5 1068v2M537.5 1102v2M557.5 1108v1M683.5 1094v4M538.5 1104v2M613.5 1107v1M841.5 1114v1M694.5 1104v3M747.5 1104v4M486.5 1075v2M664.5 1100v2M739.5 1111v2M708.5 1106v6M689.5 1102v2M655.5 1108v2M519.5 1099v2M542.5 1100v2M845.5 1099v2M845.5 1110v2M823.5 1111v1M728.5 1100v4M223.5 956v2M286.5 1013v1M848.5 1075v34M848.5 1121v4M678.5 1109v2M636.5 1103v3M776.5 1122v5M804.5 1103v5M371.5 1066v1M796.5 1111v3M746.5 1097v5M754.5 1112v3M727.5 1105v4M281.5 1010v1M632.5 1106v1M833.5 1099v8M716.5 1093v7M758.5 1110v2M719.5 1100v2M697.5 1100v3M791.5 1115v4M842.5 1099v5M787.5 1089v37M787.5 1164v6M425.5 1078v1M489.5 1080v2M428.5 1073v2M780.5 1123v4M591.5 1109v2M564.5 1102v1M481.5 1066v2M522.5 1105v1M761.5 1110v4M753.5 1106v4M485.5 1073v2M506.5 1096v1M518.5 1097v2M663.5 1104v4M802.5 1112v2M830.5 1102v3M382.5 1075v1M814.5 1105v1M222.5 955v1M731.5 1106v2M749.5 1115v5M572.5 1100v2M647.5 1103v2M244.5 979v1M394.5 1085v1M315.5 1030v1M712.5 1102v1M419.5 1087v1M245.5 980v1M229.5 963v1M553.5 1105v1M821.5 1102v3M230.5 964v1M696.5 1099v1M640.5 1109v1M488.5 1078v2M799.5 1101v2M799.5 1108v1M654.5 1111v2M499.5 1097v1M521.5 1103v2M252.5 987v1M783.5 1129v2M236.5 970v1M575.5 1101v1M705.5 1026v17M840.5 1102v2M258.5 994v1M237.5 971v1M269.5 1003v1M503.5 1099v1M526.5 1101v1M259.5 995v1M393.5 1084v1M685.5 1102v2M662.5 1100v2M779.5 1118v2M768.5 1106v1M768.5 1119v1M726.5 1109v5M737.5 1112v3M643.5 1106v3M646.5 1102v1M590.5 1111v2M336.5 1043v1M741.5 1110v1M666.5 1107v1M790.5 1119v6M541.5 1102v2M491.5 1084v2M616.5 1105v2M574.5 1100v1M806.5 1113v2M250.5 985v1M484.5 1072v1M775.5 1117v1M661.5 1104v2M487.5 1077v1M818.5 1106v1M810.5 1099v4M642.5 1109v1M642.5 1111v1M653.5 1108v2M536.5 1100v2M251.5 986v1M760.5 1101v4M221.5 954v1M480.5 1064v2M520.5 1101v2M303.5 1023v1M571.5 1102v2M612.5 1102v4M707.5 1087v19M688.5 1099v3M782.5 1123v6M742.5 1104v3M665.5 1104v2M718.5 1108v3M615.5 1104v1M490.5 1082v2M388.5 1080v1M483.5 1070v2M836.5 1108v1M389.5 1081v1M756.5 1103v4M748.5 1108v3M239.5 973v2M789.5 1128v10M603.5 1107v3M801.5 1103v3M801.5 1108v3M403.5 1091v1M695.5 1100v3M240.5 975v1M224.5 958v1M679.5 1099v7M832.5 1113v3M225.5 959v1M763.5 1110v1M763.5 1112v1M691.5 1103v1M732.5 1110v7M422.5 1082v2M328.5 1038v1M733.5 1103v3M736.5 1098v6M781.5 1116v3M232.5 966v1M479.5 1062v2M637.5 1106v5M217.5 950v1M680.5 1095v4M752.5 1112v3M827.5 1115v3M672.5 1103v1M657.5 1108v1M657.5 1113v2M713.5 1104v2M577.5 1103v1M744.5 1107v3M383.5 1076v1M725.5 1104v2M725.5 1108v1M260.5 996v1M261.5 997v1M395.5 1086v1M231.5 965v1M660.5 1106v1M246.5 981v1M554.5 1106v1M216.5 949v1M505.5 1097v1M797.5 1106v2M320.5 1033v1M686.5 1099v1M820.5 1108v1M253.5 988v1M645.5 1103v1M565.5 1101v1M771.5 1106v3M523.5 1104v1M421.5 1084v1M721.5 1105v3M819.5 1111v2M588.5 1107v2M611.5 1099v2M569.5 1103v1M606.5 1106v2M500.5 1098v1M501.5 1099v1M610.5 1102v3M576.5 1102v1M390.5 1082v1M690.5 1105v1M238.5 972v1M674.5 1106v1M808.5 1104v3M424.5 1079v2M602.5 1105v1M549.5 1102v1M656.5 1101v3M550.5 1103v1M308.5 1026v1M568.5 1101v2M675.5 1102v1M416.5 1089v1M633.5 1105v1M644.5 1104v2M704.5 1012v1M256.5 991v2M609.5 1105v1M609.5 1107v1M682.5 1091v1M360.5 1058v1M333.5 1041v1M241.5 976v1M614.5 1105v1M795.5 1106v2M408.5 1094v1M670.5 1103v1M248.5 983v1M420.5 1085v2M601.5 1107v1M218.5 951v1M219.5 952v1M540.5 1104v2M427.5 1075v1M605.5 1108v2M226.5 960v1M693.5 1100v1M589.5 1109v2M495.5 1092v2M559.5 1105v1M570.5 1105v1M352.5 1053v1M262.5 998v1M496.5 1094v1M374.5 1068v1M263.5 999v1M233.5 967v1M375.5 1069v1M502.5 1100v1M525.5 1102v1M723.5 1105v1M400.5 1089v1M423.5 1081v1M631.5 1107v1M578.5 1104v1M579.5 1105v1M255.5 990v1M325.5 1036v1M730.5 1102v2M639.5 1110v1M247.5 982v1M494.5 1090v2M681.5 1094v1M684.5 1098v2M650.5 1106v1M567.5 1099v1M715.5 1104v1M745.5 1104v2M677.5 1105v1M729.5 1106v1M635.5 1108v1M529.5 1099v1M824.5 1104v2M604.5 1110v2M254.5 989v1M585.5 1107v1M722.5 1102v2M369.5 1064v1M558.5 1106v2M669.5 1104v2M453.5 1063v1M370.5 1065v1M381.5 1074v1M676.5 1104v1M243.5 978v1M344.5 1048v1M774.5 1107v2M347.5 1050v1M638.5 1112v2M809.5 1111v1M339.5 1045v1M717.5 1103v2M426.5 1076v2M770.5 1115v1M227.5 961v1M816.5 1105v1M228.5 962v1M843.5 1113v1M411.5 1092v1M365.5 1061v1M573.5 1099v1M498.5 1096v1M366.5 1062v1M235.5 969v1M276.5 1007v1M377.5 1071v1M380.5 1073v1M257.5 993v1M220.5 953v1M539.5 1106v1M242.5 977v1M587.5 1105v1M264.5 1000v1M504.5 1098v1M815.5 1112v1M298.5 1020v1M524.5 1103v1M249.5 984v1M497.5 1095v1M714.5 1102v1M698.5 1103v1M234.5 968v1M293.5 1017v1M376.5 1070v1M584.5 1108v1M357.5 1056v1M535.5 1099v1M607.5 1105v1" stroke="#ff0000" stroke-width="1" fill="none"/><path d="M556 1100.5h2M594 1100.5h2M621 1100.5h3M664 1100.5h2M698 1100.5h3M722 1100.5h2M728 1100.5h2M731 1100.5h2M738 1100.5h2M743 1100.5h2M750 1100.5h2M762 1100.5h2M766 1100.5h2M797 1100.5h6M804 1100.5h7M812 1100.5h7M821 1100.5h6M828 1100.5h2M831 1100.5h18M575 1098.5h5M599 1098.5h2M616 1098.5h2M635 1098.5h2M640 1098.5h4M664 1098.5h2M667 1098.5h2M706 1098.5h2M710 1098.5h2M716 1098.5h2M719 1098.5h3M732 1098.5h2M735 1098.5h3M743 1098.5h2M797 1098.5h2M800 1098.5h16M823 1098.5h21M847 1098.5h2M541 1095.5h2M625 1095.5h2M631 1095.5h3M644 1095.5h2M651 1095.5h4M665 1095.5h2M678 1095.5h2M682 1095.5h4M693 1095.5h2M708 1095.5h2M716 1095.5h2M736 1095.5h2M803 1095.5h2M827 1095.5h4M841 1095.5h2M558 1099.5h2M599 1099.5h2M640 1099.5h2M664 1099.5h2M699 1099.5h2M706 1099.5h2M710 1099.5h2M720 1099.5h2M729 1099.5h2M732 1099.5h2M735 1099.5h2M738 1099.5h2M743 1099.5h2M797 1099.5h2M800 1099.5h3M804 1099.5h15M821 1099.5h9M831 1099.5h15M847 1099.5h2M554 1101.5h2M592 1101.5h2M628 1101.5h2M698 1101.5h2M701 1101.5h2M712 1101.5h2M722 1101.5h2M727 1101.5h3M731 1101.5h2M738 1101.5h2M749 1101.5h3M762 1101.5h2M765 1101.5h3M795 1101.5h5M801 1101.5h2M804 1101.5h7M813 1101.5h6M821 1101.5h2M831 1101.5h18M662 1092.5h2M675 1092.5h2M680 1092.5h2M688 1092.5h2M691 1092.5h2M714 1092.5h2M585 1104.5h2M619 1104.5h2M696 1104.5h2M724 1104.5h3M740 1104.5h2M746 1104.5h4M753 1104.5h4M758 1104.5h6M767 1104.5h11M794 1104.5h4M804 1104.5h3M815 1104.5h2M819 1104.5h4M842 1104.5h2M602 1107.5h2M756 1107.5h2M762 1107.5h2M768 1107.5h3M773 1107.5h2M133 891.5h42M521 1091.5h2M637 1091.5h2M662 1091.5h2M680 1091.5h2M688 1091.5h2M691 1091.5h2M786 1178.5h2M550 1103.5h2M613 1103.5h3M696 1103.5h2M748 1103.5h4M753 1103.5h4M758 1103.5h6M767 1103.5h4M772 1103.5h6M794 1103.5h6M804 1103.5h7M815 1103.5h2M818 1103.5h5M837 1103.5h2M842 1103.5h4M786 1179.5h2M266 817.5h3M561 1097.5h2M572 1097.5h3M635 1097.5h2M658 1097.5h2M667 1097.5h2M678 1097.5h2M716 1097.5h2M732 1097.5h2M735 1097.5h3M743 1097.5h2M800 1097.5h13M814 1097.5h2M825 1097.5h8M837 1097.5h3M841 1097.5h2M417 868.5h3M480 1047.5h2M669 1094.5h3M684 1094.5h2M690 1094.5h2M708 1094.5h2M716 1094.5h2M803 1094.5h2M291 808.5h3M539 1096.5h2M570 1096.5h2M658 1096.5h2M665 1096.5h2M678 1096.5h2M693 1096.5h3M708 1096.5h2M716 1096.5h2M735 1096.5h3M802 1096.5h5M826 1096.5h7M837 1096.5h3M841 1096.5h2M780 1117.5h2M274 814.5h3M519 1090.5h2M672 1090.5h3M680 1090.5h2M517 1089.5h2M680 1089.5h2M604 1106.5h2M608 1106.5h2M744 1106.5h2M751 1106.5h2M756 1106.5h3M761 1106.5h4M768 1106.5h3M773 1106.5h3M794 1106.5h3M530 1102.5h6M552 1102.5h2M582 1102.5h2M590 1102.5h2M596 1102.5h2M611 1102.5h2M696 1102.5h2M701 1102.5h2M712 1102.5h2M727 1102.5h2M731 1102.5h2M738 1102.5h2M749 1102.5h3M762 1102.5h2M772 1102.5h3M776 1102.5h2M795 1102.5h5M804 1102.5h7M814 1102.5h3M820 1102.5h3M836 1102.5h3M842 1102.5h7M511 1085.5h2M294 807.5h3M175 890.5h41M780 1116.5h2M482 1046.5h2M789 1133.5h2M662 1093.5h2M670 1093.5h2M687 1093.5h2M690 1093.5h3M714 1093.5h2M803 1093.5h2M606 1105.5h2M740 1105.5h2M748 1105.5h2M753 1105.5h4M758 1105.5h6M768 1105.5h4M773 1105.5h3M794 1105.5h4M805 1105.5h2M819 1105.5h4M842 1105.5h2M413 871.5h2M283 811.5h3M409 874.5h2M269 816.5h3M478 1048.5h2M602 1108.5h2M762 1108.5h2M769 1108.5h2M773 1108.5h2M792 1108.5h2M280 812.5h3M791 1109.5h3M297 806.5h2M791 1112.5h2M786 1180.5h2M780 1115.5h2M780 1119.5h2M289 809.5h2M780 1118.5h2M272 815.5h2M471 1063.5h2M264 818.5h2M791 1111.5h3M779 1114.5h3M786 1182.5h2M703 775.5h2M507 1087.5h2M514 1087.5h2M509 1086.5h2M791 1110.5h3M789 1130.5h2M786 1181.5h2M286 810.5h3M786 1184.5h2M277 813.5h3M790 1122.5h2M789 1129.5h2M789 1132.5h2M786 1183.5h2M789 1131.5h2M786 1185.5h2M314.5 833v2M703.5 776v166M660.5 1098v2M618.5 1099v5M504.5 1078v3M523.5 1092v1M838.5 1104v2M705.5 776v165M242.5 850v2M796.5 1107v3M702.5 942v159M706.5 941v157M335.5 894v4M433.5 910v5M686.5 1090v3M739.5 1103v1M446.5 969v4M808.5 1094v3M233.5 863v2M640.5 1100v2M299.5 807v2M766.5 1095v5M248.5 841v2M426.5 884v3M845.5 1094v5M845.5 1104v1M303.5 814v2M493.5 1059v2M342.5 925v4M429.5 892v4M466.5 1038v5M344.5 933v5M467.5 1043v5M621.5 1101v1M320.5 843v2M786.5 1158v20M563.5 1096v1M321.5 845v2M324.5 850v2M351.5 953v2M792.5 1100v8M453.5 999v4M385.5 943v3M693.5 1094v1M693.5 1097v2M355.5 959v1M601.5 1100v7M327.5 859v4M791.5 1113v9M403.5 889v3M435.5 919v5M485.5 1046v1M544.5 1095v2M436.5 924v5M382.5 952v3M463.5 1027v2M589.5 1103v1M232.5 865v1M309.5 824v2M841.5 1094v1M312.5 830v1M665.5 1097v1M333.5 885v5M313.5 831v2M334.5 890v4M742.5 1092v5M525.5 1095v1M753.5 1096v7M659.5 1095v1M700.5 1096v3M503.5 1076v2M620.5 1102v2M223.5 878v1M442.5 951v5M789.5 1134v13M646.5 1096v3M432.5 905v5M469.5 1053v5M848.5 1067v31M639.5 1092v6M473.5 1059v3M421.5 871v3M394.5 915v3M734.5 1100v3M785.5 1148v10M301.5 811v1M788.5 1147v31M459.5 1019v2M821.5 1098v1M821.5 1106v1M726.5 1103v1M424.5 879v3M330.5 872v5M340.5 916v4M627.5 1096v2M425.5 882v2M216.5 888v2M343.5 929v4M263.5 819v2M790.5 1123v6M438.5 933v5M388.5 933v4M661.5 1094v4M322.5 847v1M441.5 947v4M794.5 1107v1M616.5 1099v3M254.5 832v2M733.5 1096v1M222.5 879v2M336.5 898v5M744.5 1101v5M600.5 1096v2M812.5 1093v4M718.5 1088v6M393.5 918v3M339.5 911v5M787.5 1186v5M447.5 973v4M806.5 1094v2M806.5 1106v1M630.5 1097v4M487.5 1048v2M767.5 1102v1M714.5 1094v5M247.5 843v1M751.5 1098v2M751.5 1104v2M430.5 896v5M345.5 938v4M476.5 1052v3M516.5 1088v1M468.5 1048v5M346.5 942v4M238.5 856v1M645.5 1093v2M454.5 1003v4M704.5 767v8M680.5 1088v1M680.5 1093v1M419.5 867v1M384.5 946v3M444.5 960v4M784.5 1135v13M649.5 1098v3M457.5 1015v2M781.5 1110v4M781.5 1120v1M391.5 924v3M778.5 1105v7M770.5 1102v1M679.5 1094v1M679.5 1098v3M464.5 1029v4M763.5 1099v1M663.5 1090v1M663.5 1094v4M580.5 1099v2M450.5 986v4M783.5 1129v6M474.5 1057v2M359.5 964v2M237.5 857v2M644.5 1096v2M637.5 1092v5M819.5 1106v3M390.5 927v3M331.5 877v4M625.5 1096v1M617.5 1096v2M833.5 1102v3M370.5 968v1M221.5 881v1M810.5 1094v3M402.5 892v2M456.5 1011v4M328.5 863v5M636.5 1099v2M227.5 872v2M708.5 1097v1M707.5 1100v2M406.5 880v3M650.5 1096v2M730.5 1097v2M647.5 1099v2M445.5 964v5M715.5 1089v3M262.5 821v1M710.5 1097v1M494.5 1061v3M782.5 1121v8M495.5 1064v2M536.5 1100v2M405.5 883v3M326.5 855v4M741.5 1097v7M638.5 1088v3M323.5 848v2M828.5 1093v2M828.5 1101v4M353.5 956v2M354.5 958v1M416.5 869v1M596.5 1101v1M484.5 1045v1M246.5 844v2M448.5 977v5M801.5 1102v1M311.5 828v2M315.5 835v1M396.5 909v3M505.5 1081v3M524.5 1093v2M831.5 1102v5M695.5 1097v5M648.5 1101v2M420.5 869v2M304.5 816v2M307.5 821v2M713.5 1099v2M226.5 874v1M842.5 1106v3M701.5 1103v2M325.5 852v3M338.5 907v4M236.5 859v1M356.5 960v2M804.5 1092v1M545.5 1097v2M486.5 1047v1M411.5 873v1M795.5 1100v1M317.5 838v2M568.5 1093v2M374.5 963v1M757.5 1108v3M257.5 828v2M369.5 969v1M823.5 1095v3M826.5 1101v2M220.5 882v2M818.5 1102v1M719.5 1094v4M305.5 818v1M341.5 920v5M381.5 955v2M302.5 812v2M628.5 1098v3M439.5 938v5M477.5 1050v2M506.5 1084v2M357.5 962v1M685.5 1093v1M685.5 1096v1M337.5 903v4M745.5 1107v2M358.5 963v1M251.5 837v1M547.5 1100v1M488.5 1050v1M760.5 1100v3M779.5 1112v2M584.5 1103v1M847.5 1103v5M428.5 890v2M431.5 901v4M528.5 1099v1M455.5 1007v4M250.5 838v2M458.5 1017v2M774.5 1101v1M774.5 1109v4M839.5 1095v1M588.5 1104v1M465.5 1033v5M231.5 866v2M581.5 1101v1M451.5 990v4M241.5 852v1M475.5 1055v2M404.5 886v3M368.5 970v1M434.5 915v4M687.5 1094v2M383.5 949v3M234.5 862v1M423.5 877v2M549.5 1102v1M490.5 1052v2M629.5 1102v2M408.5 875v2M526.5 1096v1M440.5 943v4M387.5 937v3M225.5 875v2M395.5 912v3M690.5 1095v2M609.5 1107v1M765.5 1102v4M671.5 1095v1M449.5 982v4M399.5 900v3M834.5 1093v5M407.5 877v3M754.5 1106v3M224.5 877v1M470.5 1058v5M252.5 835v2M422.5 874v3M598.5 1100v2M837.5 1094v2M398.5 903v3M496.5 1066v2M499.5 1070v2M615.5 1102v1M615.5 1104v1M689.5 1088v3M452.5 994v5M642.5 1097v1M772.5 1099v3M597.5 1103v1M389.5 930v3M397.5 906v3M347.5 946v3M472.5 1062v1M329.5 868v4M634.5 1096v1M401.5 894v3M461.5 1023v2M230.5 868v1M587.5 1105v1M427.5 887v3M497.5 1068v1M375.5 962v1M664.5 1101v4M565.5 1094v1M367.5 971v1M471.5 1064v2M546.5 1099v1M379.5 958v1M229.5 869v2M261.5 822v2M332.5 881v4M318.5 840v1M443.5 956v4M527.5 1097v2M682.5 1093v2M460.5 1021v2M415.5 870v1M306.5 819v2M260.5 824v1M255.5 831v1M386.5 940v3M814.5 1095v2M548.5 1101v1M492.5 1056v3M666.5 1092v3M840.5 1102v1M711.5 1100v1M316.5 836v2M319.5 841v2M567.5 1092v1M654.5 1096v1M529.5 1100v2M677.5 1093v2M235.5 860v2M809.5 1104v2M832.5 1092v4M692.5 1089v2M619.5 1105v2M824.5 1101v4M360.5 966v1M732.5 1103v1M361.5 967v2M364.5 971v2M668.5 1096v1M491.5 1054v2M656.5 1099v2M610.5 1104v2M777.5 1101v1M392.5 921v3M721.5 1097v1M437.5 929v4M378.5 959v1M538.5 1097v2M256.5 830v1M507.5 1086v1M560.5 1098v1M348.5 949v2M362.5 969v1M363.5 970v1M674.5 1091v1M489.5 1051v1M537.5 1099v1M799.5 1104v3M240.5 853v1M696.5 1105v2M643.5 1099v1M624.5 1097v3M566.5 1093v1M350.5 952v1M749.5 1106v1M239.5 854v2M817.5 1097v2M380.5 957v1M462.5 1025v2M798.5 1096v2M669.5 1095v1M498.5 1069v1M372.5 966v1M752.5 1107v3M502.5 1074v2M657.5 1098v1M611.5 1103v1M672.5 1091v2M300.5 809v2M400.5 897v3M800.5 1096v1M217.5 887v1M815.5 1105v4M245.5 846v1M310.5 826v2M758.5 1101v2M667.5 1099v2M500.5 1072v1M501.5 1073v1M746.5 1105v1M723.5 1099v1M723.5 1102v1M602.5 1109v2M244.5 847v2M830.5 1093v2M655.5 1097v2M366.5 972v1M308.5 823v1M228.5 871v1M373.5 964v2M219.5 884v1M376.5 961v1M756.5 1101v2M569.5 1095v1M259.5 825v2M371.5 967v1M736.5 1100v1M676.5 1091v1M218.5 885v2M724.5 1103v1M349.5 951v1M253.5 834v1M564.5 1095v1M243.5 849v1M365.5 973v1M377.5 960v1M623.5 1101v1M513.5 1086v1M412.5 872v1M631.5 1096v1M717.5 1099v1M258.5 827v1M352.5 955v1M249.5 840v1M543.5 1094v1M478.5 1049v1" stroke="#0000ff" stroke-width="1" fill="none"/><path d="M148 950.5h2M354 994.5h2M358 994.5h3M363 994.5h3M368 994.5h3M373 994.5h3M378 994.5h3M383 994.5h3M388 994.5h3M393 994.5h3M398 994.5h3M403 994.5h3M827 1045.5h2M248 981.5h3M628 1000.5h3M633 1000.5h3M638 1000.5h3M643 1000.5h3M648 1000.5h3M653 1000.5h3M658 1000.5h3M223 971.5h2M319 993.5h2M323 993.5h3M328 993.5h3M333 993.5h3M338 993.5h3M343 993.5h3M348 993.5h3M756 1021.5h2M158 953.5h3M801 1029.5h2M489 997.5h2M493 997.5h3M498 997.5h3M503 997.5h3M508 997.5h3M513 997.5h3M518 997.5h3M523 997.5h3M528 997.5h3M534 998.5h2M538 998.5h3M543 998.5h3M548 998.5h3M553 998.5h3M558 998.5h3M563 998.5h3M568 998.5h3M573 998.5h3M663 1001.5h3M668 1001.5h3M673 1001.5h3M678 1001.5h3M683 1001.5h3M688 1001.5h2M448 996.5h3M453 996.5h3M458 996.5h3M463 996.5h3M468 996.5h3M473 996.5h3M478 996.5h3M483 996.5h3M263 987.5h3M139 948.5h2M408 995.5h3M413 995.5h3M418 995.5h3M423 995.5h3M428 995.5h3M433 995.5h3M438 995.5h3M443 995.5h3M579 999.5h2M583 999.5h3M588 999.5h3M593 999.5h3M598 999.5h3M603 999.5h3M608 999.5h3M613 999.5h3M618 999.5h3M623 999.5h2M771 1024.5h3M741 1018.5h2M812 1034.5h2M243 979.5h3M218 969.5h2M721 1015.5h3M806 1031.5h2M143 949.5h3M258 985.5h3M208 966.5h3M782 1026.5h2M786 1026.5h2M154 952.5h2M726 1016.5h3M228 973.5h2M693 1002.5h3M698 1002.5h3M173 957.5h3M269 988.5h2M273 988.5h3M766 1023.5h3M163 954.5h3M203 965.5h3M233 975.5h2M188 961.5h3M707 1013.5h2M288 990.5h3M308 992.5h3M313 992.5h3M169 956.5h2M198 963.5h2M278 989.5h3M283 989.5h3M711 1014.5h3M716 1014.5h2M816 1036.5h2M238 977.5h3M213 967.5h2M732 1017.5h2M736 1017.5h2M184 960.5h2M751 1020.5h2M294 991.5h2M298 991.5h3M303 991.5h2M178 958.5h3M761 1022.5h3M253 983.5h3M193 962.5h3M776 1025.5h3M796 1028.5h2M133 946.5h2M791 1027.5h2M746 1019.5h2M578.5 998v1M846.5 1078v2M842.5 1065v1M847.5 1080v1M847.5 1083v2M230.5 974v1M781.5 1025v1M625.5 1000v1M293.5 990v1M305.5 992v1M845.5 1073v3M235.5 976v1M839.5 1059v2M833.5 1050v1M818.5 1037v1M788.5 1027v1M841.5 1063v2M318.5 992v1M803.5 1030v1M743.5 1019v1M821.5 1039v1M838.5 1058v1M183.5 959v1M808.5 1032v1M706.5 1008v2M168.5 955v1M826.5 1044v1M758.5 1022v1M268.5 987v1M836.5 1053v2M843.5 1068v2M822.5 1040v1M705.5 1007v1M793.5 1028v1M703.5 1002v2M811.5 1033v1M153.5 951v1M844.5 1070v1M837.5 1055v1M488.5 996v1M823.5 1041v1M748.5 1020v1M707.5 1012v1M138.5 947v1M690.5 1002v1M731.5 1016v1M831.5 1048v1M533.5 997v1M704.5 1004v1M832.5 1049v1M215.5 968v1M718.5 1015v1M200.5 964v1M738.5 1018v1M150.5 951v1M353.5 993v1M848.5 1085v1M220.5 970v1M753.5 1021v1M135.5 947v1M225.5 972v1M798.5 1029v1" stroke="#ff0000" stroke-width="1" fill="none"/></g>
<rect x="120.5" y="762.5" width="739.0" height="438.0" fill="none" stroke="#000"/><line x1="155.5" y1="1200.5" x2="155.5" y2="1193.5" stroke="#000" stroke-width="1" /><line x1="155.5" y1="762.5" x2="155.5" y2="769.5" stroke="#000" stroke-width="1" /><line x1="189.5" y1="1200.5" x2="189.5" y2="1193.5" stroke="#000" stroke-width="1" /><line x1="189.5" y1="762.5" x2="189.5" y2="769.5" stroke="#000" stroke-width="1" /><line x1="216.5" y1="1200.5" x2="216.5" y2="1193.5" stroke="#000" stroke-width="1" /><line x1="216.5" y1="762.5" x2="216.5" y2="769.5" stroke="#000" stroke-width="1" /><line x1="237.5" y1="1200.5" x2="237.5" y2="1193.5" stroke="#000" stroke-width="1" /><line x1="237.5" y1="762.5" x2="237.5" y2="769.5" stroke="#000" stroke-width="1" /><line x1="256.5" y1="1200.5" x2="256.5" y2="1193.5" stroke="#000" stroke-width="1" /><line x1="256.5" y1="762.5" x2="256.5" y2="769.5" stroke="#000" stroke-width="1" /><line x1="272.5" y1="1200.5" x2="272.5" y2="1193.5" stroke="#000" stroke-width="1" /><line x1="272.5" y1="762.5" x2="272.5" y2="769.5" stroke="#000" stroke-width="1" /><line x1="286.5" y1="1200.5" x2="286.5" y2="1193.5" stroke="#000" stroke-width="1" /><line x1="286.5" y1="762.5" x2="286.5" y2="769.5" stroke="#000" stroke-width="1" /><line x1="381.5" y1="1200.5" x2="381.5" y2="1193.5" stroke="#000" stroke-width="1" /><line x1="381.5" y1="762.5" x2="381.5" y2="769.5" stroke="#000" stroke-width="1" /><line x1="429.5" y1="1200.5" x2="429.5" y2="1193.5" stroke="#000" stroke-width="1" /><line x1="429.5" y1="762.5" x2="429.5" y2="769.5" stroke="#000" stroke-width="1" /><line x1="464.5" y1="1200.5" x2="464.5" y2="1193.5" stroke="#000" stroke-width="1" /><line x1="464.5" y1="762.5" x2="464.5" y2="769.5" stroke="#000" stroke-width="1" /><line x1="490.5" y1="1200.5" x2="490.5" y2="1193.5" stroke="#000" stroke-width="1" /><line x1="490.5" y1="762.5" x2="490.5" y2="769.5" stroke="#000" stroke-width="1" /><line x1="512.5" y1="1200.5" x2="512.5" y2="1193.5" stroke="#000" stroke-width="1" /><line x1="512.5" y1="762.5" x2="512.5" y2="769.5" stroke="#000" stroke-width="1" /><line x1="530.5" y1="1200.5" x2="530.5" y2="1193.5" stroke="#000" stroke-width="1" /><line x1="530.5" y1="762.5" x2="530.5" y2="769.5" stroke="#000" stroke-width="1" /><line x1="546.5" y1="1200.5" x2="546.5" y2="1193.5" stroke="#000" stroke-width="1" /><line x1="546.5" y1="762.5" x2="546.5" y2="769.5" stroke="#000" stroke-width="1" /><line x1="560.5" y1="1200.5" x2="560.5" y2="1193.5" stroke="#000" stroke-width="1" /><line x1="560.5" y1="762.5" x2="560.5" y2="769.5" stroke="#000" stroke-width="1" /><line x1="656.5" y1="1200.5" x2="656.5" y2="1193.5" stroke="#000" stroke-width="1" /><line x1="656.5" y1="762.5" x2="656.5" y2="769.5" stroke="#000" stroke-width="1" /><line x1="704.5" y1="1200.5" x2="704.5" y2="1193.5" stroke="#000" stroke-width="1" /><line x1="704.5" y1="762.5" x2="704.5" y2="769.5" stroke="#000" stroke-width="1" /><line x1="738.5" y1="1200.5" x2="738.5" y2="1193.5" stroke="#000" stroke-width="1" /><line x1="738.5" y1="762.5" x2="738.5" y2="769.5" stroke="#000" stroke-width="1" /><line x1="765.5" y1="1200.5" x2="765.5" y2="1193.5" stroke="#000" stroke-width="1" /><line x1="765.5" y1="762.5" x2="765.5" y2="769.5" stroke="#000" stroke-width="1" /><line x1="787.5" y1="1200.5" x2="787.5" y2="1193.5" stroke="#000" stroke-width="1" /><line x1="787.5" y1="762.5" x2="787.5" y2="769.5" stroke="#000" stroke-width="1" /><line x1="805.5" y1="1200.5" x2="805.5" y2="1193.5" stroke="#000" stroke-width="1" /><line x1="805.5" y1="762.5" x2="805.5" y2="769.5" stroke="#000" stroke-width="1" /><line x1="821.5" y1="1200.5" x2="821.5" y2="1193.5" stroke="#000" stroke-width="1" /><line x1="821.5" y1="762.5" x2="821.5" y2="769.5" stroke="#000" stroke-width="1" /><line x1="835.5" y1="1200.5" x2="835.5" y2="1193.5" stroke="#000" stroke-width="1" /><line x1="835.5" y1="762.5" x2="835.5" y2="769.5" stroke="#000" stroke-width="1" /><line x1="298.5" y1="1200.5" x2="298.5" y2="1185.5" stroke="#000" stroke-width="1" /><line x1="298.5" y1="762.5" x2="298.5" y2="777.5" stroke="#000" stroke-width="1" /><line x1="573.5" y1="1200.5" x2="573.5" y2="1185.5" stroke="#000" stroke-width="1" /><line x1="573.5" y1="762.5" x2="573.5" y2="777.5" stroke="#000" stroke-width="1" /><line x1="848.5" y1="1200.5" x2="848.5" y2="1185.5" stroke="#000" stroke-width="1" /><line x1="848.5" y1="762.5" x2="848.5" y2="777.5" stroke="#000" stroke-width="1" /><line x1="120.5" y1="1188.5" x2="129.5" y2="1188.5" stroke="#000" stroke-width="1" /><line x1="859.5" y1="1188.5" x2="849.5" y2="1188.5" stroke="#000" stroke-width="1" /><line x1="120.5" y1="1175.5" x2="129.5" y2="1175.5" stroke="#000" stroke-width="1" /><line x1="859.5" y1="1175.5" x2="849.5" y2="1175.5" stroke="#000" stroke-width="1" /><line x1="120.5" y1="1165.5" x2="129.5" y2="1165.5" stroke="#000" stroke-width="1" /><line x1="859.5" y1="1165.5" x2="849.5" y2="1165.5" stroke="#000" stroke-width="1" /><line x1="120.5" y1="1156.5" x2="129.5" y2="1156.5" stroke="#000" stroke-width="1" /><line x1="859.5" y1="1156.5" x2="849.5" y2="1156.5" stroke="#000" stroke-width="1" /><line x1="120.5" y1="1149.5" x2="129.5" y2="1149.5" stroke="#000" stroke-width="1" /><line x1="859.5" y1="1149.5" x2="849.5" y2="1149.5" stroke="#000" stroke-width="1" /><line x1="120.5" y1="1143.5" x2="129.5" y2="1143.5" stroke="#000" stroke-width="1" /><line x1="859.5" y1="1143.5" x2="849.5" y2="1143.5" stroke="#000" stroke-width="1" /><line x1="120.5" y1="1138.5" x2="129.5" y2="1138.5" stroke="#000" stroke-width="1" /><line x1="859.5" y1="1138.5" x2="849.5" y2="1138.5" stroke="#000" stroke-width="1" /><line x1="120.5" y1="1133.5" x2="138.5" y2="1133.5" stroke="#000" stroke-width="1" /><line x1="859.5" y1="1133.5" x2="840.5" y2="1133.5" stroke="#000" stroke-width="1" /><line x1="120.5" y1="1102.5" x2="129.5" y2="1102.5" stroke="#000" stroke-width="1" /><line x1="859.5" y1="1102.5" x2="849.5" y2="1102.5" stroke="#000" stroke-width="1" /><line x1="120.5" y1="1084.5" x2="129.5" y2="1084.5" stroke="#000" stroke-width="1" /><line x1="859.5" y1="1084.5" x2="849.5" y2="1084.5" stroke="#000" stroke-width="1" /><line x1="120.5" y1="1071.5" x2="129.5" y2="1071.5" stroke="#000" stroke-width="1" /><line x1="859.5" y1="1071.5" x2="849.5" y2="1071.5" stroke="#000" stroke-width="1" /><line x1="120.5" y1="1061.5" x2="129.5" y2="1061.5" stroke="#000" stroke-width="1" /><line x1="859.5" y1="1061.5" x2="849.5" y2="1061.5" stroke="#000" stroke-width="1" /><line x1="120.5" y1="1052.5" x2="129.5" y2="1052.5" stroke="#000" stroke-width="1" /><line x1="859.5" y1="1052.5" x2="849.5" y2="1052.5" stroke="#000" stroke-width="1" /><line x1="120.5" y1="1045.5" x2="129.5" y2="1045.5" stroke="#000" stroke-width="1" /><line x1="859.5" y1="1045.5" x2="849.5" y2="1045.5" stroke="#000" stroke-width="1" /><line x1="120.5" y1="1039.5" x2="129.5" y2="1039.5" stroke="#000" stroke-width="1" /><line x1="859.5" y1="1039.5" x2="849.5" y2="1039.5" stroke="#000" stroke-width="1" /><line x1="120.5" y1="1034.5" x2="129.5" y2="1034.5" stroke="#000" stroke-width="1" /><line x1="859.5" y1="1034.5" x2="849.5" y2="1034.5" stroke="#000" stroke-width="1" /><line x1="120.5" y1="1029.5" x2="138.5" y2="1029.5" stroke="#000" stroke-width="1" /><line x1="859.5" y1="1029.5" x2="840.5" y2="1029.5" stroke="#000" stroke-width="1" /><line x1="120.5" y1="998.5" x2="129.5" y2="998.5" stroke="#000" stroke-width="1" /><line x1="859.5" y1="998.5" x2="849.5" y2="998.5" stroke="#000" stroke-width="1" /><line x1="120.5" y1="980.5" x2="129.5" y2="980.5" stroke="#000" stroke-width="1" /><line x1="859.5" y1="980.5" x2="849.5" y2="980.5" stroke="#000" stroke-width="1" /><line x1="120.5" y1="967.5" x2="129.5" y2="967.5" stroke="#000" stroke-width="1" /><line x1="859.5" y1="967.5" x2="849.5" y2="967.5" stroke="#000" stroke-width="1" /><line x1="120.5" y1="957.5" x2="129.5" y2="957.5" stroke="#000" stroke-width="1" /><line x1="859.5" y1="957.5" x2="849.5" y2="957.5" stroke="#000" stroke-width="1" /><line x1="120.5" y1="948.5" x2="129.5" y2="948.5" stroke="#000" stroke-width="1" /><line x1="859.5" y1="948.5" x2="849.5" y2="948.5" stroke="#000" stroke-width="1" /><line x1="120.5" y1="941.5" x2="129.5" y2="941.5" stroke="#000" stroke-width="1" /><line x1="859.5" y1="941.5" x2="849.5" y2="941.5" stroke="#000" stroke-width="1" /><line x1="120.5" y1="935.5" x2="129.5" y2="935.5" stroke="#000" stroke-width="1" /><line x1="859.5" y1="935.5" x2="849.5" y2="935.5" stroke="#000" stroke-width="1" /><line x1="120.5" y1="930.5" x2="129.5" y2="930.5" stroke="#000" stroke-width="1" /><line x1="859.5" y1="930.5" x2="849.5" y2="930.5" stroke="#000" stroke-width="1" /><line x1="120.5" y1="925.5" x2="138.5" y2="925.5" stroke="#000" stroke-width="1" /><line x1="859.5" y1="925.5" x2="840.5" y2="925.5" stroke="#000" stroke-width="1" /><line x1="120.5" y1="894.5" x2="129.5" y2="894.5" stroke="#000" stroke-width="1" /><line x1="859.5" y1="894.5" x2="849.5" y2="894.5" stroke="#000" stroke-width="1" /><line x1="120.5" y1="876.5" x2="129.5" y2="876.5" stroke="#000" stroke-width="1" /><line x1="859.5" y1="876.5" x2="849.5" y2="876.5" stroke="#000" stroke-width="1" /><line x1="120.5" y1="863.5" x2="129.5" y2="863.5" stroke="#000" stroke-width="1" /><line x1="859.5" y1="863.5" x2="849.5" y2="863.5" stroke="#000" stroke-width="1" /><line x1="120.5" y1="853.5" x2="129.5" y2="853.5" stroke="#000" stroke-width="1" /><line x1="859.5" y1="853.5" x2="849.5" y2="853.5" stroke="#000" stroke-width="1" /><line x1="120.5" y1="844.5" x2="129.5" y2="844.5" stroke="#000" stroke-width="1" /><line x1="859.5" y1="844.5" x2="849.5" y2="844.5" stroke="#000" stroke-width="1" /><line x1="120.5" y1="838.5" x2="129.5" y2="838.5" stroke="#000" stroke-width="1" /><line x1="859.5" y1="838.5" x2="849.5" y2="838.5" stroke="#000" stroke-width="1" /><line x1="120.5" y1="831.5" x2="129.5" y2="831.5" stroke="#000" stroke-width="1" /><line x1="859.5" y1="831.5" x2="849.5" y2="831.5" stroke="#000" stroke-width="1" /><line x1="120.5" y1="826.5" x2="129.5" y2="826.5" stroke="#000" stroke-width="1" /><line x1="859.5" y1="826.5" x2="849.5" y2="826.5" stroke="#000" stroke-width="1" /><line x1="120.5" y1="821.5" x2="138.5" y2="821.5" stroke="#000" stroke-width="1" /><line x1="859.5" y1="821.5" x2="840.5" y2="821.5" stroke="#000" stroke-width="1" /><line x1="120.5" y1="790.5" x2="129.5" y2="790.5" stroke="#000" stroke-width="1" /><line x1="859.5" y1="790.5" x2="849.5" y2="790.5" stroke="#000" stroke-width="1" /><line x1="120.5" y1="772.5" x2="129.5" y2="772.5" stroke="#000" stroke-width="1" /><line x1="859.5" y1="772.5" x2="849.5" y2="772.5" stroke="#000" stroke-width="1" />
<text x="73" y="831.9" font-size="24" font-weight="bold" fill="#000" textLength="24.4" lengthAdjust="spacingAndGlyphs">10</text><rect x="97.3" y="815.1999999999999" width="7.3" height="1.4" fill="#000" shape-rendering="auto"/><text x="105.8" y="820.1999999999999" font-size="15.5" font-weight="bold" fill="#000" textLength="8" lengthAdjust="spacingAndGlyphs">2</text>
<text x="73" y="935.9" font-size="24" font-weight="bold" fill="#000" textLength="24.4" lengthAdjust="spacingAndGlyphs">10</text><rect x="97.3" y="919.1999999999999" width="7.3" height="1.4" fill="#000" shape-rendering="auto"/><text x="105.8" y="924.1999999999999" font-size="15.5" font-weight="bold" fill="#000" textLength="8" lengthAdjust="spacingAndGlyphs">3</text>
<text x="73" y="1039.9" font-size="24" font-weight="bold" fill="#000" textLength="24.4" lengthAdjust="spacingAndGlyphs">10</text><rect x="97.3" y="1023.2" width="7.3" height="1.4" fill="#000" shape-rendering="auto"/><text x="105.8" y="1028.2" font-size="15.5" font-weight="bold" fill="#000" textLength="8" lengthAdjust="spacingAndGlyphs">4</text>
<text x="73" y="1143.9" font-size="24" font-weight="bold" fill="#000" textLength="24.4" lengthAdjust="spacingAndGlyphs">10</text><rect x="97.3" y="1127.2" width="7.3" height="1.4" fill="#000" shape-rendering="auto"/><text x="105.8" y="1132.2" font-size="15.5" font-weight="bold" fill="#000" textLength="8" lengthAdjust="spacingAndGlyphs">5</text>
<text x="292.6" y="1230" font-size="24" font-weight="bold" fill="#000" textLength="12.2" lengthAdjust="spacingAndGlyphs">1</text>
<text x="561.5" y="1230" font-size="24" font-weight="bold" fill="#000" textLength="24.4" lengthAdjust="spacingAndGlyphs">10</text>
<text x="832.5" y="1230" font-size="24" font-weight="bold" fill="#000" textLength="24.4" lengthAdjust="spacingAndGlyphs">10</text><text x="856.1" y="1219.5" font-size="15.5" font-weight="bold" fill="#000" textLength="8" lengthAdjust="spacingAndGlyphs">2</text>
<text x="404" y="1263.5" font-size="23.7" font-weight="bold" fill="#000" textLength="171" lengthAdjust="spacingAndGlyphs">Frequency (Hz)</text>
<text x="52" y="1303.5" font-size="22.7" font-weight="bold" fill="#000" textLength="250.5" lengthAdjust="spacingAndGlyphs">T0=22/09/2025 22:38:01</text>
<text x="428" y="1303.5" font-size="22.7" font-weight="bold" fill="#000" textLength="80.5" lengthAdjust="spacingAndGlyphs">Avg=30</text>
<text x="777.5" y="1303.5" font-size="22.7" font-weight="bold" fill="#000" textLength="107" lengthAdjust="spacingAndGlyphs">BW=0.375</text>
<text transform="translate(68.4,1045.9) rotate(-90)" font-size="27.8" font-weight="bold" textLength="128.5" lengthAdjust="spacingAndGlyphs">Magnitude</text>
<rect x="144" y="1113" width="324" height="79" fill="#000" /><rect x="138" y="1107" width="327" height="82" fill="#000" /><rect x="139" y="1108" width="325" height="80" fill="#fff" /><line x1="150" y1="1119.5" x2="207" y2="1119.5" stroke="#ff0000" stroke-width="1" /><text x="219.5" y="1124" font-size="11" font-weight="bold" fill="#000" textLength="200.5" lengthAdjust="spacingAndGlyphs">H1:SUS-ZM5_M1_DAMP_L_IN1_DQ</text><line x1="150" y1="1148.5" x2="207" y2="1148.5" stroke="#0000ff" stroke-width="1" /><text x="219.5" y="1151" font-size="11" font-weight="bold" fill="#000" textLength="200.5" lengthAdjust="spacingAndGlyphs">H1:SUS-ZM2_M1_DAMP_L_IN1_DQ</text><line x1="150" y1="1174.5" x2="207" y2="1174.5" stroke="#ff0000" stroke-width="1" stroke-dasharray="3 2"/><text x="219.5" y="1178" font-size="11" font-weight="bold" fill="#000" textLength="235" lengthAdjust="spacingAndGlyphs">H1:SUS-ZM5_M1_DAMP_L_IN1_DQ(RMS)</text>
<rect x="40" y="708" width="260" height="32" fill="#000" /><rect x="42" y="705" width="258" height="33" fill="#000" /><rect x="43" y="706" width="256" height="31" fill="#f2f2f2" /><text x="66" y="728.5" font-size="27.5" font-weight="bold" fill="#000" textLength="208" lengthAdjust="spacingAndGlyphs" shape-rendering="auto">Power spectrum</text>
</g>
</svg>
</body></html>
